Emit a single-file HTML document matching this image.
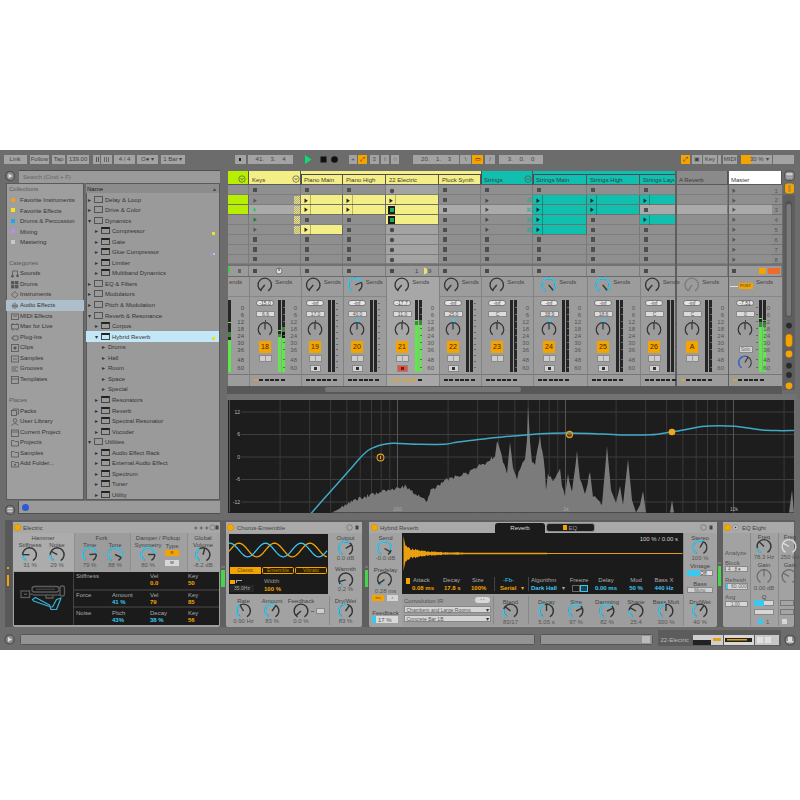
<!DOCTYPE html><html><head><meta charset="utf-8"><style>
html,body{margin:0;padding:0;background:#fff;}
body{width:800px;height:800px;position:relative;overflow:hidden;font-family:"Liberation Sans",sans-serif;}
body div, body svg{position:absolute;}
</style></head><body>
<div style="left:0px;top:150px;width:800px;height:500px;background:#6c6c6c;"></div>
<div style="left:3.5px;top:154.5px;width:23.2px;height:9px;background:#a3a3a3;font-size:6px;color:#444;text-align:center;line-height:9px;">Link</div>
<div style="left:29.5px;top:154.5px;width:19.7px;height:9px;background:#a3a3a3;font-size:6px;color:#444;text-align:center;line-height:9px;">Follow</div>
<div style="left:52px;top:154.5px;width:13.2px;height:9px;background:#a3a3a3;font-size:6px;color:#444;text-align:center;line-height:9px;">Tap</div>
<div style="left:67px;top:154.5px;width:22.2px;height:9px;background:#a3a3a3;font-size:6px;color:#444;text-align:center;line-height:9px;">139.00</div>
<div style="left:93px;top:154.5px;width:7.2px;height:9px;background:#a3a3a3;font-size:6px;color:#444;text-align:center;line-height:9px;"></div>
<div style="left:101px;top:154.5px;width:11.2px;height:9px;background:#a3a3a3;font-size:6px;color:#444;text-align:center;line-height:9px;"></div>
<div style="left:114px;top:154.5px;width:21.2px;height:9px;background:#a3a3a3;font-size:6px;color:#444;text-align:center;line-height:9px;">4 / 4</div>
<div style="left:137px;top:154.5px;width:21.2px;height:9px;background:#a3a3a3;font-size:6px;color:#444;text-align:center;line-height:9px;">O● ▾</div>
<div style="left:160.5px;top:154.5px;width:24.7px;height:9px;background:#a3a3a3;font-size:6px;color:#444;text-align:center;line-height:9px;">1 Bar ▾</div>
<div style="left:235px;top:154.5px;width:11.2px;height:9px;background:#a3a3a3;font-size:6px;color:#444;text-align:center;line-height:9px;"></div>
<div style="left:239px;top:157.5px;width:2px;height:3px;background:#222;"></div>
<div style="left:95.5px;top:156.5px;width:1px;height:5px;background:#555;"></div>
<div style="left:97.5px;top:156.5px;width:1px;height:5px;background:#555;"></div>
<div style="left:104px;top:156.5px;width:0.8px;height:5px;background:#666;"></div>
<div style="left:106px;top:156.5px;width:0.8px;height:5px;background:#666;"></div>
<div style="left:108px;top:156.5px;width:0.8px;height:5px;background:#666;"></div>
<div style="left:248px;top:154.5px;width:45.2px;height:9px;background:#a3a3a3;font-size:6px;color:#444;text-align:center;line-height:9px;">41.&nbsp;&nbsp;&nbsp;&nbsp;3.&nbsp;&nbsp;&nbsp;&nbsp;4</div>
<svg style="left:303px;top:154px" width="40" height="11"><polygon points="2,1 8.5,5.5 2,10" fill="#08e070"/><rect x="17.5" y="2.5" width="6" height="6" fill="#111"/><circle cx="31.5" cy="5.5" r="3.3" fill="#111"/></svg>
<div style="left:349px;top:154.5px;width:8.2px;height:9px;background:#a3a3a3;font-size:6px;color:#444;text-align:center;line-height:9px;">+</div>
<div style="left:358px;top:154.5px;width:9.2px;height:9px;background:#f5a300;font-size:6px;color:#222;text-align:center;line-height:9px;">⤢</div>
<div style="left:370px;top:154.5px;width:9.2px;height:9px;background:#a3a3a3;font-size:6px;color:#444;text-align:center;line-height:9px;">≡</div>
<div style="left:381px;top:154.5px;width:8.2px;height:9px;background:#a3a3a3;font-size:6px;color:#444;text-align:center;line-height:9px;">⁞⁞</div>
<div style="left:391px;top:154.5px;width:8.2px;height:9px;background:#a3a3a3;font-size:6px;color:#444;text-align:center;line-height:9px;">○</div>
<div style="left:413px;top:154.5px;width:46.2px;height:9px;background:#a3a3a3;font-size:6px;color:#444;text-align:center;line-height:9px;">20.&nbsp;&nbsp;&nbsp;&nbsp;1.&nbsp;&nbsp;&nbsp;&nbsp;3</div>
<div style="left:460px;top:154.5px;width:11.2px;height:9px;background:#a3a3a3;font-size:6px;color:#444;text-align:center;line-height:9px;">\</div>
<div style="left:472px;top:154.5px;width:11.2px;height:9px;background:#f5a300;font-size:6px;color:#222;text-align:center;line-height:9px;">▭</div>
<div style="left:485px;top:154.5px;width:10.2px;height:9px;background:#a3a3a3;font-size:6px;color:#444;text-align:center;line-height:9px;">/</div>
<div style="left:499px;top:154.5px;width:44.2px;height:9px;background:#a3a3a3;font-size:6px;color:#444;text-align:center;line-height:9px;">3.&nbsp;&nbsp;&nbsp;&nbsp;0.&nbsp;&nbsp;&nbsp;&nbsp;0</div>
<div style="left:680.5px;top:154.5px;width:9.2px;height:9px;background:#f5a300;font-size:6px;color:#222;text-align:center;line-height:9px;">⤢</div>
<div style="left:692px;top:154.5px;width:10.2px;height:9px;background:#a3a3a3;font-size:6px;color:#444;text-align:center;line-height:9px;">▣</div>
<div style="left:703px;top:154.5px;width:13.7px;height:9px;background:#a3a3a3;font-size:6px;color:#444;text-align:center;line-height:9px;">Key</div>
<div style="left:718px;top:154.5px;width:3.2px;height:9px;background:#a3a3a3;font-size:6px;color:#444;text-align:center;line-height:9px;"></div>
<div style="left:723px;top:154.5px;width:14.2px;height:9px;background:#a3a3a3;font-size:6px;color:#444;text-align:center;line-height:9px;">MIDI</div>
<div style="left:740.5px;top:154.5px;width:31.5px;height:9px;background:#a3a3a3;"></div>
<div style="left:740.5px;top:154.5px;width:10px;height:9px;background:#f5a300;"></div>
<div style="left:750px;top:155.5px;font-size:6px;color:#444;line-height:1;white-space:nowrap;">30 %</div>
<div style="left:766px;top:155.5px;font-size:6px;color:#444;line-height:1;white-space:nowrap;">▾</div>
<div style="left:773px;top:154.5px;width:21.2px;height:9px;background:#a3a3a3;font-size:6px;color:#444;text-align:center;line-height:9px;"></div>
<svg style="left:4px;top:170px" width="12" height="12"><circle cx="6" cy="6" r="4.5" fill="#8a8a8a" stroke="#4a4a4a" stroke-width="1.2"/><polygon points="4.5,3.5 8.5,6 4.5,8.5" fill="#ddd"/></svg>
<div style="left:18.5px;top:170px;width:201.5px;height:13px;background:#9a9a9a;border-top:1px solid #4f4f4f;box-sizing:border-box;"></div>
<div style="left:23px;top:174px;font-size:6px;color:#666;line-height:1;white-space:nowrap;">Search (Cmd + F)</div>
<div style="left:5.5px;top:183px;width:78.5px;height:317px;background:#9e9e9e;border:1px solid #5a5a5a;box-sizing:border-box;"></div>
<div style="left:85.5px;top:183px;width:134px;height:317px;background:#9a9a9a;border:1px solid #5a5a5a;box-sizing:border-box;"></div>
<div style="left:86px;top:184px;width:133px;height:9px;background:#8c8c8c;"></div>
<div style="left:87px;top:186px;font-size:6px;color:#222;line-height:1;white-space:nowrap;">Name</div>
<div style="left:213px;top:186px;font-size:6px;color:#444;line-height:1;white-space:nowrap;">▴</div>
<div style="left:9px;top:185.8px;font-size:6px;color:#5a5a5a;line-height:1;white-space:nowrap;">Collections</div>
<div style="left:11px;top:197.5px;width:4px;height:4px;background:#f59a23;"></div>
<div style="left:20px;top:197.0px;font-size:6px;color:#333;line-height:1;white-space:nowrap;">Favorite Instruments</div>
<div style="left:11px;top:208.0px;width:4px;height:4px;background:#f2e51a;"></div>
<div style="left:20px;top:207.5px;font-size:6px;color:#333;line-height:1;white-space:nowrap;">Favorite Effects</div>
<div style="left:11px;top:218.5px;width:4px;height:4px;background:#1aa9f0;"></div>
<div style="left:20px;top:218.0px;font-size:6px;color:#333;line-height:1;white-space:nowrap;">Drums &amp; Percussion</div>
<div style="left:11px;top:229.0px;width:4px;height:4px;background:#b58ef5;"></div>
<div style="left:20px;top:228.5px;font-size:6px;color:#333;line-height:1;white-space:nowrap;">Mixing</div>
<div style="left:11px;top:239.5px;width:4px;height:4px;background:#c8c8c8;"></div>
<div style="left:20px;top:239.0px;font-size:6px;color:#333;line-height:1;white-space:nowrap;">Mastering</div>
<div style="left:9px;top:259.5px;font-size:6px;color:#5a5a5a;line-height:1;white-space:nowrap;">Categories</div>
<div style="left:6px;top:300px;width:78px;height:11px;background:#aebfcc;"></div>
<svg style="left:11px;top:270.3px" width="9" height="9"><g fill="#555" stroke="#555" stroke-width="0.8"><path d="M1.5 6.5 L1.5 1 L6.5 1 L6.5 6" fill="none"/><circle cx="1.5" cy="6.3" r="1" /><circle cx="6.5" cy="5.8" r="1"/></g></svg>
<div style="left:20px;top:270.3px;font-size:6px;color:#333;line-height:1;white-space:nowrap;">Sounds</div>
<svg style="left:11px;top:280.85px" width="9" height="9"><g fill="#555" stroke="#555" stroke-width="0.8"><rect x="0.5" y="0.5" width="2.5" height="2.5"/><rect x="4.5" y="0.5" width="2.5" height="2.5"/><rect x="0.5" y="4.5" width="2.5" height="2.5"/><rect x="4.5" y="4.5" width="2.5" height="2.5"/></g></svg>
<div style="left:20px;top:280.85px;font-size:6px;color:#333;line-height:1;white-space:nowrap;">Drums</div>
<svg style="left:11px;top:291.40000000000003px" width="9" height="9"><g fill="#555" stroke="#555" stroke-width="0.8"><path d="M3.8 0.5 L7 3.8 L3.8 7 L0.5 3.8 Z" fill="none"/></g></svg>
<div style="left:20px;top:291.40000000000003px;font-size:6px;color:#333;line-height:1;white-space:nowrap;">Instruments</div>
<svg style="left:11px;top:301.95px" width="9" height="9"><g fill="#555" stroke="#555" stroke-width="0.8"><path d="M0.5 4 L7 4 M2 1.5 L2 6.5 M4 0.5 L4 7 M6 2 L6 6" fill="none"/></g></svg>
<div style="left:20px;top:301.95px;font-size:6px;color:#333;line-height:1;white-space:nowrap;">Audio Effects</div>
<svg style="left:11px;top:312.5px" width="9" height="9"><g fill="#555" stroke="#555" stroke-width="0.8"><rect x="0.5" y="1" width="7" height="5.5" fill="none"/><path d="M2 3 L6 3" fill="none"/></g></svg>
<div style="left:20px;top:312.5px;font-size:6px;color:#333;line-height:1;white-space:nowrap;">MIDI Effects</div>
<svg style="left:11px;top:323.05px" width="9" height="9"><g fill="#555" stroke="#555" stroke-width="0.8"><rect x="0.5" y="1.5" width="7" height="4.5" fill="none"/><path d="M2 1.5 L2 0 M6 1.5 L6 0 M2 6 L2 7.5 M6 6 L6 7.5" fill="none"/></g></svg>
<div style="left:20px;top:323.05px;font-size:6px;color:#333;line-height:1;white-space:nowrap;">Max for Live</div>
<svg style="left:11px;top:333.6px" width="9" height="9"><g fill="#555" stroke="#555" stroke-width="0.8"><path d="M0 4 L2 4 M2 2 L7 2 L7 6 L2 6 Z" fill="none"/></g></svg>
<div style="left:20px;top:333.6px;font-size:6px;color:#333;line-height:1;white-space:nowrap;">Plug-Ins</div>
<svg style="left:11px;top:344.15000000000003px" width="9" height="9"><g fill="#555" stroke="#555" stroke-width="0.8"><rect x="0.5" y="0.5" width="7" height="7" fill="none"/><rect x="3" y="3" width="2" height="2"/></g></svg>
<div style="left:20px;top:344.15000000000003px;font-size:6px;color:#333;line-height:1;white-space:nowrap;">Clips</div>
<svg style="left:11px;top:354.70000000000005px" width="9" height="9"><g fill="#555" stroke="#555" stroke-width="0.8"><rect x="0.5" y="1" width="7" height="6" fill="none"/><path d="M2 4 L6 4" fill="none"/></g></svg>
<div style="left:20px;top:354.70000000000005px;font-size:6px;color:#333;line-height:1;white-space:nowrap;">Samples</div>
<svg style="left:11px;top:365.25px" width="9" height="9"><g fill="#555" stroke="#555" stroke-width="0.8"><path d="M0.5 2 L7 2 M0.5 4 L5 4 M0.5 6 L7 6" fill="none"/></g></svg>
<div style="left:20px;top:365.25px;font-size:6px;color:#333;line-height:1;white-space:nowrap;">Grooves</div>
<svg style="left:11px;top:375.8px" width="9" height="9"><g fill="#555" stroke="#555" stroke-width="0.8"><rect x="0.5" y="0.5" width="7" height="7" fill="none"/><path d="M0.5 3 L7.5 3" fill="none"/></g></svg>
<div style="left:20px;top:375.8px;font-size:6px;color:#333;line-height:1;white-space:nowrap;">Templates</div>
<div style="left:9px;top:397px;font-size:6px;color:#5a5a5a;line-height:1;white-space:nowrap;">Places</div>
<svg style="left:11px;top:407.5px" width="9" height="9"><g fill="#555" stroke="#555" stroke-width="0.8"><rect x="0.5" y="2.5" width="5" height="5" fill="none"/><path d="M2 2.5 L2 1 L7.5 1 L7.5 6 L5.5 6" fill="none"/></g></svg>
<div style="left:20px;top:407.5px;font-size:6px;color:#333;line-height:1;white-space:nowrap;">Packs</div>
<svg style="left:11px;top:418.05px" width="9" height="9"><g fill="#555" stroke="#555" stroke-width="0.8"><circle cx="4" cy="2.5" r="1.8" fill="none"/><path d="M0.5 7.5 Q4 3.5 7.5 7.5" fill="none"/></g></svg>
<div style="left:20px;top:418.05px;font-size:6px;color:#333;line-height:1;white-space:nowrap;">User Library</div>
<svg style="left:11px;top:428.6px" width="9" height="9"><g fill="#555" stroke="#555" stroke-width="0.8"><rect x="0.5" y="1" width="7" height="6.5" fill="none"/><path d="M0.5 3 L7.5 3" fill="none"/></g></svg>
<div style="left:20px;top:428.6px;font-size:6px;color:#333;line-height:1;white-space:nowrap;">Current Project</div>
<svg style="left:11px;top:439.15px" width="9" height="9"><g fill="#555" stroke="#555" stroke-width="0.8"><path d="M0.5 1.5 L3 1.5 L4 2.5 L7.5 2.5 L7.5 7 L0.5 7 Z" fill="none"/></g></svg>
<div style="left:20px;top:439.15px;font-size:6px;color:#333;line-height:1;white-space:nowrap;">Projects</div>
<svg style="left:11px;top:449.7px" width="9" height="9"><g fill="#555" stroke="#555" stroke-width="0.8"><path d="M0.5 1.5 L3 1.5 L4 2.5 L7.5 2.5 L7.5 7 L0.5 7 Z" fill="none"/></g></svg>
<div style="left:20px;top:449.7px;font-size:6px;color:#333;line-height:1;white-space:nowrap;">Samples</div>
<svg style="left:11px;top:460.25px" width="9" height="9"><g fill="#555" stroke="#555" stroke-width="0.8"><path d="M0.5 1.5 L3 1.5 L4 2.5 L7.5 2.5 L7.5 7 L0.5 7 Z" fill="none"/><path d="M4 3.5 L4 6 M2.8 4.8 L5.2 4.8" fill="none"/></g></svg>
<div style="left:20px;top:460.25px;font-size:6px;color:#333;line-height:1;white-space:nowrap;">Add Folder...</div>
<div style="left:88px;top:196.5px;font-size:6px;color:#333;line-height:1;white-space:nowrap;">▸</div>
<div style="left:94px;top:195.5px;width:9px;height:7px;border:1px solid #555;box-sizing:border-box;"></div>
<div style="left:105px;top:196.5px;font-size:6px;color:#333;line-height:1;white-space:nowrap;">Delay &amp; Loop</div>
<div style="left:88px;top:207.05px;font-size:6px;color:#333;line-height:1;white-space:nowrap;">▸</div>
<div style="left:94px;top:206.05px;width:9px;height:7px;border:1px solid #555;box-sizing:border-box;"></div>
<div style="left:105px;top:207.05px;font-size:6px;color:#333;line-height:1;white-space:nowrap;">Drive &amp; Color</div>
<div style="left:88px;top:217.6px;font-size:6px;color:#333;line-height:1;white-space:nowrap;">▾</div>
<div style="left:94px;top:216.6px;width:9px;height:7px;border:1px solid #555;box-sizing:border-box;"></div>
<div style="left:105px;top:217.6px;font-size:6px;color:#333;line-height:1;white-space:nowrap;">Dynamics</div>
<div style="left:95px;top:228.15px;font-size:6px;color:#333;line-height:1;white-space:nowrap;">▸</div>
<div style="left:101px;top:227.15px;width:9px;height:7px;border:1px solid #444;border-top:2px solid #222;box-sizing:border-box;"></div>
<div style="left:112px;top:228.15px;font-size:6px;color:#333;line-height:1;white-space:nowrap;">Compressor</div>
<div style="left:95px;top:238.7px;font-size:6px;color:#333;line-height:1;white-space:nowrap;">▸</div>
<div style="left:101px;top:237.7px;width:9px;height:7px;border:1px solid #444;border-top:2px solid #222;box-sizing:border-box;"></div>
<div style="left:112px;top:238.7px;font-size:6px;color:#333;line-height:1;white-space:nowrap;">Gate</div>
<div style="left:95px;top:249.25px;font-size:6px;color:#333;line-height:1;white-space:nowrap;">▸</div>
<div style="left:101px;top:248.25px;width:9px;height:7px;border:1px solid #444;border-top:2px solid #222;box-sizing:border-box;"></div>
<div style="left:112px;top:249.25px;font-size:6px;color:#333;line-height:1;white-space:nowrap;">Glue Compressor</div>
<div style="left:95px;top:259.8px;font-size:6px;color:#333;line-height:1;white-space:nowrap;">▸</div>
<div style="left:101px;top:258.8px;width:9px;height:7px;border:1px solid #444;border-top:2px solid #222;box-sizing:border-box;"></div>
<div style="left:112px;top:259.8px;font-size:6px;color:#333;line-height:1;white-space:nowrap;">Limiter</div>
<div style="left:95px;top:270.35px;font-size:6px;color:#333;line-height:1;white-space:nowrap;">▸</div>
<div style="left:101px;top:269.35px;width:9px;height:7px;border:1px solid #444;border-top:2px solid #222;box-sizing:border-box;"></div>
<div style="left:112px;top:270.35px;font-size:6px;color:#333;line-height:1;white-space:nowrap;">Multiband Dynamics</div>
<div style="left:88px;top:280.9px;font-size:6px;color:#333;line-height:1;white-space:nowrap;">▸</div>
<div style="left:94px;top:279.9px;width:9px;height:7px;border:1px solid #555;box-sizing:border-box;"></div>
<div style="left:105px;top:280.9px;font-size:6px;color:#333;line-height:1;white-space:nowrap;">EQ &amp; Filters</div>
<div style="left:88px;top:291.45px;font-size:6px;color:#333;line-height:1;white-space:nowrap;">▸</div>
<div style="left:94px;top:290.45px;width:9px;height:7px;border:1px solid #555;box-sizing:border-box;"></div>
<div style="left:105px;top:291.45px;font-size:6px;color:#333;line-height:1;white-space:nowrap;">Modulators</div>
<div style="left:88px;top:302.0px;font-size:6px;color:#333;line-height:1;white-space:nowrap;">▸</div>
<div style="left:94px;top:301.0px;width:9px;height:7px;border:1px solid #555;box-sizing:border-box;"></div>
<div style="left:105px;top:302.0px;font-size:6px;color:#333;line-height:1;white-space:nowrap;">Pitch &amp; Modulation</div>
<div style="left:88px;top:312.55px;font-size:6px;color:#333;line-height:1;white-space:nowrap;">▾</div>
<div style="left:94px;top:311.55px;width:9px;height:7px;border:1px solid #555;box-sizing:border-box;"></div>
<div style="left:105px;top:312.55px;font-size:6px;color:#333;line-height:1;white-space:nowrap;">Reverb &amp; Resonance</div>
<div style="left:95px;top:323.1px;font-size:6px;color:#333;line-height:1;white-space:nowrap;">▸</div>
<div style="left:101px;top:322.1px;width:9px;height:7px;border:1px solid #444;border-top:2px solid #222;box-sizing:border-box;"></div>
<div style="left:112px;top:323.1px;font-size:6px;color:#333;line-height:1;white-space:nowrap;">Corpus</div>
<div style="left:86px;top:331.15px;width:133px;height:11px;background:#c3e7f7;"></div>
<div style="left:95px;top:333.65px;font-size:6px;color:#333;line-height:1;white-space:nowrap;">▾</div>
<div style="left:101px;top:332.65px;width:9px;height:7px;border:1px solid #444;border-top:2px solid #222;box-sizing:border-box;"></div>
<div style="left:112px;top:333.65px;font-size:6px;color:#333;line-height:1;white-space:nowrap;">Hybrid Reverb</div>
<div style="left:102px;top:344.20000000000005px;font-size:6px;color:#333;line-height:1;white-space:nowrap;">▸</div>
<div style="left:108px;top:344.20000000000005px;font-size:6px;color:#333;line-height:1;white-space:nowrap;">Drums</div>
<div style="left:102px;top:354.75px;font-size:6px;color:#333;line-height:1;white-space:nowrap;">▸</div>
<div style="left:108px;top:354.75px;font-size:6px;color:#333;line-height:1;white-space:nowrap;">Hall</div>
<div style="left:102px;top:365.3px;font-size:6px;color:#333;line-height:1;white-space:nowrap;">▸</div>
<div style="left:108px;top:365.3px;font-size:6px;color:#333;line-height:1;white-space:nowrap;">Room</div>
<div style="left:102px;top:375.85px;font-size:6px;color:#333;line-height:1;white-space:nowrap;">▸</div>
<div style="left:108px;top:375.85px;font-size:6px;color:#333;line-height:1;white-space:nowrap;">Space</div>
<div style="left:102px;top:386.4px;font-size:6px;color:#333;line-height:1;white-space:nowrap;">▸</div>
<div style="left:108px;top:386.4px;font-size:6px;color:#333;line-height:1;white-space:nowrap;">Special</div>
<div style="left:95px;top:396.95000000000005px;font-size:6px;color:#333;line-height:1;white-space:nowrap;">▸</div>
<div style="left:101px;top:395.95000000000005px;width:9px;height:7px;border:1px solid #444;border-top:2px solid #222;box-sizing:border-box;"></div>
<div style="left:112px;top:396.95000000000005px;font-size:6px;color:#333;line-height:1;white-space:nowrap;">Resonators</div>
<div style="left:95px;top:407.5px;font-size:6px;color:#333;line-height:1;white-space:nowrap;">▸</div>
<div style="left:101px;top:406.5px;width:9px;height:7px;border:1px solid #444;border-top:2px solid #222;box-sizing:border-box;"></div>
<div style="left:112px;top:407.5px;font-size:6px;color:#333;line-height:1;white-space:nowrap;">Reverb</div>
<div style="left:95px;top:418.05px;font-size:6px;color:#333;line-height:1;white-space:nowrap;">▸</div>
<div style="left:101px;top:417.05px;width:9px;height:7px;border:1px solid #444;border-top:2px solid #222;box-sizing:border-box;"></div>
<div style="left:112px;top:418.05px;font-size:6px;color:#333;line-height:1;white-space:nowrap;">Spectral Resonator</div>
<div style="left:95px;top:428.6px;font-size:6px;color:#333;line-height:1;white-space:nowrap;">▸</div>
<div style="left:101px;top:427.6px;width:9px;height:7px;border:1px solid #444;border-top:2px solid #222;box-sizing:border-box;"></div>
<div style="left:112px;top:428.6px;font-size:6px;color:#333;line-height:1;white-space:nowrap;">Vocoder</div>
<div style="left:88px;top:439.15px;font-size:6px;color:#333;line-height:1;white-space:nowrap;">▾</div>
<div style="left:94px;top:438.15px;width:9px;height:7px;border:1px solid #555;box-sizing:border-box;"></div>
<div style="left:105px;top:439.15px;font-size:6px;color:#333;line-height:1;white-space:nowrap;">Utilities</div>
<div style="left:95px;top:449.70000000000005px;font-size:6px;color:#333;line-height:1;white-space:nowrap;">▸</div>
<div style="left:101px;top:448.70000000000005px;width:9px;height:7px;border:1px solid #444;border-top:2px solid #222;box-sizing:border-box;"></div>
<div style="left:112px;top:449.70000000000005px;font-size:6px;color:#333;line-height:1;white-space:nowrap;">Audio Effect Rack</div>
<div style="left:95px;top:460.25px;font-size:6px;color:#333;line-height:1;white-space:nowrap;">▸</div>
<div style="left:101px;top:459.25px;width:9px;height:7px;border:1px solid #444;border-top:2px solid #222;box-sizing:border-box;"></div>
<div style="left:112px;top:460.25px;font-size:6px;color:#333;line-height:1;white-space:nowrap;">External Audio Effect</div>
<div style="left:95px;top:470.8px;font-size:6px;color:#333;line-height:1;white-space:nowrap;">▸</div>
<div style="left:101px;top:469.8px;width:9px;height:7px;border:1px solid #444;border-top:2px solid #222;box-sizing:border-box;"></div>
<div style="left:112px;top:470.8px;font-size:6px;color:#333;line-height:1;white-space:nowrap;">Spectrum</div>
<div style="left:95px;top:481.35px;font-size:6px;color:#333;line-height:1;white-space:nowrap;">▸</div>
<div style="left:101px;top:480.35px;width:9px;height:7px;border:1px solid #444;border-top:2px solid #222;box-sizing:border-box;"></div>
<div style="left:112px;top:481.35px;font-size:6px;color:#333;line-height:1;white-space:nowrap;">Tuner</div>
<div style="left:95px;top:491.90000000000003px;font-size:6px;color:#333;line-height:1;white-space:nowrap;">▸</div>
<div style="left:101px;top:490.90000000000003px;width:9px;height:7px;border:1px solid #444;border-top:2px solid #222;box-sizing:border-box;"></div>
<div style="left:112px;top:491.90000000000003px;font-size:6px;color:#333;line-height:1;white-space:nowrap;">Utility</div>
<div style="left:212px;top:232px;width:3px;height:3px;background:#e8e020;"></div>
<div style="left:210px;top:253px;width:2px;height:2px;background:#a98ef0;"></div>
<div style="left:213px;top:253px;width:2px;height:2px;background:#c4c4c4;"></div>
<div style="left:212px;top:337px;width:3px;height:3px;background:#e8e020;"></div>
<svg style="left:4px;top:504px" width="12" height="12"><circle cx="6" cy="6" r="4.5" fill="#8a8a8a" stroke="#4a4a4a" stroke-width="1.2"/><rect x="3.5" y="4" width="5" height="1.2" fill="#ddd"/><rect x="3.5" y="6.5" width="5" height="1.2" fill="#ddd"/></svg>
<div style="left:18px;top:501px;width:202px;height:13px;background:#9a9a9a;border-left:1px solid #4f4f4f;border-bottom:1px solid #4f4f4f;box-sizing:border-box;"></div>
<svg style="left:21px;top:503px" width="9" height="9"><circle cx="4.5" cy="4.5" r="3.5" fill="#2a5ad8"/></svg>
<div style="left:228px;top:171px;width:557px;height:215px;background:#7a7a7a;"></div>
<div style="left:249px;top:171px;width:232px;height:3px;background:#f3ee85;"></div>
<div style="left:481px;top:171px;width:195px;height:3px;background:#11bfae;"></div>
<div style="left:228px;top:171px;width:21px;height:14px;background:#b8ef00;box-sizing:border-box;border-right:1px solid #555;"></div>
<div style="left:249px;top:171px;width:52px;height:14px;background:#f3ee85;box-sizing:border-box;border-right:1px solid #555;"></div>
<div style="left:252px;top:176.5px;font-size:6px;color:#3a3a3a;line-height:1;white-space:nowrap;overflow:hidden;width:47px;">Keys</div>
<div style="left:301px;top:174px;width:42px;height:11px;background:#f3ee85;box-sizing:border-box;border-right:1px solid #555;"></div>
<div style="left:304px;top:176.5px;font-size:6px;color:#3a3a3a;line-height:1;white-space:nowrap;overflow:hidden;width:37px;">Piano Main</div>
<div style="left:343px;top:174px;width:43px;height:11px;background:#f3ee85;box-sizing:border-box;border-right:1px solid #555;"></div>
<div style="left:346px;top:176.5px;font-size:6px;color:#3a3a3a;line-height:1;white-space:nowrap;overflow:hidden;width:38px;">Piano High</div>
<div style="left:386px;top:174px;width:53px;height:11px;background:#f3ee85;box-sizing:border-box;border-right:1px solid #555;"></div>
<div style="left:389px;top:176.5px;font-size:6px;color:#3a3a3a;line-height:1;white-space:nowrap;overflow:hidden;width:48px;">22 Electric</div>
<div style="left:439px;top:174px;width:42px;height:11px;background:#f3ee85;box-sizing:border-box;border-right:1px solid #555;"></div>
<div style="left:442px;top:176.5px;font-size:6px;color:#3a3a3a;line-height:1;white-space:nowrap;overflow:hidden;width:37px;">Pluck Synth</div>
<div style="left:481px;top:171px;width:52px;height:14px;background:#11bfae;box-sizing:border-box;border-right:1px solid #555;"></div>
<div style="left:484px;top:176.5px;font-size:6px;color:#3a3a3a;line-height:1;white-space:nowrap;overflow:hidden;width:47px;">Strings</div>
<div style="left:533px;top:174px;width:54px;height:11px;background:#11bfae;box-sizing:border-box;border-right:1px solid #555;"></div>
<div style="left:536px;top:176.5px;font-size:6px;color:#3a3a3a;line-height:1;white-space:nowrap;overflow:hidden;width:49px;">Strings Main</div>
<div style="left:587px;top:174px;width:53px;height:11px;background:#11bfae;box-sizing:border-box;border-right:1px solid #555;"></div>
<div style="left:590px;top:176.5px;font-size:6px;color:#3a3a3a;line-height:1;white-space:nowrap;overflow:hidden;width:48px;">Strings High</div>
<div style="left:640px;top:174px;width:36px;height:11px;background:#11bfae;box-sizing:border-box;border-right:1px solid #555;"></div>
<div style="left:643px;top:176.5px;font-size:6px;color:#3a3a3a;line-height:1;white-space:nowrap;overflow:hidden;width:31px;">Strings Layer</div>
<div style="left:676px;top:171px;width:52px;height:14px;background:#8a8a8a;box-sizing:border-box;border-right:1px solid #555;"></div>
<div style="left:679px;top:176.5px;font-size:6px;color:#3a3a3a;line-height:1;white-space:nowrap;overflow:hidden;width:47px;">A Reverb</div>
<div style="left:728px;top:171px;width:54px;height:14px;background:#ffffff;box-sizing:border-box;border-right:1px solid #555;"></div>
<div style="left:731px;top:176.5px;font-size:6px;color:#3a3a3a;line-height:1;white-space:nowrap;overflow:hidden;width:49px;">Master</div>
<div style="left:301px;top:173.6px;width:180px;height:0.9px;background:#4a4a5a;"></div>
<div style="left:533px;top:173.6px;width:143px;height:0.9px;background:#4a4a5a;"></div>
<div style="left:481px;top:171px;width:0.8px;height:14px;background:#4a4a5a;"></div>
<div style="left:533px;top:173.6px;width:0.9px;height:11.5px;background:#4a4a5a;"></div>
<div style="left:301px;top:173.6px;width:0.9px;height:11.5px;background:#4a4a5a;"></div>
<div style="left:228px;top:184.3px;width:21px;height:0.8px;background:#555a66;"></div>
<div style="left:249px;top:184.3px;width:52px;height:0.8px;background:#555a66;"></div>
<div style="left:301px;top:184.3px;width:42px;height:0.8px;background:#555a66;"></div>
<div style="left:343px;top:184.3px;width:43px;height:0.8px;background:#555a66;"></div>
<div style="left:386px;top:184.3px;width:53px;height:0.8px;background:#555a66;"></div>
<div style="left:439px;top:184.3px;width:42px;height:0.8px;background:#555a66;"></div>
<div style="left:481px;top:184.3px;width:52px;height:0.8px;background:#555a66;"></div>
<div style="left:533px;top:184.3px;width:54px;height:0.8px;background:#555a66;"></div>
<div style="left:587px;top:184.3px;width:53px;height:0.8px;background:#555a66;"></div>
<div style="left:640px;top:184.3px;width:36px;height:0.8px;background:#555a66;"></div>
<div style="left:676px;top:184.3px;width:52px;height:0.8px;background:#555a66;"></div>
<div style="left:728px;top:184.3px;width:54px;height:0.8px;background:#555a66;"></div>
<div style="left:228px;top:185.0px;width:21px;height:9.930000000000007px;background:#8f8f8f;box-sizing:border-box;border-right:1px solid #7a7a7a;border-bottom:1px solid #7e7e7e;"></div>
<div style="left:228px;top:194.93px;width:21px;height:9.930000000000007px;background:#b8ef00;box-sizing:border-box;border-right:1px solid #666;border-bottom:1px solid #707070;"></div>
<div style="left:228px;top:204.86px;width:21px;height:9.929999999999978px;background:#b8ef00;box-sizing:border-box;border-right:1px solid #666;border-bottom:1px solid #707070;"></div>
<div style="left:228px;top:214.79px;width:21px;height:9.930000000000007px;background:#8f8f8f;box-sizing:border-box;border-right:1px solid #7a7a7a;border-bottom:1px solid #7e7e7e;"></div>
<div style="left:228px;top:224.72px;width:21px;height:9.930000000000007px;background:#8f8f8f;box-sizing:border-box;border-right:1px solid #7a7a7a;border-bottom:1px solid #7e7e7e;"></div>
<div style="left:228px;top:234.65px;width:21px;height:9.929999999999978px;background:#8f8f8f;box-sizing:border-box;border-right:1px solid #7a7a7a;border-bottom:1px solid #7e7e7e;"></div>
<div style="left:228px;top:244.57999999999998px;width:21px;height:9.930000000000007px;background:#8f8f8f;box-sizing:border-box;border-right:1px solid #7a7a7a;border-bottom:1px solid #7e7e7e;"></div>
<div style="left:228px;top:254.51px;width:21px;height:9.930000000000007px;background:#8f8f8f;box-sizing:border-box;border-right:1px solid #7a7a7a;border-bottom:1px solid #7e7e7e;"></div>
<div style="left:249px;top:185.0px;width:52px;height:9.930000000000007px;background:#8f8f8f;box-sizing:border-box;border-right:1px solid #7a7a7a;border-bottom:1px solid #7e7e7e;"></div>
<div style="left:252.8px;top:187.8px;width:4.2px;height:4.2px;background:#4e4e4e;"></div>
<div style="left:249px;top:194.93px;width:52px;height:9.930000000000007px;background:#8f8f8f;box-sizing:border-box;border-right:1px solid #7a7a7a;border-bottom:1px solid #7e7e7e;"></div>
<svg style="left:252.5px;top:197.53px" width="4.8" height="5.4"><polygon points="0.5,0.5 3.8,2.7 0.5,4.9" fill="#555"/></svg>
<div style="left:294px;top:195.93px;width:6px;height:7.930000000000007px;background:repeating-conic-gradient(#e6e08a 0 25%, #b8b27a 0 50%) 0 0/2px 2px;"></div>
<div style="left:249px;top:204.86px;width:52px;height:9.929999999999978px;background:#aaaaaa;box-sizing:border-box;border-right:1px solid #7a7a7a;border-bottom:1px solid #7e7e7e;"></div>
<svg style="left:252.5px;top:207.46px" width="4.8" height="5.4"><polygon points="0.5,0.5 3.8,2.7 0.5,4.9" fill="#22cc66"/></svg>
<div style="left:294px;top:205.86px;width:6px;height:7.929999999999978px;background:repeating-conic-gradient(#e6e08a 0 25%, #b8b27a 0 50%) 0 0/2px 2px;"></div>
<div style="left:249px;top:214.79px;width:52px;height:9.930000000000007px;background:#8f8f8f;box-sizing:border-box;border-right:1px solid #7a7a7a;border-bottom:1px solid #7e7e7e;"></div>
<svg style="left:252.5px;top:217.39px" width="4.8" height="5.4"><polygon points="0.5,0.5 3.8,2.7 0.5,4.9" fill="#1a7a3a"/></svg>
<div style="left:294px;top:215.79px;width:6px;height:7.930000000000007px;background:repeating-conic-gradient(#e6e08a 0 25%, #b8b27a 0 50%) 0 0/2px 2px;"></div>
<div style="left:249px;top:224.72px;width:52px;height:9.930000000000007px;background:#8f8f8f;box-sizing:border-box;border-right:1px solid #7a7a7a;border-bottom:1px solid #7e7e7e;"></div>
<svg style="left:252.5px;top:227.32px" width="4.8" height="5.4"><polygon points="0.5,0.5 3.8,2.7 0.5,4.9" fill="#555"/></svg>
<div style="left:294px;top:225.72px;width:6px;height:7.930000000000007px;background:repeating-conic-gradient(#e6e08a 0 25%, #b8b27a 0 50%) 0 0/2px 2px;"></div>
<div style="left:249px;top:234.65px;width:52px;height:9.929999999999978px;background:#8f8f8f;box-sizing:border-box;border-right:1px solid #7a7a7a;border-bottom:1px solid #7e7e7e;"></div>
<div style="left:252.8px;top:237.45000000000002px;width:4.2px;height:4.2px;background:#4e4e4e;"></div>
<div style="left:249px;top:244.57999999999998px;width:52px;height:9.930000000000007px;background:#8f8f8f;box-sizing:border-box;border-right:1px solid #7a7a7a;border-bottom:1px solid #7e7e7e;"></div>
<div style="left:252.8px;top:247.38px;width:4.2px;height:4.2px;background:#4e4e4e;"></div>
<div style="left:249px;top:254.51px;width:52px;height:9.930000000000007px;background:#8f8f8f;box-sizing:border-box;border-right:1px solid #7a7a7a;border-bottom:1px solid #7e7e7e;"></div>
<div style="left:252.8px;top:257.31px;width:4.2px;height:4.2px;background:#4e4e4e;"></div>
<div style="left:301px;top:185.0px;width:42px;height:9.930000000000007px;background:#8f8f8f;box-sizing:border-box;border-right:1px solid #7a7a7a;border-bottom:1px solid #7e7e7e;"></div>
<div style="left:304.8px;top:187.8px;width:4.2px;height:4.2px;background:#4e4e4e;"></div>
<div style="left:301px;top:194.93px;width:42px;height:9.930000000000007px;background:#f3ee85;box-sizing:border-box;border-right:1px solid #666;border-bottom:1px solid #707070;"></div>
<svg style="left:304px;top:197.53px" width="4.8" height="5.4"><polygon points="0.5,0.5 3.8,2.7 0.5,4.9" fill="#222"/></svg>
<div style="left:310px;top:194.93px;width:0.8px;height:9.930000000000007px;background:rgba(0,0,0,0.25);"></div>
<div style="left:301px;top:204.86px;width:42px;height:9.929999999999978px;background:#f3ee85;box-sizing:border-box;border-right:1px solid #666;border-bottom:1px solid #707070;"></div>
<svg style="left:304px;top:207.46px" width="4.8" height="5.4"><polygon points="0.5,0.5 3.8,2.7 0.5,4.9" fill="#222"/></svg>
<div style="left:310px;top:204.86px;width:0.8px;height:9.929999999999978px;background:rgba(0,0,0,0.25);"></div>
<div style="left:301px;top:214.79px;width:42px;height:9.930000000000007px;background:#8f8f8f;box-sizing:border-box;border-right:1px solid #7a7a7a;border-bottom:1px solid #7e7e7e;"></div>
<div style="left:304.8px;top:217.59px;width:4.2px;height:4.2px;background:#4e4e4e;"></div>
<div style="left:301px;top:224.72px;width:42px;height:9.930000000000007px;background:#f3ee85;box-sizing:border-box;border-right:1px solid #666;border-bottom:1px solid #707070;"></div>
<svg style="left:304px;top:227.32px" width="4.8" height="5.4"><polygon points="0.5,0.5 3.8,2.7 0.5,4.9" fill="#222"/></svg>
<div style="left:310px;top:224.72px;width:0.8px;height:9.930000000000007px;background:rgba(0,0,0,0.25);"></div>
<div style="left:301px;top:234.65px;width:42px;height:9.929999999999978px;background:#8f8f8f;box-sizing:border-box;border-right:1px solid #7a7a7a;border-bottom:1px solid #7e7e7e;"></div>
<div style="left:304.8px;top:237.45000000000002px;width:4.2px;height:4.2px;background:#4e4e4e;"></div>
<div style="left:301px;top:244.57999999999998px;width:42px;height:9.930000000000007px;background:#8f8f8f;box-sizing:border-box;border-right:1px solid #7a7a7a;border-bottom:1px solid #7e7e7e;"></div>
<div style="left:304.8px;top:247.38px;width:4.2px;height:4.2px;background:#4e4e4e;"></div>
<div style="left:301px;top:254.51px;width:42px;height:9.930000000000007px;background:#8f8f8f;box-sizing:border-box;border-right:1px solid #7a7a7a;border-bottom:1px solid #7e7e7e;"></div>
<div style="left:304.8px;top:257.31px;width:4.2px;height:4.2px;background:#4e4e4e;"></div>
<div style="left:343px;top:185.0px;width:43px;height:9.930000000000007px;background:#8f8f8f;box-sizing:border-box;border-right:1px solid #7a7a7a;border-bottom:1px solid #7e7e7e;"></div>
<div style="left:346.8px;top:187.8px;width:4.2px;height:4.2px;background:#4e4e4e;"></div>
<div style="left:343px;top:194.93px;width:43px;height:9.930000000000007px;background:#f3ee85;box-sizing:border-box;border-right:1px solid #666;border-bottom:1px solid #707070;"></div>
<svg style="left:346px;top:197.53px" width="4.8" height="5.4"><polygon points="0.5,0.5 3.8,2.7 0.5,4.9" fill="#222"/></svg>
<div style="left:352px;top:194.93px;width:0.8px;height:9.930000000000007px;background:rgba(0,0,0,0.25);"></div>
<div style="left:343px;top:204.86px;width:43px;height:9.929999999999978px;background:#f3ee85;box-sizing:border-box;border-right:1px solid #666;border-bottom:1px solid #707070;"></div>
<svg style="left:346px;top:207.46px" width="4.8" height="5.4"><polygon points="0.5,0.5 3.8,2.7 0.5,4.9" fill="#222"/></svg>
<div style="left:352px;top:204.86px;width:0.8px;height:9.929999999999978px;background:rgba(0,0,0,0.25);"></div>
<div style="left:343px;top:214.79px;width:43px;height:9.930000000000007px;background:#8f8f8f;box-sizing:border-box;border-right:1px solid #7a7a7a;border-bottom:1px solid #7e7e7e;"></div>
<div style="left:346.8px;top:217.59px;width:4.2px;height:4.2px;background:#4e4e4e;"></div>
<div style="left:343px;top:224.72px;width:43px;height:9.930000000000007px;background:#8f8f8f;box-sizing:border-box;border-right:1px solid #7a7a7a;border-bottom:1px solid #7e7e7e;"></div>
<div style="left:346.8px;top:227.52px;width:4.2px;height:4.2px;background:#4e4e4e;"></div>
<div style="left:343px;top:234.65px;width:43px;height:9.929999999999978px;background:#8f8f8f;box-sizing:border-box;border-right:1px solid #7a7a7a;border-bottom:1px solid #7e7e7e;"></div>
<div style="left:346.8px;top:237.45000000000002px;width:4.2px;height:4.2px;background:#4e4e4e;"></div>
<div style="left:343px;top:244.57999999999998px;width:43px;height:9.930000000000007px;background:#8f8f8f;box-sizing:border-box;border-right:1px solid #7a7a7a;border-bottom:1px solid #7e7e7e;"></div>
<div style="left:346.8px;top:247.38px;width:4.2px;height:4.2px;background:#4e4e4e;"></div>
<div style="left:343px;top:254.51px;width:43px;height:9.930000000000007px;background:#8f8f8f;box-sizing:border-box;border-right:1px solid #7a7a7a;border-bottom:1px solid #7e7e7e;"></div>
<div style="left:346.8px;top:257.31px;width:4.2px;height:4.2px;background:#4e4e4e;"></div>
<div style="left:386px;top:185.0px;width:53px;height:9.930000000000007px;background:#a3a3a3;box-sizing:border-box;border-right:1px solid #7a7a7a;border-bottom:1px solid #7e7e7e;"></div>
<svg style="left:389px;top:187.5px" width="6" height="6"><circle cx="3" cy="3" r="2.2" fill="#4a4a4a"/></svg>
<div style="left:386px;top:194.93px;width:53px;height:9.930000000000007px;background:#f3ee85;box-sizing:border-box;border-right:1px solid #666;border-bottom:1px solid #707070;"></div>
<svg style="left:389px;top:197.53px" width="4.8" height="5.4"><polygon points="0.5,0.5 3.8,2.7 0.5,4.9" fill="#222"/></svg>
<div style="left:395px;top:194.93px;width:0.8px;height:9.930000000000007px;background:rgba(0,0,0,0.25);"></div>
<div style="left:386px;top:204.86px;width:53px;height:9.929999999999978px;background:#f3ee85;box-sizing:border-box;border-right:1px solid #666;border-bottom:1px solid #707070;"></div>
<div style="left:388px;top:205.86px;width:7px;height:7.929999999999978px;background:#1d1d1d;"></div>
<div style="left:389.5px;top:207.86px;width:4px;height:4px;background:#1faa55;"></div>
<div style="left:386px;top:214.79px;width:53px;height:9.930000000000007px;background:#f3ee85;box-sizing:border-box;border-right:1px solid #666;border-bottom:1px solid #707070;"></div>
<div style="left:388px;top:215.79px;width:7px;height:7.930000000000007px;background:#1d1d1d;"></div>
<div style="left:389.5px;top:217.79px;width:4px;height:4px;background:#1faa55;"></div>
<div style="left:386px;top:224.72px;width:53px;height:9.930000000000007px;background:#a3a3a3;box-sizing:border-box;border-right:1px solid #7a7a7a;border-bottom:1px solid #7e7e7e;"></div>
<svg style="left:389px;top:227.22px" width="6" height="6"><circle cx="3" cy="3" r="2.2" fill="#4a4a4a"/></svg>
<div style="left:386px;top:234.65px;width:53px;height:9.929999999999978px;background:#a3a3a3;box-sizing:border-box;border-right:1px solid #7a7a7a;border-bottom:1px solid #7e7e7e;"></div>
<svg style="left:389px;top:237.15px" width="6" height="6"><circle cx="3" cy="3" r="2.2" fill="#4a4a4a"/></svg>
<div style="left:386px;top:244.57999999999998px;width:53px;height:9.930000000000007px;background:#a3a3a3;box-sizing:border-box;border-right:1px solid #7a7a7a;border-bottom:1px solid #7e7e7e;"></div>
<svg style="left:389px;top:247.07999999999998px" width="6" height="6"><circle cx="3" cy="3" r="2.2" fill="#4a4a4a"/></svg>
<div style="left:386px;top:254.51px;width:53px;height:9.930000000000007px;background:#a3a3a3;box-sizing:border-box;border-right:1px solid #7a7a7a;border-bottom:1px solid #7e7e7e;"></div>
<svg style="left:389px;top:257.01px" width="6" height="6"><circle cx="3" cy="3" r="2.2" fill="#4a4a4a"/></svg>
<div style="left:439px;top:185.0px;width:42px;height:9.930000000000007px;background:#8f8f8f;box-sizing:border-box;border-right:1px solid #7a7a7a;border-bottom:1px solid #7e7e7e;"></div>
<div style="left:442.8px;top:187.8px;width:4.2px;height:4.2px;background:#4e4e4e;"></div>
<div style="left:439px;top:194.93px;width:42px;height:9.930000000000007px;background:#8f8f8f;box-sizing:border-box;border-right:1px solid #7a7a7a;border-bottom:1px solid #7e7e7e;"></div>
<div style="left:442.8px;top:197.73000000000002px;width:4.2px;height:4.2px;background:#4e4e4e;"></div>
<div style="left:439px;top:204.86px;width:42px;height:9.929999999999978px;background:#aaaaaa;box-sizing:border-box;border-right:1px solid #7a7a7a;border-bottom:1px solid #7e7e7e;"></div>
<div style="left:442.8px;top:207.66000000000003px;width:4.2px;height:4.2px;background:#4e4e4e;"></div>
<div style="left:439px;top:214.79px;width:42px;height:9.930000000000007px;background:#8f8f8f;box-sizing:border-box;border-right:1px solid #7a7a7a;border-bottom:1px solid #7e7e7e;"></div>
<div style="left:442.8px;top:217.59px;width:4.2px;height:4.2px;background:#4e4e4e;"></div>
<div style="left:439px;top:224.72px;width:42px;height:9.930000000000007px;background:#8f8f8f;box-sizing:border-box;border-right:1px solid #7a7a7a;border-bottom:1px solid #7e7e7e;"></div>
<div style="left:442.8px;top:227.52px;width:4.2px;height:4.2px;background:#4e4e4e;"></div>
<div style="left:439px;top:234.65px;width:42px;height:9.929999999999978px;background:#8f8f8f;box-sizing:border-box;border-right:1px solid #7a7a7a;border-bottom:1px solid #7e7e7e;"></div>
<div style="left:442.8px;top:237.45000000000002px;width:4.2px;height:4.2px;background:#4e4e4e;"></div>
<div style="left:439px;top:244.57999999999998px;width:42px;height:9.930000000000007px;background:#8f8f8f;box-sizing:border-box;border-right:1px solid #7a7a7a;border-bottom:1px solid #7e7e7e;"></div>
<div style="left:442.8px;top:247.38px;width:4.2px;height:4.2px;background:#4e4e4e;"></div>
<div style="left:439px;top:254.51px;width:42px;height:9.930000000000007px;background:#8f8f8f;box-sizing:border-box;border-right:1px solid #7a7a7a;border-bottom:1px solid #7e7e7e;"></div>
<div style="left:442.8px;top:257.31px;width:4.2px;height:4.2px;background:#4e4e4e;"></div>
<div style="left:481px;top:185.0px;width:52px;height:9.930000000000007px;background:#8f8f8f;box-sizing:border-box;border-right:1px solid #7a7a7a;border-bottom:1px solid #7e7e7e;"></div>
<div style="left:484.8px;top:187.8px;width:4.2px;height:4.2px;background:#4e4e4e;"></div>
<div style="left:481px;top:194.93px;width:52px;height:9.930000000000007px;background:#8f8f8f;box-sizing:border-box;border-right:1px solid #7a7a7a;border-bottom:1px solid #7e7e7e;"></div>
<svg style="left:484.5px;top:197.53px" width="4.8" height="5.4"><polygon points="0.5,0.5 3.8,2.7 0.5,4.9" fill="#444"/></svg>
<div style="left:526px;top:196.93px;font-size:6px;color:#1aa898;line-height:1;white-space:nowrap;">⌘</div>
<div style="left:481px;top:204.86px;width:52px;height:9.929999999999978px;background:#aaaaaa;box-sizing:border-box;border-right:1px solid #7a7a7a;border-bottom:1px solid #7e7e7e;"></div>
<svg style="left:484.5px;top:207.46px" width="4.8" height="5.4"><polygon points="0.5,0.5 3.8,2.7 0.5,4.9" fill="#444"/></svg>
<div style="left:526px;top:206.86px;font-size:6px;color:#1aa898;line-height:1;white-space:nowrap;">⌘</div>
<div style="left:481px;top:214.79px;width:52px;height:9.930000000000007px;background:#8f8f8f;box-sizing:border-box;border-right:1px solid #7a7a7a;border-bottom:1px solid #7e7e7e;"></div>
<svg style="left:484.5px;top:217.39px" width="4.8" height="5.4"><polygon points="0.5,0.5 3.8,2.7 0.5,4.9" fill="#444"/></svg>
<div style="left:526px;top:216.79px;font-size:6px;color:#1aa898;line-height:1;white-space:nowrap;">⌘</div>
<div style="left:481px;top:224.72px;width:52px;height:9.930000000000007px;background:#8f8f8f;box-sizing:border-box;border-right:1px solid #7a7a7a;border-bottom:1px solid #7e7e7e;"></div>
<svg style="left:484.5px;top:227.32px" width="4.8" height="5.4"><polygon points="0.5,0.5 3.8,2.7 0.5,4.9" fill="#444"/></svg>
<div style="left:526px;top:226.72px;font-size:6px;color:#1aa898;line-height:1;white-space:nowrap;">⌘</div>
<div style="left:481px;top:234.65px;width:52px;height:9.929999999999978px;background:#8f8f8f;box-sizing:border-box;border-right:1px solid #7a7a7a;border-bottom:1px solid #7e7e7e;"></div>
<div style="left:484.8px;top:237.45000000000002px;width:4.2px;height:4.2px;background:#4e4e4e;"></div>
<div style="left:481px;top:244.57999999999998px;width:52px;height:9.930000000000007px;background:#8f8f8f;box-sizing:border-box;border-right:1px solid #7a7a7a;border-bottom:1px solid #7e7e7e;"></div>
<div style="left:484.8px;top:247.38px;width:4.2px;height:4.2px;background:#4e4e4e;"></div>
<div style="left:481px;top:254.51px;width:52px;height:9.930000000000007px;background:#8f8f8f;box-sizing:border-box;border-right:1px solid #7a7a7a;border-bottom:1px solid #7e7e7e;"></div>
<div style="left:484.8px;top:257.31px;width:4.2px;height:4.2px;background:#4e4e4e;"></div>
<div style="left:533px;top:185.0px;width:54px;height:9.930000000000007px;background:#8f8f8f;box-sizing:border-box;border-right:1px solid #7a7a7a;border-bottom:1px solid #7e7e7e;"></div>
<div style="left:536.8px;top:187.8px;width:4.2px;height:4.2px;background:#4e4e4e;"></div>
<div style="left:533px;top:194.93px;width:54px;height:9.930000000000007px;background:#11bfae;box-sizing:border-box;border-right:1px solid #666;border-bottom:1px solid #707070;"></div>
<svg style="left:536px;top:197.53px" width="4.8" height="5.4"><polygon points="0.5,0.5 3.8,2.7 0.5,4.9" fill="#222"/></svg>
<div style="left:542px;top:194.93px;width:0.8px;height:9.930000000000007px;background:rgba(0,0,0,0.25);"></div>
<div style="left:533px;top:204.86px;width:54px;height:9.929999999999978px;background:#11bfae;box-sizing:border-box;border-right:1px solid #666;border-bottom:1px solid #707070;"></div>
<svg style="left:536px;top:207.46px" width="4.8" height="5.4"><polygon points="0.5,0.5 3.8,2.7 0.5,4.9" fill="#222"/></svg>
<div style="left:542px;top:204.86px;width:0.8px;height:9.929999999999978px;background:rgba(0,0,0,0.25);"></div>
<div style="left:533px;top:214.79px;width:54px;height:9.930000000000007px;background:#11bfae;box-sizing:border-box;border-right:1px solid #666;border-bottom:1px solid #707070;"></div>
<svg style="left:536px;top:217.39px" width="4.8" height="5.4"><polygon points="0.5,0.5 3.8,2.7 0.5,4.9" fill="#222"/></svg>
<div style="left:542px;top:214.79px;width:0.8px;height:9.930000000000007px;background:rgba(0,0,0,0.25);"></div>
<div style="left:533px;top:224.72px;width:54px;height:9.930000000000007px;background:#11bfae;box-sizing:border-box;border-right:1px solid #666;border-bottom:1px solid #707070;"></div>
<svg style="left:536px;top:227.32px" width="4.8" height="5.4"><polygon points="0.5,0.5 3.8,2.7 0.5,4.9" fill="#222"/></svg>
<div style="left:542px;top:224.72px;width:0.8px;height:9.930000000000007px;background:rgba(0,0,0,0.25);"></div>
<div style="left:533px;top:234.65px;width:54px;height:9.929999999999978px;background:#8f8f8f;box-sizing:border-box;border-right:1px solid #7a7a7a;border-bottom:1px solid #7e7e7e;"></div>
<div style="left:536.8px;top:237.45000000000002px;width:4.2px;height:4.2px;background:#4e4e4e;"></div>
<div style="left:533px;top:244.57999999999998px;width:54px;height:9.930000000000007px;background:#8f8f8f;box-sizing:border-box;border-right:1px solid #7a7a7a;border-bottom:1px solid #7e7e7e;"></div>
<div style="left:536.8px;top:247.38px;width:4.2px;height:4.2px;background:#4e4e4e;"></div>
<div style="left:533px;top:254.51px;width:54px;height:9.930000000000007px;background:#8f8f8f;box-sizing:border-box;border-right:1px solid #7a7a7a;border-bottom:1px solid #7e7e7e;"></div>
<div style="left:536.8px;top:257.31px;width:4.2px;height:4.2px;background:#4e4e4e;"></div>
<div style="left:587px;top:185.0px;width:53px;height:9.930000000000007px;background:#8f8f8f;box-sizing:border-box;border-right:1px solid #7a7a7a;border-bottom:1px solid #7e7e7e;"></div>
<div style="left:590.8px;top:187.8px;width:4.2px;height:4.2px;background:#4e4e4e;"></div>
<div style="left:587px;top:194.93px;width:53px;height:9.930000000000007px;background:#11bfae;box-sizing:border-box;border-right:1px solid #666;border-bottom:1px solid #707070;"></div>
<svg style="left:590px;top:197.53px" width="4.8" height="5.4"><polygon points="0.5,0.5 3.8,2.7 0.5,4.9" fill="#222"/></svg>
<div style="left:596px;top:194.93px;width:0.8px;height:9.930000000000007px;background:rgba(0,0,0,0.25);"></div>
<div style="left:587px;top:204.86px;width:53px;height:9.929999999999978px;background:#11bfae;box-sizing:border-box;border-right:1px solid #666;border-bottom:1px solid #707070;"></div>
<svg style="left:590px;top:207.46px" width="4.8" height="5.4"><polygon points="0.5,0.5 3.8,2.7 0.5,4.9" fill="#222"/></svg>
<div style="left:596px;top:204.86px;width:0.8px;height:9.929999999999978px;background:rgba(0,0,0,0.25);"></div>
<div style="left:587px;top:214.79px;width:53px;height:9.930000000000007px;background:#8f8f8f;box-sizing:border-box;border-right:1px solid #7a7a7a;border-bottom:1px solid #7e7e7e;"></div>
<div style="left:590.8px;top:217.59px;width:4.2px;height:4.2px;background:#4e4e4e;"></div>
<div style="left:587px;top:224.72px;width:53px;height:9.930000000000007px;background:#8f8f8f;box-sizing:border-box;border-right:1px solid #7a7a7a;border-bottom:1px solid #7e7e7e;"></div>
<div style="left:590.8px;top:227.52px;width:4.2px;height:4.2px;background:#4e4e4e;"></div>
<div style="left:587px;top:234.65px;width:53px;height:9.929999999999978px;background:#8f8f8f;box-sizing:border-box;border-right:1px solid #7a7a7a;border-bottom:1px solid #7e7e7e;"></div>
<div style="left:590.8px;top:237.45000000000002px;width:4.2px;height:4.2px;background:#4e4e4e;"></div>
<div style="left:587px;top:244.57999999999998px;width:53px;height:9.930000000000007px;background:#8f8f8f;box-sizing:border-box;border-right:1px solid #7a7a7a;border-bottom:1px solid #7e7e7e;"></div>
<div style="left:590.8px;top:247.38px;width:4.2px;height:4.2px;background:#4e4e4e;"></div>
<div style="left:587px;top:254.51px;width:53px;height:9.930000000000007px;background:#8f8f8f;box-sizing:border-box;border-right:1px solid #7a7a7a;border-bottom:1px solid #7e7e7e;"></div>
<div style="left:590.8px;top:257.31px;width:4.2px;height:4.2px;background:#4e4e4e;"></div>
<div style="left:640px;top:185.0px;width:36px;height:9.930000000000007px;background:#8f8f8f;box-sizing:border-box;border-right:1px solid #7a7a7a;border-bottom:1px solid #7e7e7e;"></div>
<div style="left:643.8px;top:187.8px;width:4.2px;height:4.2px;background:#4e4e4e;"></div>
<div style="left:640px;top:194.93px;width:36px;height:9.930000000000007px;background:#11bfae;box-sizing:border-box;border-right:1px solid #666;border-bottom:1px solid #707070;"></div>
<svg style="left:643px;top:197.53px" width="4.8" height="5.4"><polygon points="0.5,0.5 3.8,2.7 0.5,4.9" fill="#222"/></svg>
<div style="left:649px;top:194.93px;width:0.8px;height:9.930000000000007px;background:rgba(0,0,0,0.25);"></div>
<div style="left:640px;top:204.86px;width:36px;height:9.929999999999978px;background:#aaaaaa;box-sizing:border-box;border-right:1px solid #7a7a7a;border-bottom:1px solid #7e7e7e;"></div>
<div style="left:643.8px;top:207.66000000000003px;width:4.2px;height:4.2px;background:#4e4e4e;"></div>
<div style="left:640px;top:214.79px;width:36px;height:9.930000000000007px;background:#11bfae;box-sizing:border-box;border-right:1px solid #666;border-bottom:1px solid #707070;"></div>
<svg style="left:643px;top:217.39px" width="4.8" height="5.4"><polygon points="0.5,0.5 3.8,2.7 0.5,4.9" fill="#222"/></svg>
<div style="left:649px;top:214.79px;width:0.8px;height:9.930000000000007px;background:rgba(0,0,0,0.25);"></div>
<div style="left:640px;top:224.72px;width:36px;height:9.930000000000007px;background:#8f8f8f;box-sizing:border-box;border-right:1px solid #7a7a7a;border-bottom:1px solid #7e7e7e;"></div>
<div style="left:643.8px;top:227.52px;width:4.2px;height:4.2px;background:#4e4e4e;"></div>
<div style="left:640px;top:234.65px;width:36px;height:9.929999999999978px;background:#8f8f8f;box-sizing:border-box;border-right:1px solid #7a7a7a;border-bottom:1px solid #7e7e7e;"></div>
<div style="left:643.8px;top:237.45000000000002px;width:4.2px;height:4.2px;background:#4e4e4e;"></div>
<div style="left:640px;top:244.57999999999998px;width:36px;height:9.930000000000007px;background:#8f8f8f;box-sizing:border-box;border-right:1px solid #7a7a7a;border-bottom:1px solid #7e7e7e;"></div>
<div style="left:643.8px;top:247.38px;width:4.2px;height:4.2px;background:#4e4e4e;"></div>
<div style="left:640px;top:254.51px;width:36px;height:9.930000000000007px;background:#8f8f8f;box-sizing:border-box;border-right:1px solid #7a7a7a;border-bottom:1px solid #7e7e7e;"></div>
<div style="left:643.8px;top:257.31px;width:4.2px;height:4.2px;background:#4e4e4e;"></div>
<div style="left:676px;top:185.0px;width:52px;height:9.930000000000007px;background:#8f8f8f;box-sizing:border-box;border-right:1px solid #7a7a7a;border-bottom:1px solid #7e7e7e;"></div>
<div style="left:676px;top:194.93px;width:52px;height:9.930000000000007px;background:#8f8f8f;box-sizing:border-box;border-right:1px solid #7a7a7a;border-bottom:1px solid #7e7e7e;"></div>
<div style="left:676px;top:204.86px;width:52px;height:9.929999999999978px;background:#aaaaaa;box-sizing:border-box;border-right:1px solid #7a7a7a;border-bottom:1px solid #7e7e7e;"></div>
<div style="left:676px;top:214.79px;width:52px;height:9.930000000000007px;background:#8f8f8f;box-sizing:border-box;border-right:1px solid #7a7a7a;border-bottom:1px solid #7e7e7e;"></div>
<div style="left:676px;top:224.72px;width:52px;height:9.930000000000007px;background:#8f8f8f;box-sizing:border-box;border-right:1px solid #7a7a7a;border-bottom:1px solid #7e7e7e;"></div>
<div style="left:676px;top:234.65px;width:52px;height:9.929999999999978px;background:#8f8f8f;box-sizing:border-box;border-right:1px solid #7a7a7a;border-bottom:1px solid #7e7e7e;"></div>
<div style="left:676px;top:244.57999999999998px;width:52px;height:9.930000000000007px;background:#8f8f8f;box-sizing:border-box;border-right:1px solid #7a7a7a;border-bottom:1px solid #7e7e7e;"></div>
<div style="left:676px;top:254.51px;width:52px;height:9.930000000000007px;background:#8f8f8f;box-sizing:border-box;border-right:1px solid #7a7a7a;border-bottom:1px solid #7e7e7e;"></div>
<div style="left:728px;top:185.0px;width:54px;height:9.930000000000007px;background:#8f8f8f;box-sizing:border-box;border-right:1px solid #7a7a7a;border-bottom:1px solid #7e7e7e;"></div>
<svg style="left:731.5px;top:187.6px" width="4.8" height="5.4"><polygon points="0.5,0.5 3.8,2.7 0.5,4.9" fill="#555"/></svg>
<div style="left:728px;top:194.93px;width:54px;height:9.930000000000007px;background:#8f8f8f;box-sizing:border-box;border-right:1px solid #7a7a7a;border-bottom:1px solid #7e7e7e;"></div>
<svg style="left:731.5px;top:197.53px" width="4.8" height="5.4"><polygon points="0.5,0.5 3.8,2.7 0.5,4.9" fill="#555"/></svg>
<div style="left:728px;top:204.86px;width:54px;height:9.929999999999978px;background:#aaaaaa;box-sizing:border-box;border-right:1px solid #7a7a7a;border-bottom:1px solid #7e7e7e;"></div>
<svg style="left:731.5px;top:207.46px" width="4.8" height="5.4"><polygon points="0.5,0.5 3.8,2.7 0.5,4.9" fill="#555"/></svg>
<div style="left:728px;top:214.79px;width:54px;height:9.930000000000007px;background:#8f8f8f;box-sizing:border-box;border-right:1px solid #7a7a7a;border-bottom:1px solid #7e7e7e;"></div>
<svg style="left:731.5px;top:217.39px" width="4.8" height="5.4"><polygon points="0.5,0.5 3.8,2.7 0.5,4.9" fill="#555"/></svg>
<div style="left:728px;top:224.72px;width:54px;height:9.930000000000007px;background:#8f8f8f;box-sizing:border-box;border-right:1px solid #7a7a7a;border-bottom:1px solid #7e7e7e;"></div>
<svg style="left:731.5px;top:227.32px" width="4.8" height="5.4"><polygon points="0.5,0.5 3.8,2.7 0.5,4.9" fill="#555"/></svg>
<div style="left:728px;top:234.65px;width:54px;height:9.929999999999978px;background:#8f8f8f;box-sizing:border-box;border-right:1px solid #7a7a7a;border-bottom:1px solid #7e7e7e;"></div>
<svg style="left:731.5px;top:237.25px" width="4.8" height="5.4"><polygon points="0.5,0.5 3.8,2.7 0.5,4.9" fill="#555"/></svg>
<div style="left:728px;top:244.57999999999998px;width:54px;height:9.930000000000007px;background:#8f8f8f;box-sizing:border-box;border-right:1px solid #7a7a7a;border-bottom:1px solid #7e7e7e;"></div>
<svg style="left:731.5px;top:247.17999999999998px" width="4.8" height="5.4"><polygon points="0.5,0.5 3.8,2.7 0.5,4.9" fill="#555"/></svg>
<div style="left:728px;top:254.51px;width:54px;height:9.930000000000007px;background:#8f8f8f;box-sizing:border-box;border-right:1px solid #7a7a7a;border-bottom:1px solid #7e7e7e;"></div>
<svg style="left:731.5px;top:257.11px" width="4.8" height="5.4"><polygon points="0.5,0.5 3.8,2.7 0.5,4.9" fill="#555"/></svg>
<div style="left:772px;top:185.0px;width:10px;height:9.930000000000007px;background:#8e8e8e;box-sizing:border-box;border-bottom:1px solid #727272;"></div>
<div style="left:774.5px;top:187.5px;font-size:6px;color:#555;line-height:1;white-space:nowrap;">1</div>
<div style="left:772px;top:194.93px;width:10px;height:9.930000000000007px;background:#8e8e8e;box-sizing:border-box;border-bottom:1px solid #727272;"></div>
<div style="left:774.5px;top:197.43px;font-size:6px;color:#555;line-height:1;white-space:nowrap;">2</div>
<div style="left:772px;top:204.86px;width:10px;height:9.929999999999978px;background:#8e8e8e;box-sizing:border-box;border-bottom:1px solid #727272;"></div>
<div style="left:774.5px;top:207.36px;font-size:6px;color:#555;line-height:1;white-space:nowrap;">3</div>
<div style="left:772px;top:214.79px;width:10px;height:9.930000000000007px;background:#8e8e8e;box-sizing:border-box;border-bottom:1px solid #727272;"></div>
<div style="left:774.5px;top:217.29px;font-size:6px;color:#555;line-height:1;white-space:nowrap;">4</div>
<div style="left:772px;top:224.72px;width:10px;height:9.930000000000007px;background:#8e8e8e;box-sizing:border-box;border-bottom:1px solid #727272;"></div>
<div style="left:774.5px;top:227.22px;font-size:6px;color:#555;line-height:1;white-space:nowrap;">5</div>
<div style="left:772px;top:234.65px;width:10px;height:9.929999999999978px;background:#8e8e8e;box-sizing:border-box;border-bottom:1px solid #727272;"></div>
<div style="left:774.5px;top:237.15px;font-size:6px;color:#555;line-height:1;white-space:nowrap;">6</div>
<div style="left:772px;top:244.57999999999998px;width:10px;height:9.930000000000007px;background:#8e8e8e;box-sizing:border-box;border-bottom:1px solid #727272;"></div>
<div style="left:774.5px;top:247.07999999999998px;font-size:6px;color:#555;line-height:1;white-space:nowrap;">7</div>
<div style="left:772px;top:254.51px;width:10px;height:9.930000000000007px;background:#8e8e8e;box-sizing:border-box;border-bottom:1px solid #727272;"></div>
<div style="left:774.5px;top:257.01px;font-size:6px;color:#555;line-height:1;white-space:nowrap;">8</div>
<div style="left:228px;top:264px;width:554px;height:2px;background:#727272;"></div>
<div style="left:228px;top:266px;width:21px;height:9.5px;background:#9b9b9b;box-sizing:border-box;border-right:1px solid #7e7e7e;"></div>
<div style="left:249px;top:266px;width:52px;height:9.5px;background:#9b9b9b;box-sizing:border-box;border-right:1px solid #7e7e7e;"></div>
<div style="left:253px;top:268.5px;width:4px;height:4px;background:#4a4a4a;"></div>
<div style="left:301px;top:266px;width:42px;height:9.5px;background:#9b9b9b;box-sizing:border-box;border-right:1px solid #7e7e7e;"></div>
<div style="left:305px;top:268.5px;width:4px;height:4px;background:#4a4a4a;"></div>
<div style="left:343px;top:266px;width:43px;height:9.5px;background:#9b9b9b;box-sizing:border-box;border-right:1px solid #7e7e7e;"></div>
<div style="left:347px;top:268.5px;width:4px;height:4px;background:#4a4a4a;"></div>
<div style="left:386px;top:266px;width:53px;height:9.5px;background:#9b9b9b;box-sizing:border-box;border-right:1px solid #7e7e7e;"></div>
<div style="left:390px;top:268.5px;width:4px;height:4px;background:#4a4a4a;"></div>
<div style="left:439px;top:266px;width:42px;height:9.5px;background:#9b9b9b;box-sizing:border-box;border-right:1px solid #7e7e7e;"></div>
<div style="left:443px;top:268.5px;width:4px;height:4px;background:#4a4a4a;"></div>
<div style="left:481px;top:266px;width:52px;height:9.5px;background:#9b9b9b;box-sizing:border-box;border-right:1px solid #7e7e7e;"></div>
<div style="left:485px;top:268.5px;width:4px;height:4px;background:#4a4a4a;"></div>
<div style="left:533px;top:266px;width:54px;height:9.5px;background:#9b9b9b;box-sizing:border-box;border-right:1px solid #7e7e7e;"></div>
<div style="left:537px;top:268.5px;width:4px;height:4px;background:#4a4a4a;"></div>
<div style="left:587px;top:266px;width:53px;height:9.5px;background:#9b9b9b;box-sizing:border-box;border-right:1px solid #7e7e7e;"></div>
<div style="left:591px;top:268.5px;width:4px;height:4px;background:#4a4a4a;"></div>
<div style="left:640px;top:266px;width:36px;height:9.5px;background:#9b9b9b;box-sizing:border-box;border-right:1px solid #7e7e7e;"></div>
<div style="left:644px;top:268.5px;width:4px;height:4px;background:#4a4a4a;"></div>
<div style="left:676px;top:266px;width:52px;height:9.5px;background:#9b9b9b;box-sizing:border-box;border-right:1px solid #7e7e7e;"></div>
<div style="left:728px;top:266px;width:54px;height:9.5px;background:#9b9b9b;box-sizing:border-box;border-right:1px solid #7e7e7e;"></div>
<div style="left:732px;top:268.5px;width:4px;height:4px;background:#4a4a4a;"></div>
<div style="left:228px;top:267px;width:2px;height:6px;background:#3ad03a;"></div>
<div style="left:238px;top:268.5px;width:3px;height:4px;background:#666;"></div>
<svg style="left:275px;top:266.5px" width="8" height="8"><circle cx="4" cy="4" r="3" fill="#ddd" stroke="#666" stroke-width="0.8"/><path d="M4 1 L4 4" stroke="#444" stroke-width="1"/></svg>
<div style="left:415px;top:268px;font-size:6px;color:#444;line-height:1;white-space:nowrap;">1</div>
<svg style="left:420px;top:266.5px" width="8" height="8"><circle cx="4" cy="4" r="3.2" fill="#e8e070"/><path d="M4 0.8 A3.2 3.2 0 0 0 4 7.2 Z" fill="#999"/></svg>
<div style="left:428px;top:268px;font-size:6px;color:#444;line-height:1;white-space:nowrap;">9</div>
<div style="left:759px;top:267.5px;width:7px;height:6.5px;background:#f5a300;"></div>
<div style="left:768px;top:267.5px;width:12px;height:6.5px;background:#f06a2a;"></div>
<div style="left:228px;top:275.5px;width:554px;height:1px;background:#6a6a6a;"></div>
<div style="left:228px;top:276.5px;width:554px;height:21px;background:#9c9c9c;"></div>
<div style="left:228px;top:295.8px;width:554px;height:1.7px;background:#878787;"></div>
<div style="left:228px;top:298px;width:554px;height:76px;background:#9c9c9c;"></div>
<div style="left:228px;top:374px;width:554px;height:1px;background:#777;"></div>
<div style="left:228px;top:375px;width:554px;height:10.5px;background:#9c9c9c;"></div>
<div style="left:386px;top:276.5px;width:53px;height:21px;background:#a7a7a7;"></div>
<div style="left:386px;top:298px;width:53px;height:76px;background:#a7a7a7;"></div>
<div style="left:386px;top:375px;width:53px;height:10.5px;background:#a7a7a7;"></div>
<div style="left:248.5px;top:276.5px;width:1px;height:109px;background:#828282;"></div>
<div style="left:300.5px;top:276.5px;width:1px;height:109px;background:#828282;"></div>
<div style="left:342.5px;top:276.5px;width:1px;height:109px;background:#828282;"></div>
<div style="left:385.5px;top:276.5px;width:1px;height:109px;background:#828282;"></div>
<div style="left:438.5px;top:276.5px;width:1px;height:109px;background:#828282;"></div>
<div style="left:480.5px;top:276.5px;width:1px;height:109px;background:#828282;"></div>
<div style="left:532.5px;top:276.5px;width:1px;height:109px;background:#828282;"></div>
<div style="left:586.5px;top:276.5px;width:1px;height:109px;background:#828282;"></div>
<div style="left:639.5px;top:276.5px;width:1px;height:109px;background:#828282;"></div>
<div style="left:675.5px;top:276.5px;width:1px;height:109px;background:#828282;"></div>
<div style="left:727.5px;top:276.5px;width:1px;height:109px;background:#828282;"></div>
<div style="left:675px;top:171px;width:2px;height:215px;background:#5e5e5e;"></div>
<div style="left:727.5px;top:171px;width:1.5px;height:215px;background:#5e5e5e;"></div>
<svg style="left:0;top:0;overflow:visible" width="1" height="1"><path d="M261.35,290.89 A6.8,6.8 0 1 1 268.15,290.89" fill="none" stroke="#333" stroke-width="1.3"/><path d="M264.75,285.00 L260.47,290.28" stroke="#333" stroke-width="1.3"/></svg>
<div style="left:275.25px;top:279px;font-size:6px;color:#444;line-height:1;white-space:nowrap;">Sends</div>
<div style="left:256px;top:300px;width:18px;height:6px;background:#e6e6e6;border-radius:3px;border:0.5px solid #777;box-sizing:border-box;font-size:5px;line-height:5px;text-align:center;color:#444;">-15.0</div>
<div style="left:256px;top:311px;width:19px;height:6px;background:#dcdcdc;border:0.5px solid #888;box-sizing:border-box;font-size:5px;line-height:5px;text-align:center;color:#555;">6.6</div>
<svg style="left:0;top:0;overflow:visible" width="1" height="1"><path d="M260.63,334.71 A6.8,6.8 0 1 1 269.37,334.71" fill="none" stroke="#333" stroke-width="1.2"/><path d="M265.00,329.50 L265.00,322.70" stroke="#333" stroke-width="1.2"/></svg>
<div style="left:264.6px;top:320px;width:0.8px;height:2.5px;background:#444;"></div>
<div style="left:259px;top:340.5px;width:12px;height:12px;background:#f5a300;font-size:7px;color:#3a2a00;text-align:center;line-height:12px;">18</div>
<div style="left:259px;top:355px;width:12.5px;height:7px;background:#cdcdcd;border:0.5px solid #888;box-sizing:border-box;"></div>
<div style="left:265px;top:355.5px;width:0.7px;height:6px;background:#999;"></div>
<div style="left:278px;top:300px;width:3px;height:72px;background:#262626;"></div>
<div style="left:278px;top:336.72px;width:3px;height:35.27999999999997px;background:#5ee84a;"></div>
<div style="left:278px;top:334px;width:3px;height:3px;background:#3c8a3c;"></div>
<div style="left:278px;top:329.5px;width:3px;height:1px;background:#5ee84a;"></div>
<div style="left:281.5px;top:300px;width:3px;height:72px;background:#262626;"></div>
<div style="left:281.5px;top:338.16px;width:3px;height:33.839999999999975px;background:#5ee84a;"></div>
<div style="left:281.5px;top:327px;width:3px;height:5px;background:#3c8a3c;"></div>
<div style="left:281.5px;top:332px;width:3px;height:6px;background:#111;"></div>
<div style="left:287px;top:304.5px;font-size:6px;color:#555;line-height:1;white-space:nowrap;width:10px;text-align:right;">0</div>
<div style="left:283px;top:306.7px;width:1.5px;height:0.7px;background:#666;"></div>
<div style="left:287px;top:312.0px;font-size:6px;color:#555;line-height:1;white-space:nowrap;width:10px;text-align:right;">6</div>
<div style="left:283px;top:314.2px;width:1.5px;height:0.7px;background:#666;"></div>
<div style="left:287px;top:319.0px;font-size:6px;color:#555;line-height:1;white-space:nowrap;width:10px;text-align:right;">12</div>
<div style="left:283px;top:321.2px;width:1.5px;height:0.7px;background:#666;"></div>
<div style="left:287px;top:326.0px;font-size:6px;color:#555;line-height:1;white-space:nowrap;width:10px;text-align:right;">18</div>
<div style="left:283px;top:328.2px;width:1.5px;height:0.7px;background:#666;"></div>
<div style="left:287px;top:333.0px;font-size:6px;color:#555;line-height:1;white-space:nowrap;width:10px;text-align:right;">24</div>
<div style="left:283px;top:335.2px;width:1.5px;height:0.7px;background:#666;"></div>
<div style="left:287px;top:340.0px;font-size:6px;color:#555;line-height:1;white-space:nowrap;width:10px;text-align:right;">30</div>
<div style="left:283px;top:342.2px;width:1.5px;height:0.7px;background:#666;"></div>
<div style="left:287px;top:346.5px;font-size:6px;color:#555;line-height:1;white-space:nowrap;width:10px;text-align:right;">36</div>
<div style="left:283px;top:348.7px;width:1.5px;height:0.7px;background:#666;"></div>
<div style="left:287px;top:357.0px;font-size:6px;color:#555;line-height:1;white-space:nowrap;width:10px;text-align:right;">48</div>
<div style="left:283px;top:359.2px;width:1.5px;height:0.7px;background:#666;"></div>
<div style="left:287px;top:365.0px;font-size:6px;color:#555;line-height:1;white-space:nowrap;width:10px;text-align:right;">60</div>
<div style="left:283px;top:367.2px;width:1.5px;height:0.7px;background:#666;"></div>
<div style="left:254.0px;top:379px;width:4px;height:1.8px;background:#e0a030;"></div>
<div style="left:259.3px;top:379px;width:4px;height:1.8px;background:#222;"></div>
<div style="left:264.6px;top:379px;width:4px;height:1.8px;background:#222;"></div>
<div style="left:269.9px;top:379px;width:4px;height:1.8px;background:#222;"></div>
<div style="left:275.2px;top:379px;width:4px;height:1.8px;background:#222;"></div>
<div style="left:280.5px;top:379px;width:4px;height:1.8px;background:#222;"></div>
<svg style="left:0;top:0;overflow:visible" width="1" height="1"><path d="M309.85,290.89 A6.8,6.8 0 1 1 316.65,290.89" fill="none" stroke="#333" stroke-width="1.3"/><path d="M313.25,285.00 L308.97,290.28" stroke="#333" stroke-width="1.3"/></svg>
<div style="left:323.75px;top:279px;font-size:6px;color:#444;line-height:1;white-space:nowrap;">Sends</div>
<div style="left:306px;top:300px;width:18px;height:6px;background:#e6e6e6;border-radius:3px;border:0.5px solid #777;box-sizing:border-box;font-size:5px;line-height:5px;text-align:center;color:#444;">-inf</div>
<div style="left:306px;top:311px;width:19px;height:6px;background:#dcdcdc;border:0.5px solid #888;box-sizing:border-box;font-size:5px;line-height:5px;text-align:center;color:#555;">17.0</div>
<svg style="left:0;top:0;overflow:visible" width="1" height="1"><path d="M310.63,334.71 A6.8,6.8 0 1 1 319.37,334.71" fill="none" stroke="#333" stroke-width="1.2"/><path d="M315.00,329.50 L315.00,322.70" stroke="#333" stroke-width="1.2"/></svg>
<div style="left:314.6px;top:320px;width:0.8px;height:2.5px;background:#444;"></div>
<div style="left:309px;top:340.5px;width:12px;height:12px;background:#f5a300;font-size:7px;color:#3a2a00;text-align:center;line-height:12px;">19</div>
<div style="left:309px;top:355px;width:12.5px;height:7px;background:#cdcdcd;border:0.5px solid #888;box-sizing:border-box;"></div>
<div style="left:315px;top:355.5px;width:0.7px;height:6px;background:#999;"></div>
<div style="left:309.5px;top:364.5px;width:11.5px;height:7px;background:#d3d3d3;border:0.5px solid #888;box-sizing:border-box;"></div>
<div style="left:313.5px;top:366.5px;width:3.5px;height:3px;background:#333;"></div>
<div style="left:328px;top:300px;width:3px;height:72px;background:#262626;"></div>
<div style="left:331.5px;top:300px;width:3px;height:72px;background:#262626;"></div>
<div style="left:336px;top:303.0px;width:1.5px;height:0.6px;background:#666;"></div>
<div style="left:336px;top:308.8px;width:1.5px;height:0.6px;background:#666;"></div>
<div style="left:336px;top:314.6px;width:1.5px;height:0.6px;background:#666;"></div>
<div style="left:336px;top:320.4px;width:1.5px;height:0.6px;background:#666;"></div>
<div style="left:336px;top:326.2px;width:1.5px;height:0.6px;background:#666;"></div>
<div style="left:336px;top:332.0px;width:1.5px;height:0.6px;background:#666;"></div>
<div style="left:336px;top:337.8px;width:1.5px;height:0.6px;background:#666;"></div>
<div style="left:336px;top:343.6px;width:1.5px;height:0.6px;background:#666;"></div>
<div style="left:336px;top:349.4px;width:1.5px;height:0.6px;background:#666;"></div>
<div style="left:336px;top:355.2px;width:1.5px;height:0.6px;background:#666;"></div>
<div style="left:336px;top:361.0px;width:1.5px;height:0.6px;background:#666;"></div>
<div style="left:336px;top:366.8px;width:1.5px;height:0.6px;background:#666;"></div>
<div style="left:306.0px;top:379px;width:4px;height:1.8px;background:#222;"></div>
<div style="left:311.3px;top:379px;width:4px;height:1.8px;background:#222;"></div>
<div style="left:316.6px;top:379px;width:4px;height:1.8px;background:#222;"></div>
<div style="left:321.9px;top:379px;width:4px;height:1.8px;background:#222;"></div>
<div style="left:327.2px;top:379px;width:4px;height:1.8px;background:#222;"></div>
<div style="left:332.5px;top:379px;width:4px;height:1.8px;background:#222;"></div>
<svg style="left:0;top:0;overflow:visible" width="1" height="1"><path d="M351.85,290.89 A6.8,6.8 0 1 1 358.65,290.89" fill="none" stroke="#333" stroke-width="1.3"/><path d="M351.85,290.89 A6.8,6.8 0 1 1 361.46,282.23" fill="none" stroke="#3cc8ee" stroke-width="1.6"/><path d="M355.25,285.00 L361.46,282.23" stroke="#333" stroke-width="1.3"/></svg>
<div style="left:365.75px;top:279px;font-size:6px;color:#444;line-height:1;white-space:nowrap;">Sends</div>
<div style="left:348px;top:300px;width:18px;height:6px;background:#e6e6e6;border-radius:3px;border:0.5px solid #777;box-sizing:border-box;font-size:5px;line-height:5px;text-align:center;color:#444;">-inf</div>
<div style="left:348px;top:311px;width:19px;height:6px;background:#dcdcdc;border:0.5px solid #888;box-sizing:border-box;font-size:5px;line-height:5px;text-align:center;color:#555;">40.0</div>
<svg style="left:0;top:0;overflow:visible" width="1" height="1"><path d="M352.63,334.71 A6.8,6.8 0 1 1 361.37,334.71" fill="none" stroke="#333" stroke-width="1.2"/><path d="M357.00,329.50 L357.00,322.70" stroke="#333" stroke-width="1.2"/></svg>
<div style="left:356.6px;top:320px;width:0.8px;height:2.5px;background:#444;"></div>
<svg style="left:354.5px;top:319px" width="5" height="4"><polygon points="0,0 5,0 2.5,3.5" fill="#3cc8ee"/></svg>
<div style="left:351px;top:340.5px;width:12px;height:12px;background:#f5a300;font-size:7px;color:#3a2a00;text-align:center;line-height:12px;">20</div>
<div style="left:351px;top:355px;width:12.5px;height:7px;background:#cdcdcd;border:0.5px solid #888;box-sizing:border-box;"></div>
<div style="left:357px;top:355.5px;width:0.7px;height:6px;background:#999;"></div>
<div style="left:351.5px;top:364.5px;width:11.5px;height:7px;background:#d3d3d3;border:0.5px solid #888;box-sizing:border-box;"></div>
<div style="left:355.5px;top:366.5px;width:3.5px;height:3px;background:#333;"></div>
<div style="left:370px;top:300px;width:3px;height:72px;background:#262626;"></div>
<div style="left:373.5px;top:300px;width:3px;height:72px;background:#262626;"></div>
<div style="left:378px;top:303.0px;width:1.5px;height:0.6px;background:#666;"></div>
<div style="left:378px;top:308.8px;width:1.5px;height:0.6px;background:#666;"></div>
<div style="left:378px;top:314.6px;width:1.5px;height:0.6px;background:#666;"></div>
<div style="left:378px;top:320.4px;width:1.5px;height:0.6px;background:#666;"></div>
<div style="left:378px;top:326.2px;width:1.5px;height:0.6px;background:#666;"></div>
<div style="left:378px;top:332.0px;width:1.5px;height:0.6px;background:#666;"></div>
<div style="left:378px;top:337.8px;width:1.5px;height:0.6px;background:#666;"></div>
<div style="left:378px;top:343.6px;width:1.5px;height:0.6px;background:#666;"></div>
<div style="left:378px;top:349.4px;width:1.5px;height:0.6px;background:#666;"></div>
<div style="left:378px;top:355.2px;width:1.5px;height:0.6px;background:#666;"></div>
<div style="left:378px;top:361.0px;width:1.5px;height:0.6px;background:#666;"></div>
<div style="left:378px;top:366.8px;width:1.5px;height:0.6px;background:#666;"></div>
<div style="left:348.0px;top:379px;width:4px;height:1.8px;background:#222;"></div>
<div style="left:353.3px;top:379px;width:4px;height:1.8px;background:#222;"></div>
<div style="left:358.6px;top:379px;width:4px;height:1.8px;background:#222;"></div>
<div style="left:363.9px;top:379px;width:4px;height:1.8px;background:#222;"></div>
<div style="left:369.2px;top:379px;width:4px;height:1.8px;background:#222;"></div>
<div style="left:374.5px;top:379px;width:4px;height:1.8px;background:#222;"></div>
<svg style="left:0;top:0;overflow:visible" width="1" height="1"><path d="M398.35,290.89 A6.8,6.8 0 1 1 405.15,290.89" fill="none" stroke="#333" stroke-width="1.3"/><path d="M401.75,285.00 L397.47,290.28" stroke="#333" stroke-width="1.3"/></svg>
<div style="left:412.25px;top:279px;font-size:6px;color:#444;line-height:1;white-space:nowrap;">Sends</div>
<div style="left:393px;top:300px;width:18px;height:6px;background:#e6e6e6;border-radius:3px;border:0.5px solid #777;box-sizing:border-box;font-size:5px;line-height:5px;text-align:center;color:#444;">-17.7</div>
<div style="left:393px;top:311px;width:19px;height:6px;background:#dcdcdc;border:0.5px solid #888;box-sizing:border-box;font-size:5px;line-height:5px;text-align:center;color:#555;">11.0</div>
<svg style="left:0;top:0;overflow:visible" width="1" height="1"><path d="M397.63,334.71 A6.8,6.8 0 1 1 406.37,334.71" fill="none" stroke="#333" stroke-width="1.2"/><path d="M402.00,329.50 L402.00,322.70" stroke="#333" stroke-width="1.2"/></svg>
<div style="left:401.6px;top:320px;width:0.8px;height:2.5px;background:#444;"></div>
<div style="left:396px;top:340.5px;width:12px;height:12px;background:#f5a300;font-size:7px;color:#3a2a00;text-align:center;line-height:12px;">21</div>
<div style="left:396px;top:355px;width:12.5px;height:7px;background:#cdcdcd;border:0.5px solid #888;box-sizing:border-box;"></div>
<div style="left:402px;top:355.5px;width:0.7px;height:6px;background:#999;"></div>
<div style="left:396.5px;top:364.5px;width:11.5px;height:7px;background:#e8503a;border:0.5px solid #888;box-sizing:border-box;"></div>
<div style="left:400.5px;top:366.5px;width:3.5px;height:3px;background:#7a1a10;"></div>
<div style="left:415px;top:300px;width:3px;height:72px;background:#262626;"></div>
<div style="left:415px;top:324.48px;width:3px;height:47.51999999999998px;background:#5ee84a;"></div>
<div style="left:415px;top:320px;width:3px;height:5px;background:#3c8a3c;"></div>
<div style="left:415px;top:320px;width:3px;height:1px;background:#5ee84a;"></div>
<div style="left:418.5px;top:300px;width:3px;height:72px;background:#262626;"></div>
<div style="left:418.5px;top:324.48px;width:3px;height:47.51999999999998px;background:#5ee84a;"></div>
<div style="left:418.5px;top:320px;width:3px;height:5px;background:#3c8a3c;"></div>
<div style="left:424px;top:304.5px;font-size:6px;color:#555;line-height:1;white-space:nowrap;width:10px;text-align:right;">0</div>
<div style="left:420px;top:306.7px;width:1.5px;height:0.7px;background:#666;"></div>
<div style="left:424px;top:312.0px;font-size:6px;color:#555;line-height:1;white-space:nowrap;width:10px;text-align:right;">6</div>
<div style="left:420px;top:314.2px;width:1.5px;height:0.7px;background:#666;"></div>
<div style="left:424px;top:319.0px;font-size:6px;color:#555;line-height:1;white-space:nowrap;width:10px;text-align:right;">12</div>
<div style="left:420px;top:321.2px;width:1.5px;height:0.7px;background:#666;"></div>
<div style="left:424px;top:326.0px;font-size:6px;color:#555;line-height:1;white-space:nowrap;width:10px;text-align:right;">18</div>
<div style="left:420px;top:328.2px;width:1.5px;height:0.7px;background:#666;"></div>
<div style="left:424px;top:333.0px;font-size:6px;color:#555;line-height:1;white-space:nowrap;width:10px;text-align:right;">24</div>
<div style="left:420px;top:335.2px;width:1.5px;height:0.7px;background:#666;"></div>
<div style="left:424px;top:340.0px;font-size:6px;color:#555;line-height:1;white-space:nowrap;width:10px;text-align:right;">30</div>
<div style="left:420px;top:342.2px;width:1.5px;height:0.7px;background:#666;"></div>
<div style="left:424px;top:346.5px;font-size:6px;color:#555;line-height:1;white-space:nowrap;width:10px;text-align:right;">36</div>
<div style="left:420px;top:348.7px;width:1.5px;height:0.7px;background:#666;"></div>
<div style="left:424px;top:357.0px;font-size:6px;color:#555;line-height:1;white-space:nowrap;width:10px;text-align:right;">48</div>
<div style="left:420px;top:359.2px;width:1.5px;height:0.7px;background:#666;"></div>
<div style="left:424px;top:365.0px;font-size:6px;color:#555;line-height:1;white-space:nowrap;width:10px;text-align:right;">60</div>
<div style="left:420px;top:367.2px;width:1.5px;height:0.7px;background:#666;"></div>
<div style="left:391.0px;top:379px;width:4px;height:1.8px;background:#e0a030;"></div>
<div style="left:396.3px;top:379px;width:4px;height:1.8px;background:#e0a030;"></div>
<div style="left:401.6px;top:379px;width:4px;height:1.8px;background:#e0a030;"></div>
<div style="left:406.9px;top:379px;width:4px;height:1.8px;background:#e0a030;"></div>
<div style="left:412.2px;top:379px;width:4px;height:1.8px;background:#e0a030;"></div>
<div style="left:417.5px;top:379px;width:4px;height:1.8px;background:#222;"></div>
<svg style="left:0;top:0;overflow:visible" width="1" height="1"><path d="M447.85,290.89 A6.8,6.8 0 1 1 454.65,290.89" fill="none" stroke="#333" stroke-width="1.3"/><path d="M451.25,285.00 L446.97,290.28" stroke="#333" stroke-width="1.3"/></svg>
<div style="left:461.75px;top:279px;font-size:6px;color:#444;line-height:1;white-space:nowrap;">Sends</div>
<div style="left:444px;top:300px;width:18px;height:6px;background:#e6e6e6;border-radius:3px;border:0.5px solid #777;box-sizing:border-box;font-size:5px;line-height:5px;text-align:center;color:#444;">-inf</div>
<div style="left:444px;top:311px;width:19px;height:6px;background:#dcdcdc;border:0.5px solid #888;box-sizing:border-box;font-size:5px;line-height:5px;text-align:center;color:#555;">25.0</div>
<svg style="left:0;top:0;overflow:visible" width="1" height="1"><path d="M448.63,334.71 A6.8,6.8 0 1 1 457.37,334.71" fill="none" stroke="#333" stroke-width="1.2"/><path d="M453.00,329.50 L453.00,322.70" stroke="#333" stroke-width="1.2"/></svg>
<div style="left:452.6px;top:320px;width:0.8px;height:2.5px;background:#444;"></div>
<svg style="left:450.5px;top:319px" width="5" height="4"><polygon points="0,0 5,0 2.5,3.5" fill="#3cc8ee"/></svg>
<div style="left:447px;top:340.5px;width:12px;height:12px;background:#f5a300;font-size:7px;color:#3a2a00;text-align:center;line-height:12px;">22</div>
<div style="left:447px;top:355px;width:12.5px;height:7px;background:#cdcdcd;border:0.5px solid #888;box-sizing:border-box;"></div>
<div style="left:453px;top:355.5px;width:0.7px;height:6px;background:#999;"></div>
<div style="left:447.5px;top:364.5px;width:11.5px;height:7px;background:#d3d3d3;border:0.5px solid #888;box-sizing:border-box;"></div>
<div style="left:451.5px;top:366.5px;width:3.5px;height:3px;background:#333;"></div>
<div style="left:466px;top:300px;width:3px;height:72px;background:#262626;"></div>
<div style="left:469.5px;top:300px;width:3px;height:72px;background:#262626;"></div>
<div style="left:474px;top:303.0px;width:1.5px;height:0.6px;background:#666;"></div>
<div style="left:474px;top:308.8px;width:1.5px;height:0.6px;background:#666;"></div>
<div style="left:474px;top:314.6px;width:1.5px;height:0.6px;background:#666;"></div>
<div style="left:474px;top:320.4px;width:1.5px;height:0.6px;background:#666;"></div>
<div style="left:474px;top:326.2px;width:1.5px;height:0.6px;background:#666;"></div>
<div style="left:474px;top:332.0px;width:1.5px;height:0.6px;background:#666;"></div>
<div style="left:474px;top:337.8px;width:1.5px;height:0.6px;background:#666;"></div>
<div style="left:474px;top:343.6px;width:1.5px;height:0.6px;background:#666;"></div>
<div style="left:474px;top:349.4px;width:1.5px;height:0.6px;background:#666;"></div>
<div style="left:474px;top:355.2px;width:1.5px;height:0.6px;background:#666;"></div>
<div style="left:474px;top:361.0px;width:1.5px;height:0.6px;background:#666;"></div>
<div style="left:474px;top:366.8px;width:1.5px;height:0.6px;background:#666;"></div>
<div style="left:444.0px;top:379px;width:4px;height:1.8px;background:#222;"></div>
<div style="left:449.3px;top:379px;width:4px;height:1.8px;background:#222;"></div>
<div style="left:454.6px;top:379px;width:4px;height:1.8px;background:#222;"></div>
<div style="left:459.9px;top:379px;width:4px;height:1.8px;background:#222;"></div>
<div style="left:465.2px;top:379px;width:4px;height:1.8px;background:#222;"></div>
<div style="left:470.5px;top:379px;width:4px;height:1.8px;background:#222;"></div>
<svg style="left:0;top:0;overflow:visible" width="1" height="1"><path d="M493.35,290.89 A6.8,6.8 0 1 1 500.15,290.89" fill="none" stroke="#333" stroke-width="1.3"/><path d="M496.75,285.00 L492.47,290.28" stroke="#333" stroke-width="1.3"/></svg>
<div style="left:507.25px;top:279px;font-size:6px;color:#444;line-height:1;white-space:nowrap;">Sends</div>
<div style="left:488px;top:300px;width:18px;height:6px;background:#e6e6e6;border-radius:3px;border:0.5px solid #777;box-sizing:border-box;font-size:5px;line-height:5px;text-align:center;color:#444;">-inf</div>
<div style="left:488px;top:311px;width:19px;height:6px;background:#dcdcdc;border:0.5px solid #888;box-sizing:border-box;font-size:5px;line-height:5px;text-align:center;color:#555;">C</div>
<svg style="left:0;top:0;overflow:visible" width="1" height="1"><path d="M492.63,334.71 A6.8,6.8 0 1 1 501.37,334.71" fill="none" stroke="#333" stroke-width="1.2"/><path d="M497.00,329.50 L497.00,322.70" stroke="#333" stroke-width="1.2"/></svg>
<div style="left:496.6px;top:320px;width:0.8px;height:2.5px;background:#444;"></div>
<div style="left:491px;top:340.5px;width:12px;height:12px;background:#f5a300;font-size:7px;color:#3a2a00;text-align:center;line-height:12px;">23</div>
<div style="left:491px;top:355px;width:12.5px;height:7px;background:#cdcdcd;border:0.5px solid #888;box-sizing:border-box;"></div>
<div style="left:497px;top:355.5px;width:0.7px;height:6px;background:#999;"></div>
<div style="left:510px;top:300px;width:3px;height:72px;background:#262626;"></div>
<div style="left:513.5px;top:300px;width:3px;height:72px;background:#262626;"></div>
<div style="left:519px;top:304.5px;font-size:6px;color:#555;line-height:1;white-space:nowrap;width:10px;text-align:right;">0</div>
<div style="left:515px;top:306.7px;width:1.5px;height:0.7px;background:#666;"></div>
<div style="left:519px;top:312.0px;font-size:6px;color:#555;line-height:1;white-space:nowrap;width:10px;text-align:right;">6</div>
<div style="left:515px;top:314.2px;width:1.5px;height:0.7px;background:#666;"></div>
<div style="left:519px;top:319.0px;font-size:6px;color:#555;line-height:1;white-space:nowrap;width:10px;text-align:right;">12</div>
<div style="left:515px;top:321.2px;width:1.5px;height:0.7px;background:#666;"></div>
<div style="left:519px;top:326.0px;font-size:6px;color:#555;line-height:1;white-space:nowrap;width:10px;text-align:right;">18</div>
<div style="left:515px;top:328.2px;width:1.5px;height:0.7px;background:#666;"></div>
<div style="left:519px;top:333.0px;font-size:6px;color:#555;line-height:1;white-space:nowrap;width:10px;text-align:right;">24</div>
<div style="left:515px;top:335.2px;width:1.5px;height:0.7px;background:#666;"></div>
<div style="left:519px;top:340.0px;font-size:6px;color:#555;line-height:1;white-space:nowrap;width:10px;text-align:right;">30</div>
<div style="left:515px;top:342.2px;width:1.5px;height:0.7px;background:#666;"></div>
<div style="left:519px;top:346.5px;font-size:6px;color:#555;line-height:1;white-space:nowrap;width:10px;text-align:right;">36</div>
<div style="left:515px;top:348.7px;width:1.5px;height:0.7px;background:#666;"></div>
<div style="left:519px;top:357.0px;font-size:6px;color:#555;line-height:1;white-space:nowrap;width:10px;text-align:right;">48</div>
<div style="left:515px;top:359.2px;width:1.5px;height:0.7px;background:#666;"></div>
<div style="left:519px;top:365.0px;font-size:6px;color:#555;line-height:1;white-space:nowrap;width:10px;text-align:right;">60</div>
<div style="left:515px;top:367.2px;width:1.5px;height:0.7px;background:#666;"></div>
<div style="left:486.0px;top:379px;width:4px;height:1.8px;background:#222;"></div>
<div style="left:491.3px;top:379px;width:4px;height:1.8px;background:#222;"></div>
<div style="left:496.6px;top:379px;width:4px;height:1.8px;background:#222;"></div>
<div style="left:501.9px;top:379px;width:4px;height:1.8px;background:#222;"></div>
<div style="left:507.2px;top:379px;width:4px;height:1.8px;background:#222;"></div>
<div style="left:512.5px;top:379px;width:4px;height:1.8px;background:#222;"></div>
<svg style="left:0;top:0;overflow:visible" width="1" height="1"><path d="M545.35,290.89 A6.8,6.8 0 1 1 552.15,290.89" fill="none" stroke="#333" stroke-width="1.4"/><path d="M545.35,290.89 A6.8,6.8 0 1 1 552.15,290.89" fill="none" stroke="#3cc8ee" stroke-width="1.7"/><path d="M548.75,285.00 L553.03,290.28" stroke="#333" stroke-width="1.4"/></svg>
<div style="left:559.25px;top:279px;font-size:6px;color:#444;line-height:1;white-space:nowrap;">Sends</div>
<div style="left:540px;top:300px;width:18px;height:6px;background:#e6e6e6;border-radius:3px;border:0.5px solid #777;box-sizing:border-box;font-size:5px;line-height:5px;text-align:center;color:#444;">-inf</div>
<div style="left:540px;top:311px;width:19px;height:6px;background:#dcdcdc;border:0.5px solid #888;box-sizing:border-box;font-size:5px;line-height:5px;text-align:center;color:#555;">38.9</div>
<svg style="left:0;top:0;overflow:visible" width="1" height="1"><path d="M544.63,334.71 A6.8,6.8 0 1 1 553.37,334.71" fill="none" stroke="#333" stroke-width="1.2"/><path d="M549.00,329.50 L549.00,322.70" stroke="#333" stroke-width="1.2"/></svg>
<div style="left:548.6px;top:320px;width:0.8px;height:2.5px;background:#444;"></div>
<svg style="left:546.5px;top:319px" width="5" height="4"><polygon points="0,0 5,0 2.5,3.5" fill="#3cc8ee"/></svg>
<div style="left:543px;top:340.5px;width:12px;height:12px;background:#f5a300;font-size:7px;color:#3a2a00;text-align:center;line-height:12px;">24</div>
<div style="left:543px;top:355px;width:12.5px;height:7px;background:#cdcdcd;border:0.5px solid #888;box-sizing:border-box;"></div>
<div style="left:549px;top:355.5px;width:0.7px;height:6px;background:#999;"></div>
<div style="left:543.5px;top:364.5px;width:11.5px;height:7px;background:#d3d3d3;border:0.5px solid #888;box-sizing:border-box;"></div>
<div style="left:547.5px;top:366.5px;width:3.5px;height:3px;background:#333;"></div>
<div style="left:562px;top:300px;width:3px;height:72px;background:#262626;"></div>
<div style="left:565.5px;top:300px;width:3px;height:72px;background:#262626;"></div>
<div style="left:571px;top:304.5px;font-size:6px;color:#555;line-height:1;white-space:nowrap;width:10px;text-align:right;">0</div>
<div style="left:567px;top:306.7px;width:1.5px;height:0.7px;background:#666;"></div>
<div style="left:571px;top:312.0px;font-size:6px;color:#555;line-height:1;white-space:nowrap;width:10px;text-align:right;">6</div>
<div style="left:567px;top:314.2px;width:1.5px;height:0.7px;background:#666;"></div>
<div style="left:571px;top:319.0px;font-size:6px;color:#555;line-height:1;white-space:nowrap;width:10px;text-align:right;">12</div>
<div style="left:567px;top:321.2px;width:1.5px;height:0.7px;background:#666;"></div>
<div style="left:571px;top:326.0px;font-size:6px;color:#555;line-height:1;white-space:nowrap;width:10px;text-align:right;">18</div>
<div style="left:567px;top:328.2px;width:1.5px;height:0.7px;background:#666;"></div>
<div style="left:571px;top:333.0px;font-size:6px;color:#555;line-height:1;white-space:nowrap;width:10px;text-align:right;">24</div>
<div style="left:567px;top:335.2px;width:1.5px;height:0.7px;background:#666;"></div>
<div style="left:571px;top:340.0px;font-size:6px;color:#555;line-height:1;white-space:nowrap;width:10px;text-align:right;">30</div>
<div style="left:567px;top:342.2px;width:1.5px;height:0.7px;background:#666;"></div>
<div style="left:571px;top:346.5px;font-size:6px;color:#555;line-height:1;white-space:nowrap;width:10px;text-align:right;">36</div>
<div style="left:567px;top:348.7px;width:1.5px;height:0.7px;background:#666;"></div>
<div style="left:571px;top:357.0px;font-size:6px;color:#555;line-height:1;white-space:nowrap;width:10px;text-align:right;">48</div>
<div style="left:567px;top:359.2px;width:1.5px;height:0.7px;background:#666;"></div>
<div style="left:571px;top:365.0px;font-size:6px;color:#555;line-height:1;white-space:nowrap;width:10px;text-align:right;">60</div>
<div style="left:567px;top:367.2px;width:1.5px;height:0.7px;background:#666;"></div>
<div style="left:538.0px;top:379px;width:4px;height:1.8px;background:#222;"></div>
<div style="left:543.3px;top:379px;width:4px;height:1.8px;background:#222;"></div>
<div style="left:548.6px;top:379px;width:4px;height:1.8px;background:#222;"></div>
<div style="left:553.9px;top:379px;width:4px;height:1.8px;background:#222;"></div>
<div style="left:559.2px;top:379px;width:4px;height:1.8px;background:#222;"></div>
<div style="left:564.5px;top:379px;width:4px;height:1.8px;background:#222;"></div>
<svg style="left:0;top:0;overflow:visible" width="1" height="1"><path d="M599.35,290.89 A6.8,6.8 0 1 1 606.15,290.89" fill="none" stroke="#333" stroke-width="1.4"/><path d="M599.35,290.89 A6.8,6.8 0 1 1 606.15,290.89" fill="none" stroke="#3cc8ee" stroke-width="1.7"/><path d="M602.75,285.00 L607.03,290.28" stroke="#333" stroke-width="1.4"/></svg>
<div style="left:613.25px;top:279px;font-size:6px;color:#444;line-height:1;white-space:nowrap;">Sends</div>
<div style="left:594px;top:300px;width:18px;height:6px;background:#e6e6e6;border-radius:3px;border:0.5px solid #777;box-sizing:border-box;font-size:5px;line-height:5px;text-align:center;color:#444;">-inf</div>
<div style="left:594px;top:311px;width:19px;height:6px;background:#dcdcdc;border:0.5px solid #888;box-sizing:border-box;font-size:5px;line-height:5px;text-align:center;color:#555;">18.6</div>
<svg style="left:0;top:0;overflow:visible" width="1" height="1"><path d="M598.63,334.71 A6.8,6.8 0 1 1 607.37,334.71" fill="none" stroke="#333" stroke-width="1.2"/><path d="M603.00,329.50 L603.00,322.70" stroke="#333" stroke-width="1.2"/></svg>
<div style="left:602.6px;top:320px;width:0.8px;height:2.5px;background:#444;"></div>
<svg style="left:600.5px;top:319px" width="5" height="4"><polygon points="0,0 5,0 2.5,3.5" fill="#3cc8ee"/></svg>
<div style="left:597px;top:340.5px;width:12px;height:12px;background:#f5a300;font-size:7px;color:#3a2a00;text-align:center;line-height:12px;">25</div>
<div style="left:597px;top:355px;width:12.5px;height:7px;background:#cdcdcd;border:0.5px solid #888;box-sizing:border-box;"></div>
<div style="left:603px;top:355.5px;width:0.7px;height:6px;background:#999;"></div>
<div style="left:597.5px;top:364.5px;width:11.5px;height:7px;background:#d3d3d3;border:0.5px solid #888;box-sizing:border-box;"></div>
<div style="left:601.5px;top:366.5px;width:3.5px;height:3px;background:#333;"></div>
<div style="left:616px;top:300px;width:3px;height:72px;background:#262626;"></div>
<div style="left:619.5px;top:300px;width:3px;height:72px;background:#262626;"></div>
<div style="left:625px;top:304.5px;font-size:6px;color:#555;line-height:1;white-space:nowrap;width:10px;text-align:right;">0</div>
<div style="left:621px;top:306.7px;width:1.5px;height:0.7px;background:#666;"></div>
<div style="left:625px;top:312.0px;font-size:6px;color:#555;line-height:1;white-space:nowrap;width:10px;text-align:right;">6</div>
<div style="left:621px;top:314.2px;width:1.5px;height:0.7px;background:#666;"></div>
<div style="left:625px;top:319.0px;font-size:6px;color:#555;line-height:1;white-space:nowrap;width:10px;text-align:right;">12</div>
<div style="left:621px;top:321.2px;width:1.5px;height:0.7px;background:#666;"></div>
<div style="left:625px;top:326.0px;font-size:6px;color:#555;line-height:1;white-space:nowrap;width:10px;text-align:right;">18</div>
<div style="left:621px;top:328.2px;width:1.5px;height:0.7px;background:#666;"></div>
<div style="left:625px;top:333.0px;font-size:6px;color:#555;line-height:1;white-space:nowrap;width:10px;text-align:right;">24</div>
<div style="left:621px;top:335.2px;width:1.5px;height:0.7px;background:#666;"></div>
<div style="left:625px;top:340.0px;font-size:6px;color:#555;line-height:1;white-space:nowrap;width:10px;text-align:right;">30</div>
<div style="left:621px;top:342.2px;width:1.5px;height:0.7px;background:#666;"></div>
<div style="left:625px;top:346.5px;font-size:6px;color:#555;line-height:1;white-space:nowrap;width:10px;text-align:right;">36</div>
<div style="left:621px;top:348.7px;width:1.5px;height:0.7px;background:#666;"></div>
<div style="left:625px;top:357.0px;font-size:6px;color:#555;line-height:1;white-space:nowrap;width:10px;text-align:right;">48</div>
<div style="left:621px;top:359.2px;width:1.5px;height:0.7px;background:#666;"></div>
<div style="left:625px;top:365.0px;font-size:6px;color:#555;line-height:1;white-space:nowrap;width:10px;text-align:right;">60</div>
<div style="left:621px;top:367.2px;width:1.5px;height:0.7px;background:#666;"></div>
<div style="left:592.0px;top:379px;width:4px;height:1.8px;background:#222;"></div>
<div style="left:597.3px;top:379px;width:4px;height:1.8px;background:#222;"></div>
<div style="left:602.6px;top:379px;width:4px;height:1.8px;background:#222;"></div>
<div style="left:607.9px;top:379px;width:4px;height:1.8px;background:#222;"></div>
<div style="left:613.2px;top:379px;width:4px;height:1.8px;background:#222;"></div>
<div style="left:618.5px;top:379px;width:4px;height:1.8px;background:#222;"></div>
<svg style="left:0;top:0;overflow:visible" width="1" height="1"><path d="M648.85,290.89 A6.8,6.8 0 1 1 655.65,290.89" fill="none" stroke="#333" stroke-width="1.3"/><path d="M652.25,285.00 L647.97,290.28" stroke="#333" stroke-width="1.3"/></svg>
<div style="left:662.75px;top:279px;font-size:6px;color:#444;line-height:1;white-space:nowrap;">Sends</div>
<div style="left:645px;top:300px;width:18px;height:6px;background:#e6e6e6;border-radius:3px;border:0.5px solid #777;box-sizing:border-box;font-size:5px;line-height:5px;text-align:center;color:#444;">-inf</div>
<div style="left:645px;top:311px;width:19px;height:6px;background:#dcdcdc;border:0.5px solid #888;box-sizing:border-box;font-size:5px;line-height:5px;text-align:center;color:#555;">C</div>
<svg style="left:0;top:0;overflow:visible" width="1" height="1"><path d="M649.63,334.71 A6.8,6.8 0 1 1 658.37,334.71" fill="none" stroke="#333" stroke-width="1.2"/><path d="M654.00,329.50 L654.00,322.70" stroke="#333" stroke-width="1.2"/></svg>
<div style="left:653.6px;top:320px;width:0.8px;height:2.5px;background:#444;"></div>
<div style="left:648px;top:340.5px;width:12px;height:12px;background:#f5a300;font-size:7px;color:#3a2a00;text-align:center;line-height:12px;">26</div>
<div style="left:648px;top:355px;width:12.5px;height:7px;background:#cdcdcd;border:0.5px solid #888;box-sizing:border-box;"></div>
<div style="left:654px;top:355.5px;width:0.7px;height:6px;background:#999;"></div>
<div style="left:648.5px;top:364.5px;width:11.5px;height:7px;background:#d3d3d3;border:0.5px solid #888;box-sizing:border-box;"></div>
<div style="left:652.5px;top:366.5px;width:3.5px;height:3px;background:#333;"></div>
<div style="left:667px;top:300px;width:3px;height:72px;background:#262626;"></div>
<div style="left:670.5px;top:300px;width:3px;height:72px;background:#262626;"></div>
<div style="left:675px;top:303.0px;width:1.5px;height:0.6px;background:#666;"></div>
<div style="left:675px;top:308.8px;width:1.5px;height:0.6px;background:#666;"></div>
<div style="left:675px;top:314.6px;width:1.5px;height:0.6px;background:#666;"></div>
<div style="left:675px;top:320.4px;width:1.5px;height:0.6px;background:#666;"></div>
<div style="left:675px;top:326.2px;width:1.5px;height:0.6px;background:#666;"></div>
<div style="left:675px;top:332.0px;width:1.5px;height:0.6px;background:#666;"></div>
<div style="left:675px;top:337.8px;width:1.5px;height:0.6px;background:#666;"></div>
<div style="left:675px;top:343.6px;width:1.5px;height:0.6px;background:#666;"></div>
<div style="left:675px;top:349.4px;width:1.5px;height:0.6px;background:#666;"></div>
<div style="left:675px;top:355.2px;width:1.5px;height:0.6px;background:#666;"></div>
<div style="left:675px;top:361.0px;width:1.5px;height:0.6px;background:#666;"></div>
<div style="left:675px;top:366.8px;width:1.5px;height:0.6px;background:#666;"></div>
<div style="left:645.0px;top:379px;width:4px;height:1.8px;background:#222;"></div>
<div style="left:650.3px;top:379px;width:4px;height:1.8px;background:#222;"></div>
<div style="left:655.6px;top:379px;width:4px;height:1.8px;background:#222;"></div>
<div style="left:660.9px;top:379px;width:4px;height:1.8px;background:#222;"></div>
<div style="left:666.2px;top:379px;width:4px;height:1.8px;background:#222;"></div>
<div style="left:671.5px;top:379px;width:4px;height:1.8px;background:#222;"></div>
<svg style="left:0;top:0;overflow:visible" width="1" height="1"><path d="M688.35,290.89 A6.8,6.8 0 1 1 695.15,290.89" fill="none" stroke="#7a7a7a" stroke-width="1.3"/><path d="M691.75,285.00 L688.35,290.89" stroke="#7a7a7a" stroke-width="1.3"/></svg>
<div style="left:702.25px;top:279px;font-size:6px;color:#444;line-height:1;white-space:nowrap;">Sends</div>
<div style="left:683px;top:300px;width:18px;height:6px;background:#e6e6e6;border-radius:3px;border:0.5px solid #777;box-sizing:border-box;font-size:5px;line-height:5px;text-align:center;color:#444;">-inf</div>
<div style="left:683px;top:311px;width:19px;height:6px;background:#dcdcdc;border:0.5px solid #888;box-sizing:border-box;font-size:5px;line-height:5px;text-align:center;color:#555;">C</div>
<svg style="left:0;top:0;overflow:visible" width="1" height="1"><path d="M687.63,334.71 A6.8,6.8 0 1 1 696.37,334.71" fill="none" stroke="#333" stroke-width="1.2"/><path d="M692.00,329.50 L692.00,322.70" stroke="#333" stroke-width="1.2"/></svg>
<div style="left:691.6px;top:320px;width:0.8px;height:2.5px;background:#444;"></div>
<div style="left:686px;top:340.5px;width:12px;height:12px;background:#f5a300;font-size:7px;color:#3a2a00;text-align:center;line-height:12px;">A</div>
<div style="left:686px;top:355px;width:12.5px;height:7px;background:#cdcdcd;border:0.5px solid #888;box-sizing:border-box;"></div>
<div style="left:692px;top:355.5px;width:0.7px;height:6px;background:#999;"></div>
<div style="left:705px;top:300px;width:3px;height:72px;background:#262626;"></div>
<div style="left:708.5px;top:300px;width:3px;height:72px;background:#262626;"></div>
<div style="left:714px;top:304.5px;font-size:6px;color:#555;line-height:1;white-space:nowrap;width:10px;text-align:right;">0</div>
<div style="left:710px;top:306.7px;width:1.5px;height:0.7px;background:#666;"></div>
<div style="left:714px;top:312.0px;font-size:6px;color:#555;line-height:1;white-space:nowrap;width:10px;text-align:right;">6</div>
<div style="left:710px;top:314.2px;width:1.5px;height:0.7px;background:#666;"></div>
<div style="left:714px;top:319.0px;font-size:6px;color:#555;line-height:1;white-space:nowrap;width:10px;text-align:right;">12</div>
<div style="left:710px;top:321.2px;width:1.5px;height:0.7px;background:#666;"></div>
<div style="left:714px;top:326.0px;font-size:6px;color:#555;line-height:1;white-space:nowrap;width:10px;text-align:right;">18</div>
<div style="left:710px;top:328.2px;width:1.5px;height:0.7px;background:#666;"></div>
<div style="left:714px;top:333.0px;font-size:6px;color:#555;line-height:1;white-space:nowrap;width:10px;text-align:right;">24</div>
<div style="left:710px;top:335.2px;width:1.5px;height:0.7px;background:#666;"></div>
<div style="left:714px;top:340.0px;font-size:6px;color:#555;line-height:1;white-space:nowrap;width:10px;text-align:right;">30</div>
<div style="left:710px;top:342.2px;width:1.5px;height:0.7px;background:#666;"></div>
<div style="left:714px;top:346.5px;font-size:6px;color:#555;line-height:1;white-space:nowrap;width:10px;text-align:right;">36</div>
<div style="left:710px;top:348.7px;width:1.5px;height:0.7px;background:#666;"></div>
<div style="left:714px;top:357.0px;font-size:6px;color:#555;line-height:1;white-space:nowrap;width:10px;text-align:right;">48</div>
<div style="left:710px;top:359.2px;width:1.5px;height:0.7px;background:#666;"></div>
<div style="left:714px;top:365.0px;font-size:6px;color:#555;line-height:1;white-space:nowrap;width:10px;text-align:right;">60</div>
<div style="left:710px;top:367.2px;width:1.5px;height:0.7px;background:#666;"></div>
<div style="left:681.0px;top:379px;width:4px;height:1.8px;background:#e0a030;"></div>
<div style="left:686.3px;top:379px;width:4px;height:1.8px;background:#222;"></div>
<div style="left:691.6px;top:379px;width:4px;height:1.8px;background:#222;"></div>
<div style="left:696.9px;top:379px;width:4px;height:1.8px;background:#222;"></div>
<div style="left:702.2px;top:379px;width:4px;height:1.8px;background:#222;"></div>
<div style="left:707.5px;top:379px;width:4px;height:1.8px;background:#222;"></div>
<div style="left:228px;top:300px;width:2.5px;height:72px;background:#262626;"></div>
<div style="left:228px;top:339.6px;width:2.5px;height:32.39999999999998px;background:#5ee84a;"></div>
<div style="left:228px;top:332px;width:2.5px;height:5px;background:#3c8a3c;"></div>
<div style="left:228px;top:321.5px;width:2.5px;height:1px;background:#5ee84a;"></div>
<div style="left:234px;top:304.5px;font-size:6px;color:#4a4a4a;line-height:1;white-space:nowrap;width:10px;text-align:right;">0</div>
<div style="left:234px;top:312.0px;font-size:6px;color:#4a4a4a;line-height:1;white-space:nowrap;width:10px;text-align:right;">6</div>
<div style="left:234px;top:319.0px;font-size:6px;color:#4a4a4a;line-height:1;white-space:nowrap;width:10px;text-align:right;">12</div>
<div style="left:234px;top:326.0px;font-size:6px;color:#4a4a4a;line-height:1;white-space:nowrap;width:10px;text-align:right;">18</div>
<div style="left:234px;top:333.0px;font-size:6px;color:#4a4a4a;line-height:1;white-space:nowrap;width:10px;text-align:right;">24</div>
<div style="left:234px;top:340.0px;font-size:6px;color:#4a4a4a;line-height:1;white-space:nowrap;width:10px;text-align:right;">30</div>
<div style="left:234px;top:346.5px;font-size:6px;color:#4a4a4a;line-height:1;white-space:nowrap;width:10px;text-align:right;">36</div>
<div style="left:234px;top:357.0px;font-size:6px;color:#4a4a4a;line-height:1;white-space:nowrap;width:10px;text-align:right;">48</div>
<div style="left:234px;top:365.0px;font-size:6px;color:#4a4a4a;line-height:1;white-space:nowrap;width:10px;text-align:right;">60</div>
<div style="left:229px;top:279px;font-size:6px;color:#444;line-height:1;white-space:nowrap;">ends</div>
<div style="left:730px;top:285.8px;width:8px;height:0.7px;background:#ddd;"></div>
<div style="left:738.5px;top:283px;width:14px;height:6px;background:#f5a300;font-size:4px;line-height:6px;text-align:center;color:#333;">POST</div>
<div style="left:756px;top:279px;font-size:6px;color:#444;line-height:1;white-space:nowrap;">Sends</div>
<div style="left:736px;top:300px;width:18px;height:6px;background:#e6e6e6;border-radius:3px;border:0.5px solid #777;box-sizing:border-box;font-size:5px;line-height:5px;text-align:center;color:#444;">-7.51</div>
<div style="left:736px;top:311px;width:19px;height:6px;background:#dcdcdc;border:0.5px solid #888;box-sizing:border-box;font-size:5px;line-height:5px;text-align:center;color:#555;">0</div>
<svg style="left:0;top:0;overflow:visible" width="1" height="1"><path d="M740.63,334.71 A6.8,6.8 0 1 1 749.37,334.71" fill="none" stroke="#333" stroke-width="1.2"/><path d="M745.00,329.50 L745.00,322.70" stroke="#333" stroke-width="1.2"/></svg>
<div style="left:744.6px;top:320px;width:0.8px;height:2.5px;background:#444;"></div>
<div style="left:738.5px;top:345.5px;width:14px;height:7.5px;background:#d2d2d2;border:0.5px solid #888;box-sizing:border-box;font-size:4.5px;line-height:6.5px;text-align:center;color:#666;">Solo</div>
<svg style="left:0;top:0;overflow:visible" width="1" height="1"><path d="M741.39,367.66 A6.3,6.3 0 1 1 748.61,367.66" fill="none" stroke="#333" stroke-width="1.1"/><path d="M741.39,367.66 A6.3,6.3 0 0 1 746.58,356.40" fill="none" stroke="#3a6fd8" stroke-width="1.4000000000000001"/><path d="M745.00,362.50 L748.05,356.99" stroke="#333" stroke-width="1.1"/></svg>
<div style="left:759px;top:300px;width:3px;height:72px;background:#262626;"></div>
<div style="left:759px;top:327.36px;width:3px;height:44.639999999999986px;background:#5ee84a;"></div>
<div style="left:759px;top:322px;width:3px;height:5px;background:#3c8a3c;"></div>
<div style="left:759px;top:318px;width:3px;height:1px;background:#5ee84a;"></div>
<div style="left:762.5px;top:300px;width:3px;height:72px;background:#262626;"></div>
<div style="left:762.5px;top:327.36px;width:3px;height:44.639999999999986px;background:#5ee84a;"></div>
<div style="left:762.5px;top:322px;width:3px;height:5px;background:#3c8a3c;"></div>
<div style="left:762.5px;top:320px;width:3px;height:1px;background:#5ee84a;"></div>
<div style="left:760px;top:304.5px;font-size:6px;color:#555;line-height:1;white-space:nowrap;width:10px;text-align:right;">0</div>
<div style="left:756px;top:306.7px;width:1.5px;height:0.7px;background:#666;"></div>
<div style="left:760px;top:312.0px;font-size:6px;color:#555;line-height:1;white-space:nowrap;width:10px;text-align:right;">6</div>
<div style="left:756px;top:314.2px;width:1.5px;height:0.7px;background:#666;"></div>
<div style="left:760px;top:319.0px;font-size:6px;color:#555;line-height:1;white-space:nowrap;width:10px;text-align:right;">12</div>
<div style="left:756px;top:321.2px;width:1.5px;height:0.7px;background:#666;"></div>
<div style="left:760px;top:326.0px;font-size:6px;color:#555;line-height:1;white-space:nowrap;width:10px;text-align:right;">18</div>
<div style="left:756px;top:328.2px;width:1.5px;height:0.7px;background:#666;"></div>
<div style="left:760px;top:333.0px;font-size:6px;color:#555;line-height:1;white-space:nowrap;width:10px;text-align:right;">24</div>
<div style="left:756px;top:335.2px;width:1.5px;height:0.7px;background:#666;"></div>
<div style="left:760px;top:340.0px;font-size:6px;color:#555;line-height:1;white-space:nowrap;width:10px;text-align:right;">30</div>
<div style="left:756px;top:342.2px;width:1.5px;height:0.7px;background:#666;"></div>
<div style="left:760px;top:346.5px;font-size:6px;color:#555;line-height:1;white-space:nowrap;width:10px;text-align:right;">36</div>
<div style="left:756px;top:348.7px;width:1.5px;height:0.7px;background:#666;"></div>
<div style="left:760px;top:357.0px;font-size:6px;color:#555;line-height:1;white-space:nowrap;width:10px;text-align:right;">48</div>
<div style="left:756px;top:359.2px;width:1.5px;height:0.7px;background:#666;"></div>
<div style="left:760px;top:365.0px;font-size:6px;color:#555;line-height:1;white-space:nowrap;width:10px;text-align:right;">60</div>
<div style="left:756px;top:367.2px;width:1.5px;height:0.7px;background:#666;"></div>
<div style="left:733.0px;top:379px;width:4px;height:1.8px;background:#e0a030;"></div>
<div style="left:738.3px;top:379px;width:4px;height:1.8px;background:#222;"></div>
<div style="left:743.6px;top:379px;width:4px;height:1.8px;background:#222;"></div>
<div style="left:748.9px;top:379px;width:4px;height:1.8px;background:#222;"></div>
<div style="left:754.2px;top:379px;width:4px;height:1.8px;background:#222;"></div>
<div style="left:759.5px;top:379px;width:4px;height:1.8px;background:#222;"></div>
<div style="left:782px;top:171px;width:18px;height:219px;background:#6c6c6c;"></div>
<div style="left:782.5px;top:195px;width:12.5px;height:195px;background:#5e5e5e;"></div>
<svg style="left:782px;top:168px" width="16" height="225"><rect x="2.5" y="3" width="10" height="9.5" rx="3.5" fill="#8a8a8a" stroke="#4a4a4a" stroke-width="0.9"/><rect x="4.5" y="5" width="6" height="2.5" fill="#cfcfcf"/><rect x="4.5" y="8.5" width="6" height="2" fill="#aaa"/><rect x="2.5" y="15" width="10" height="11" rx="3" fill="#f5a300" stroke="#3a5a7a" stroke-width="0.7"/><rect x="6.2" y="17" width="2.6" height="7" fill="#c08a30"/><rect x="3.5" y="33" width="6.5" height="116" rx="3" fill="#525252"/><rect x="4.5" y="36" width="4.5" height="112" rx="2" fill="#7a7a7a"/><circle cx="7" cy="157.6" r="3.4" fill="#2a2a2a" stroke="#777" stroke-width="0.5"/><rect x="3.6" y="166" width="6.8" height="13" rx="3.4" fill="#f5a300" stroke="#8a6a20" stroke-width="0.5"/><circle cx="7" cy="186" r="3.4" fill="#f5a300"/><circle cx="7" cy="197.7" r="3.4" fill="#2a2a2a" stroke="#777" stroke-width="0.5"/><circle cx="7" cy="207" r="3.4" fill="#2a2a2a" stroke="#777" stroke-width="0.5"/><circle cx="7" cy="217.8" r="3.4" fill="#f5a300"/></svg>
<div style="left:227px;top:385.5px;width:555px;height:8px;background:#585858;"></div>
<div style="left:325px;top:386.5px;width:196px;height:5.5px;background:#767676;border-radius:2px;"></div>
<div style="left:227px;top:393.5px;width:570px;height:6.5px;background:#727272;"></div>
<svg style="left:237.5px;top:175px" width="8" height="8"><circle cx="4" cy="4" r="3.2" fill="none" stroke="#555" stroke-width="0.7"/><path d="M2.5 3 L4 5 L5.5 3" fill="none" stroke="#555" stroke-width="0.7"/></svg>
<svg style="left:291.5px;top:175px" width="8" height="8"><circle cx="4" cy="4" r="3.2" fill="none" stroke="#555" stroke-width="0.7"/><path d="M2.5 3 L4 5 L5.5 3" fill="none" stroke="#555" stroke-width="0.7"/></svg>
<svg style="left:524px;top:175px" width="8" height="8"><circle cx="4" cy="4" r="3.2" fill="none" stroke="#555" stroke-width="0.7"/><path d="M2.5 3 L4 5 L5.5 3" fill="none" stroke="#555" stroke-width="0.7"/></svg>
<div style="left:228px;top:400px;width:566px;height:112.5px;background:#1d1d1d;"></div>
<svg style="left:228px;top:400px" width="566" height="112.5" viewBox="228 400 566 112.5"><line x1="241" y1="412" x2="794" y2="412" stroke="#3f3f3f" stroke-width="1"/><line x1="241" y1="434.5" x2="794" y2="434.5" stroke="#3f3f3f" stroke-width="1"/><line x1="241" y1="457" x2="794" y2="457" stroke="#3f3f3f" stroke-width="1"/><line x1="241" y1="479.5" x2="794" y2="479.5" stroke="#3f3f3f" stroke-width="1"/><line x1="241" y1="502" x2="794" y2="502" stroke="#3f3f3f" stroke-width="1"/><line x1="229.5" y1="400" x2="229.5" y2="512.5" stroke="#555555" stroke-width="1"/><line x1="280.1" y1="400" x2="280.1" y2="512.5" stroke="#393939" stroke-width="1"/><line x1="309.7" y1="400" x2="309.7" y2="512.5" stroke="#393939" stroke-width="1"/><line x1="330.6" y1="400" x2="330.6" y2="512.5" stroke="#393939" stroke-width="1"/><line x1="346.9" y1="400" x2="346.9" y2="512.5" stroke="#393939" stroke-width="1"/><line x1="360.2" y1="400" x2="360.2" y2="512.5" stroke="#393939" stroke-width="1"/><line x1="371.5" y1="400" x2="371.5" y2="512.5" stroke="#393939" stroke-width="1"/><line x1="381.2" y1="400" x2="381.2" y2="512.5" stroke="#393939" stroke-width="1"/><line x1="389.8" y1="400" x2="389.8" y2="512.5" stroke="#393939" stroke-width="1"/><line x1="397.5" y1="400" x2="397.5" y2="512.5" stroke="#555555" stroke-width="1"/><line x1="448.1" y1="400" x2="448.1" y2="512.5" stroke="#393939" stroke-width="1"/><line x1="477.7" y1="400" x2="477.7" y2="512.5" stroke="#393939" stroke-width="1"/><line x1="498.6" y1="400" x2="498.6" y2="512.5" stroke="#393939" stroke-width="1"/><line x1="514.9" y1="400" x2="514.9" y2="512.5" stroke="#393939" stroke-width="1"/><line x1="528.2" y1="400" x2="528.2" y2="512.5" stroke="#393939" stroke-width="1"/><line x1="539.5" y1="400" x2="539.5" y2="512.5" stroke="#393939" stroke-width="1"/><line x1="549.2" y1="400" x2="549.2" y2="512.5" stroke="#393939" stroke-width="1"/><line x1="557.8" y1="400" x2="557.8" y2="512.5" stroke="#393939" stroke-width="1"/><line x1="565.5" y1="400" x2="565.5" y2="512.5" stroke="#555555" stroke-width="1"/><line x1="616.1" y1="400" x2="616.1" y2="512.5" stroke="#393939" stroke-width="1"/><line x1="645.7" y1="400" x2="645.7" y2="512.5" stroke="#393939" stroke-width="1"/><line x1="666.6" y1="400" x2="666.6" y2="512.5" stroke="#393939" stroke-width="1"/><line x1="682.9" y1="400" x2="682.9" y2="512.5" stroke="#393939" stroke-width="1"/><line x1="696.2" y1="400" x2="696.2" y2="512.5" stroke="#393939" stroke-width="1"/><line x1="707.5" y1="400" x2="707.5" y2="512.5" stroke="#393939" stroke-width="1"/><line x1="717.2" y1="400" x2="717.2" y2="512.5" stroke="#393939" stroke-width="1"/><line x1="725.8" y1="400" x2="725.8" y2="512.5" stroke="#393939" stroke-width="1"/><line x1="733.5" y1="400" x2="733.5" y2="512.5" stroke="#555555" stroke-width="1"/><line x1="784.1" y1="400" x2="784.1" y2="512.5" stroke="#393939" stroke-width="1"/><polygon points="330.0,512.5 331.2,512.5 332.5,512.2 333.8,511.6 335.0,511.0 336.2,510.4 337.5,509.8 338.8,509.1 340.0,508.5 341.2,507.1 342.5,505.7 343.8,507.3 345.0,504.1 346.2,505.5 347.5,504.1 348.8,502.1 350.0,503.4 351.2,500.6 352.5,501.7 353.8,499.4 355.0,498.9 356.2,499.7 357.5,500.8 358.8,497.0 360.0,496.8 361.2,498.2 362.5,499.3 363.8,497.3 365.0,496.2 366.2,498.4 367.5,494.0 368.8,497.2 370.0,494.4 371.2,493.4 372.5,493.0 373.8,493.5 375.0,495.4 376.2,492.3 377.5,493.7 378.8,493.6 380.0,492.1 381.2,492.5 382.5,490.1 383.8,489.7 385.0,490.0 386.2,491.8 387.5,490.3 388.8,489.5 390.0,490.4 391.2,489.4 392.5,488.4 393.8,490.2 395.0,489.4 396.2,487.0 397.5,488.1 398.8,487.5 400.0,488.7 401.2,487.8 402.5,485.6 403.8,488.4 405.0,484.3 406.4,486.8 407.8,489.5 409.2,488.1 410.6,490.8 412.0,490.0 413.3,493.4 414.7,494.5 416.0,494.3 417.3,496.3 418.7,494.5 420.0,496.9 421.4,497.2 422.8,498.0 424.2,498.2 425.6,500.7 427.0,502.0 428.2,496.9 429.5,494.7 430.8,489.1 432.0,488.9 433.3,488.1 434.7,489.2 436.0,487.9 437.3,485.1 438.7,485.0 440.0,485.7 441.4,481.9 442.8,482.8 444.2,480.5 445.6,479.3 447.0,478.1 448.3,480.7 449.7,477.4 451.0,477.4 452.3,477.5 453.7,479.1 455.0,475.2 456.4,476.2 457.8,476.0 459.2,476.9 460.6,476.0 462.0,475.6 463.3,472.7 464.7,473.0 466.0,472.4 467.3,474.4 468.7,474.3 470.0,470.5 471.3,469.7 472.7,469.2 474.0,468.3 475.3,468.6 476.7,468.2 478.0,466.0 479.4,464.0 480.8,465.0 482.2,464.0 483.6,464.1 485.0,465.0 486.2,463.1 487.5,461.6 488.8,461.3 490.0,460.8 491.2,456.8 492.5,459.3 493.8,457.5 495.0,456.6 497.0,441.3 498.5,444.5 500.0,449.6 501.5,454.3 503.0,462.6 504.3,464.4 505.7,468.8 507.0,473.7 508.5,457.5 510.0,442.3 511.5,454.5 513.0,467.8 514.3,471.8 515.7,474.9 517.0,479.4 518.5,471.9 520.0,469.6 521.2,466.5 522.5,462.5 523.8,460.9 525.0,459.3 527.0,439.4 528.0,405.3 530.0,441.5 532.0,462.2 533.5,462.4 535.0,464.9 536.2,456.2 537.5,449.2 538.8,443.3 540.0,436.0 541.2,446.7 542.5,452.0 543.8,459.7 545.0,472.0 546.0,490.1 548.0,473.4 549.3,476.9 550.7,476.3 552.0,480.1 553.2,480.9 554.5,479.1 555.8,477.1 557.0,473.9 558.5,471.9 560.0,468.5 562.0,486.2 563.5,490.1 565.0,496.2 566.5,484.3 568.0,473.8 569.3,481.4 570.7,487.1 572.0,491.6 573.2,481.8 574.5,472.4 575.8,462.6 577.0,450.8 578.5,466.1 580.0,479.4 581.2,481.7 582.5,485.4 583.8,490.3 585.0,493.9 586.2,489.6 587.5,484.5 588.8,476.0 590.0,471.9 591.5,484.6 593.0,497.0 594.3,496.1 595.7,497.1 597.0,498.8 598.2,499.9 599.5,501.2 600.8,503.8 602.0,505.0 603.2,490.2 604.5,475.5 605.8,460.8 607.0,446.0 608.3,460.7 609.7,475.3 611.0,490.0 612.2,493.2 613.5,496.5 614.8,499.8 616.0,503.0 617.3,497.3 618.7,491.7 620.0,486.0 621.5,495.5 623.0,505.0 624.2,493.5 625.5,482.0 626.8,470.5 628.0,459.0 629.3,472.7 630.7,486.3 632.0,500.0 633.3,504.2 634.7,508.3 636.0,512.5 637.3,510.0 638.7,507.5 640.0,505.0 641.5,498.0 643.0,491.0 644.5,501.8 646.0,512.5 647.2,512.5 648.4,512.5 649.6,512.5 650.8,512.5 652.0,512.5 653.2,512.5 654.4,512.5 655.6,512.5 656.8,512.5 658.0,512.5 659.2,512.5 660.4,512.5 661.6,512.5 662.8,512.5 664.0,512.5 665.2,512.5 666.4,512.5 667.6,512.5 668.8,512.5 670.0,512.5 672.0,500.0 674.0,512.5 675.2,512.5 676.4,512.5 677.6,512.5 678.8,512.5 680.1,512.5 681.3,512.5 682.5,512.5 683.7,512.5 684.9,512.5 686.1,512.5 687.3,512.5 688.5,512.5 689.7,512.5 690.9,512.5 692.2,512.5 693.4,512.5 694.6,512.5 695.8,512.5 697.0,512.5 698.2,512.5 699.4,512.5 700.6,512.5 701.8,512.5 703.1,512.5 704.3,512.5 705.5,512.5 706.7,512.5 707.9,512.5 709.1,512.5 710.3,512.5 711.5,512.5 712.7,512.5 713.9,512.5 715.2,512.5 716.4,512.5 717.6,512.5 718.8,512.5 720.0,512.5 721.2,512.5 722.4,512.5 723.6,512.5 724.8,512.5 726.1,512.5 727.3,512.5 728.5,512.5 729.7,512.5 730.9,512.5 732.1,512.5 733.3,512.5 734.5,512.5 735.7,512.5 736.9,512.5 738.2,512.5 739.4,512.5 740.6,512.5 741.8,512.5 743.0,512.5 744.2,512.5 745.4,512.5 746.6,512.5 747.8,512.5 749.1,512.5 750.3,512.5 751.5,512.5 752.7,512.5 753.9,512.5 755.1,512.5 756.3,512.5 757.5,512.5 758.7,512.5 759.9,512.5 761.2,512.5 762.4,512.5 763.6,512.5 764.8,512.5 766.0,512.5 767.2,512.5 768.4,512.5 769.6,512.5 770.8,512.5 772.1,512.5 773.3,512.5 774.5,512.5 775.7,512.5 776.9,512.5 778.1,512.5 779.3,512.5 780.5,512.5 781.7,512.5 782.9,512.5 784.2,512.5 785.4,512.5 786.6,512.5 787.8,512.5 789.0,512.5 790.5,501.2 792.0,490.0 794.0,512.5" fill="#7b7b7b"/><path d="M311,513.5 C314.17,509.92 323.50,499.33 330,492 C336.50,484.67 345.00,475.17 350,469.5 C355.00,463.83 357.00,461.17 360,458 C363.00,454.83 365.50,452.33 368,450.5 C370.50,448.67 372.50,448.00 375,447 C377.50,446.00 380.17,445.13 383,444.5 C385.83,443.87 389.17,443.37 392,443.2 C394.83,443.03 395.33,443.32 400,443.5 C404.67,443.68 412.50,444.17 420,444.3 C427.50,444.43 439.17,444.60 445,444.3 C450.83,444.00 450.00,443.22 455,442.5 C460.00,441.78 468.00,440.83 475,440 C482.00,439.17 489.50,438.25 497,437.5 C504.50,436.75 512.83,436.12 520,435.5 C527.17,434.88 532.33,434.22 540,433.8 C547.67,433.38 557.67,433.05 566,433 C574.33,432.95 581.00,433.18 590,433.5 C599.00,433.82 610.00,434.68 620,434.9 C630.00,435.12 641.33,435.32 650,434.8 C658.67,434.28 665.33,432.82 672,431.8 C678.67,430.78 685.00,429.58 690,428.7 C695.00,427.82 697.33,426.98 702,426.5 C706.67,426.02 712.50,425.83 718,425.8 C723.50,425.77 730.00,425.93 735,426.3 C740.00,426.67 743.50,427.38 748,428 C752.50,428.62 757.33,429.57 762,430 C766.67,430.43 770.67,430.50 776,430.6 C781.33,430.70 791.00,430.60 794,430.6" fill="none" stroke="#40a9c8" stroke-width="1.5" stroke-linejoin="round"/><circle cx="380.5" cy="457.5" r="3.4" fill="none" stroke="#e6a020" stroke-width="1.1"/><rect x="380" y="455.8" width="1" height="3.4" fill="#e6a020"/><circle cx="569.5" cy="434.5" r="3" fill="none" stroke="#e6a020" stroke-width="1.3"/><circle cx="569.5" cy="434.5" r="1.3" fill="#8a6a20"/><circle cx="672" cy="432" r="3.3" fill="#f0a818"/><text x="240" y="413.7" font-size="5" fill="#bbb" text-anchor="end" font-family="Liberation Sans">12</text><text x="240" y="436.2" font-size="5" fill="#bbb" text-anchor="end" font-family="Liberation Sans">6</text><text x="240" y="458.7" font-size="5" fill="#bbb" text-anchor="end" font-family="Liberation Sans">0</text><text x="240" y="481.2" font-size="5" fill="#bbb" text-anchor="end" font-family="Liberation Sans">-6</text><text x="240" y="503.7" font-size="5" fill="#bbb" text-anchor="end" font-family="Liberation Sans">-12</text><text x="397.5" y="511" font-size="5" fill="#aaa" text-anchor="middle" font-family="Liberation Sans">100</text><text x="566" y="511" font-size="5" fill="#aaa" text-anchor="middle" font-family="Liberation Sans">1k</text><text x="734" y="511" font-size="5" fill="#aaa" text-anchor="middle" font-family="Liberation Sans">10k</text></svg>
<div style="left:5px;top:520px;width:790px;height:107px;background:#5f5f5f;"></div>
<div style="left:5px;top:520px;width:7px;height:107px;background:#585858;"></div>
<div style="left:7px;top:566.5px;width:1.5px;height:2.5px;background:#f5a300;"></div>
<div style="left:7px;top:574.5px;width:1.5px;height:11px;background:#f5a300;"></div>
<div style="left:12.5px;top:522px;width:207px;height:104.5px;background:#a0a0a0;border-radius:2px;"></div>
<div style="left:12.5px;top:522px;width:207px;height:10.5px;background:#a8a8a8;"></div>
<svg style="left:13px;top:523px" width="9" height="9"><circle cx="4.5" cy="4.5" r="3.3" fill="#f5a800" stroke="#c88a00" stroke-width="0.5"/></svg>
<div style="left:23px;top:524.5px;font-size:6px;color:#444;line-height:1;white-space:nowrap;">Electric</div>
<div style="left:194px;top:524.5px;font-size:6px;color:#555;line-height:1;white-space:nowrap;">ǂ</div>
<div style="left:199.5px;top:524.5px;font-size:6px;color:#555;line-height:1;white-space:nowrap;">ǂ</div>
<div style="left:205px;top:524.5px;font-size:6px;color:#555;line-height:1;white-space:nowrap;">ǂ</div>
<svg style="left:209px;top:523px" width="10" height="9"><circle cx="3.5" cy="4.5" r="2.6" fill="none" stroke="#666" stroke-width="0.6"/><rect x="6.5" y="2.5" width="3" height="4" fill="#444"/></svg>
<div style="left:13px;top:532.5px;width:61px;height:38.5px;background:#acacac;"></div>
<div style="left:74px;top:532.5px;width:56px;height:38.5px;background:#9c9c9c;"></div>
<div style="left:130px;top:532.5px;width:56.5px;height:38.5px;background:#a0a0a0;"></div>
<div style="left:186.5px;top:532.5px;width:33px;height:38.5px;background:#a3a3a3;"></div>
<div style="left:74px;top:532.5px;width:0.8px;height:38.5px;background:#8e8e8e;"></div>
<div style="left:130px;top:532.5px;width:0.8px;height:38.5px;background:#8e8e8e;"></div>
<div style="left:186.5px;top:532.5px;width:0.8px;height:38.5px;background:#8e8e8e;"></div>
<div style="left:3px;top:535px;font-size:6px;color:#444;line-height:1;white-space:nowrap;width:80px;text-align:center;">Hammer</div>
<div style="left:-10px;top:541.5px;font-size:6px;color:#444;line-height:1;white-space:nowrap;width:80px;text-align:center;">Stiffness</div>
<div style="left:17px;top:541.5px;font-size:6px;color:#444;line-height:1;white-space:nowrap;width:80px;text-align:center;">Noise</div>
<svg style="left:0;top:0;overflow:visible" width="1" height="1"><path d="M26.05,560.68 A6.9,6.9 0 1 1 32.95,560.68" fill="none" stroke="#333" stroke-width="1.4"/><path d="M26.05,560.68 A6.9,6.9 0 0 1 22.60,554.70" fill="none" stroke="#3cc8ee" stroke-width="1.7"/><path d="M29.50,554.70 L22.60,554.70" stroke="#333" stroke-width="1.4"/></svg>
<svg style="left:0;top:0;overflow:visible" width="1" height="1"><path d="M53.75,560.68 A6.9,6.9 0 1 1 60.65,560.68" fill="none" stroke="#333" stroke-width="1.4"/><path d="M53.75,560.68 A6.9,6.9 0 0 1 50.30,554.70" fill="none" stroke="#3cc8ee" stroke-width="1.7"/><path d="M57.20,554.70 L51.22,551.25" stroke="#333" stroke-width="1.4"/></svg>
<div style="left:-10px;top:562px;font-size:6px;color:#555;line-height:1;white-space:nowrap;width:80px;text-align:center;">31 %</div>
<div style="left:17px;top:562px;font-size:6px;color:#555;line-height:1;white-space:nowrap;width:80px;text-align:center;">29 %</div>
<div style="left:61.5px;top:535px;font-size:6px;color:#444;line-height:1;white-space:nowrap;width:80px;text-align:center;">Fork</div>
<div style="left:49.5px;top:541.5px;font-size:6px;color:#444;line-height:1;white-space:nowrap;width:80px;text-align:center;">Time</div>
<div style="left:75px;top:541.5px;font-size:6px;color:#444;line-height:1;white-space:nowrap;width:80px;text-align:center;">Tone</div>
<svg style="left:0;top:0;overflow:visible" width="1" height="1"><path d="M86.05,560.48 A6.9,6.9 0 1 1 92.95,560.48" fill="none" stroke="#333" stroke-width="1.4"/><path d="M86.05,560.48 A6.9,6.9 0 1 1 96.39,554.14" fill="none" stroke="#3cc8ee" stroke-width="1.7"/><path d="M89.50,554.50 L96.39,554.14" stroke="#333" stroke-width="1.4"/></svg>
<svg style="left:0;top:0;overflow:visible" width="1" height="1"><path d="M111.55,560.48 A6.9,6.9 0 1 1 118.45,560.48" fill="none" stroke="#333" stroke-width="1.4"/><path d="M111.55,560.48 A6.9,6.9 0 1 1 121.30,557.31" fill="none" stroke="#3cc8ee" stroke-width="1.7"/><path d="M115.00,554.50 L121.30,557.31" stroke="#333" stroke-width="1.4"/></svg>
<div style="left:49.5px;top:562px;font-size:6px;color:#555;line-height:1;white-space:nowrap;width:80px;text-align:center;">79 %</div>
<div style="left:75px;top:562px;font-size:6px;color:#555;line-height:1;white-space:nowrap;width:80px;text-align:center;">88 %</div>
<div style="left:118px;top:535px;font-size:6px;color:#444;line-height:1;white-space:nowrap;width:80px;text-align:center;">Damper / Pickup</div>
<div style="left:108px;top:541.5px;font-size:6px;color:#444;line-height:1;white-space:nowrap;width:80px;text-align:center;">Symmetry</div>
<div style="left:132px;top:543px;font-size:6px;color:#444;line-height:1;white-space:nowrap;width:80px;text-align:center;">Type</div>
<svg style="left:0;top:0;overflow:visible" width="1" height="1"><path d="M144.55,560.48 A6.9,6.9 0 1 1 151.45,560.48" fill="none" stroke="#333" stroke-width="1.4"/><path d="M144.55,560.48 A6.9,6.9 0 1 1 154.90,554.50" fill="none" stroke="#3cc8ee" stroke-width="1.7"/><path d="M148.00,554.50 L154.90,554.50" stroke="#333" stroke-width="1.4"/></svg>
<div style="left:108px;top:562px;font-size:6px;color:#555;line-height:1;white-space:nowrap;width:80px;text-align:center;">80 %</div>
<div style="left:165px;top:550px;width:14px;height:6px;background:#f5a300;font-size:4px;line-height:5.5px;text-align:center;color:#333;">R</div>
<div style="left:165px;top:559.5px;width:14px;height:6px;background:#d7d7d7;font-size:4px;line-height:5.5px;text-align:center;color:#333;">W</div>
<div style="left:163px;top:535px;font-size:6px;color:#444;line-height:1;white-space:nowrap;width:80px;text-align:center;">Global</div>
<div style="left:163px;top:541.5px;font-size:6px;color:#444;line-height:1;white-space:nowrap;width:80px;text-align:center;">Volume</div>
<svg style="left:0;top:0;overflow:visible" width="1" height="1"><path d="M199.55,560.68 A6.9,6.9 0 1 1 206.45,560.68" fill="none" stroke="#333" stroke-width="1.4"/><path d="M199.55,560.68 A6.9,6.9 0 0 1 199.55,548.72" fill="none" stroke="#3cc8ee" stroke-width="1.7"/><path d="M203.00,554.70 L204.79,548.04" stroke="#333" stroke-width="1.4"/></svg>
<div style="left:163px;top:562px;font-size:6px;color:#555;line-height:1;white-space:nowrap;width:80px;text-align:center;">-8.2 dB</div>
<div style="left:14px;top:571.5px;width:205px;height:53px;background:#1b1b1b;"></div>
<div style="left:72.5px;top:571.5px;width:1px;height:53px;background:#444;"></div>
<div style="left:73.5px;top:588.5px;width:145.5px;height:2px;background:#333;"></div>
<div style="left:73.5px;top:606px;width:145.5px;height:2px;background:#333;"></div>
<svg style="left:14px;top:572px" width="58" height="52" viewBox="14 572 58 52"><g fill="none" stroke="#5c5c5c" stroke-width="1.3"><rect x="21" y="591" width="8.5" height="6.5"/><path d="M24 594.2 L27 594.2"/><rect x="32" y="586.5" width="27" height="5.5" rx="2.5"/><path d="M36 589.2 L55 589.2" stroke-width="0.8"/><path d="M33 595 L61 595"/><rect x="60" y="586" width="4.5" height="10" rx="2"/><path d="M46 595 L46 598 L53 598 L53 595"/><path d="M29.5 594.2 L33 594.2"/></g><path d="M32.5 599.5 L35.5 597.5 L49.5 605 L51 609.5 L56.5 609.5 L61 598 L56.5 599.5 L52.5 607 L48 606 L33.5 601 Z" fill="none" stroke="#3ab4d4" stroke-width="1.2" stroke-linejoin="round"/></svg>
<div style="left:76px;top:573px;font-size:6px;color:#aaa;line-height:1;white-space:nowrap;">Stiffness</div>
<div style="left:150px;top:573px;font-size:6px;color:#aaa;line-height:1;white-space:nowrap;">Vel</div>
<div style="left:188px;top:573px;font-size:6px;color:#aaa;line-height:1;white-space:nowrap;">Key</div>
<div style="left:150px;top:580px;font-size:6px;color:#f5a300;line-height:1;white-space:nowrap;font-weight:bold;">0.0</div>
<div style="left:188px;top:580px;font-size:6px;color:#f5a300;line-height:1;white-space:nowrap;font-weight:bold;">50</div>
<div style="left:76px;top:591.5px;font-size:6px;color:#aaa;line-height:1;white-space:nowrap;">Force</div>
<div style="left:112px;top:591.5px;font-size:6px;color:#aaa;line-height:1;white-space:nowrap;">Amount</div>
<div style="left:150px;top:591.5px;font-size:6px;color:#aaa;line-height:1;white-space:nowrap;">Vel</div>
<div style="left:188px;top:591.5px;font-size:6px;color:#aaa;line-height:1;white-space:nowrap;">Key</div>
<div style="left:112px;top:598.5px;font-size:6px;color:#3cc8ee;line-height:1;white-space:nowrap;font-weight:bold;">41 %</div>
<div style="left:150px;top:598.5px;font-size:6px;color:#f5a300;line-height:1;white-space:nowrap;font-weight:bold;">79</div>
<div style="left:188px;top:598.5px;font-size:6px;color:#f5a300;line-height:1;white-space:nowrap;font-weight:bold;">85</div>
<div style="left:76px;top:609.5px;font-size:6px;color:#aaa;line-height:1;white-space:nowrap;">Noise</div>
<div style="left:112px;top:609.5px;font-size:6px;color:#aaa;line-height:1;white-space:nowrap;">Pitch</div>
<div style="left:150px;top:609.5px;font-size:6px;color:#aaa;line-height:1;white-space:nowrap;">Decay</div>
<div style="left:188px;top:609.5px;font-size:6px;color:#aaa;line-height:1;white-space:nowrap;">Key</div>
<div style="left:112px;top:616.5px;font-size:6px;color:#3cc8ee;line-height:1;white-space:nowrap;font-weight:bold;">43%</div>
<div style="left:150px;top:616.5px;font-size:6px;color:#3cc8ee;line-height:1;white-space:nowrap;font-weight:bold;">38 %</div>
<div style="left:188px;top:616.5px;font-size:6px;color:#f5a300;line-height:1;white-space:nowrap;font-weight:bold;">56</div>
<div style="left:221px;top:570px;width:3.5px;height:16.5px;background:#47d44a;"></div>
<div style="left:221px;top:566px;width:3.5px;height:2px;background:#777;"></div>
<div style="left:225.5px;top:522px;width:136px;height:104.5px;background:#a2a2a2;border-radius:2px;"></div>
<div style="left:225.5px;top:522px;width:136px;height:10.5px;background:#a9a9a9;"></div>
<svg style="left:226px;top:523px" width="9" height="9"><circle cx="4.5" cy="4.5" r="3.3" fill="#f5a800" stroke="#c88a00" stroke-width="0.5"/></svg>
<div style="left:237px;top:524.5px;font-size:6px;color:#444;line-height:1;white-space:nowrap;">Chorus-Ensemble</div>
<svg style="left:345px;top:523px" width="16" height="9"><circle cx="4.5" cy="4.5" r="2.8" fill="none" stroke="#666" stroke-width="0.6"/><rect x="10.5" y="2.5" width="3" height="4" fill="#444"/></svg>
<div style="left:228.5px;top:534px;width:99.5px;height:59.5px;background:#1b1b1b;"></div>
<svg style="left:229px;top:534px" width="99" height="30"><polyline points="0.00,17.35 0.70,16.51 1.40,15.67 2.10,14.83 2.80,14.01 3.50,13.23 4.20,12.48 4.90,11.79 5.60,11.16 6.30,10.61 7.00,10.14 7.70,9.76 8.40,9.47 9.10,9.29 9.80,9.20 10.50,9.23 11.20,9.35 11.90,9.58 12.60,9.91 13.30,10.33 14.00,10.83 14.70,11.42 15.40,12.08 16.10,12.79 16.80,13.56 17.50,14.36 18.20,15.19 18.90,16.03 19.60,16.87 20.30,17.70 21.00,18.50 21.70,19.26 22.40,19.97 23.10,20.62 23.80,21.20 24.50,21.71 25.20,22.12 25.90,22.44 26.60,22.66 27.30,22.78 28.00,22.79 28.70,22.70 29.40,22.51 30.10,22.22 30.80,21.83 31.50,21.36 32.20,20.80 32.90,20.17 33.60,19.47 34.30,18.72 35.00,17.93 35.70,17.11 36.40,16.27 37.10,15.43 37.80,14.60 38.50,13.78 39.20,13.01 39.90,12.28 40.60,11.60 41.30,10.99 42.00,10.46 42.70,10.02 43.40,9.66 44.10,9.41 44.80,9.25 45.50,9.20 46.20,9.25 46.90,9.41 47.60,9.66 48.30,10.02 49.00,10.46 49.70,10.99 50.40,11.60 51.10,12.28 51.80,13.01 52.50,13.78 53.20,14.60 53.90,15.43 54.60,16.27 55.30,17.11 56.00,17.93 56.70,18.72 57.40,19.47 58.10,20.17 58.80,20.80 59.50,21.36 60.20,21.83 60.90,22.22 61.60,22.51 62.30,22.70 63.00,22.79 63.70,22.78 64.40,22.66 65.10,22.44 65.80,22.12 66.50,21.71 67.20,21.20 67.90,20.62 68.60,19.97 69.30,19.26 70.00,18.50 70.70,17.70 71.40,16.87 72.10,16.03 72.80,15.19 73.50,14.36 74.20,13.56 74.90,12.79 75.60,12.08 76.30,11.42 77.00,10.83 77.70,10.33 78.40,9.91 79.10,9.58 79.80,9.35 80.50,9.23 81.20,9.20 81.90,9.29 82.60,9.47 83.30,9.76 84.00,10.14 84.70,10.61 85.40,11.16 86.10,11.79 86.80,12.48 87.50,13.23 88.20,14.01 88.90,14.83 89.60,15.67 90.30,16.51 91.00,17.35 91.70,18.16 92.40,18.94 93.10,19.67 93.80,20.35 94.50,20.97 95.20,21.50 95.90,21.95 96.60,22.31 97.30,22.58 98.00,22.74" fill="none" stroke="#f5a300" stroke-width="1.3"/><polyline points="0.00,9.31 0.70,9.21 1.40,9.22 2.10,9.33 2.80,9.54 3.50,9.85 4.20,10.26 4.90,10.76 5.60,11.33 6.30,11.98 7.00,12.69 7.70,13.45 8.40,14.24 9.10,15.07 9.80,15.91 10.50,16.75 11.20,17.58 11.90,18.39 12.60,19.15 13.30,19.87 14.00,20.54 14.70,21.13 15.40,21.64 16.10,22.07 16.80,22.40 17.50,22.63 18.20,22.77 18.90,22.80 19.60,22.72 20.30,22.55 21.00,22.27 21.70,21.89 22.40,21.43 23.10,20.88 23.80,20.26 24.50,19.57 25.20,18.83 25.90,18.04 26.60,17.23 27.30,16.39 28.00,15.55 28.70,14.71 29.40,13.90 30.10,13.12 30.80,12.38 31.50,11.69 32.20,11.08 32.90,10.53 33.60,10.08 34.30,9.71 35.00,9.44 35.70,9.27 36.40,9.20 37.10,9.24 37.80,9.38 38.50,9.62 39.20,9.96 39.90,10.39 40.60,10.91 41.30,11.51 42.00,12.18 42.70,12.90 43.40,13.67 44.10,14.48 44.80,15.31 45.50,16.15 46.20,16.99 46.90,17.81 47.60,18.61 48.30,19.37 49.00,20.07 49.70,20.71 50.40,21.28 51.10,21.77 51.80,22.17 52.50,22.48 53.20,22.68 53.90,22.79 54.60,22.79 55.30,22.68 56.00,22.48 56.70,22.17 57.40,21.77 58.10,21.28 58.80,20.71 59.50,20.07 60.20,19.37 60.90,18.61 61.60,17.81 62.30,16.99 63.00,16.15 63.70,15.31 64.40,14.48 65.10,13.67 65.80,12.90 66.50,12.18 67.20,11.51 67.90,10.91 68.60,10.39 69.30,9.96 70.00,9.62 70.70,9.38 71.40,9.24 72.10,9.20 72.80,9.27 73.50,9.44 74.20,9.71 74.90,10.08 75.60,10.53 76.30,11.08 77.00,11.69 77.70,12.38 78.40,13.12 79.10,13.90 79.80,14.71 80.50,15.55 81.20,16.39 81.90,17.23 82.60,18.04 83.30,18.83 84.00,19.57 84.70,20.26 85.40,20.88 86.10,21.43 86.80,21.89 87.50,22.27 88.20,22.55 88.90,22.72 89.60,22.80 90.30,22.77 91.00,22.63 91.70,22.40 92.40,22.07 93.10,21.64 93.80,21.13 94.50,20.54 95.20,19.87 95.90,19.15 96.60,18.39 97.30,17.58 98.00,16.75" fill="none" stroke="#3cc8ee" stroke-width="1.3"/></svg>
<div style="left:229.5px;top:566.5px;width:31.5px;height:7.5px;background:#f5a300;font-size:5px;line-height:7.5px;text-align:center;color:#6b4a00;">Classic</div>
<div style="left:262px;top:566.5px;width:32px;height:7.5px;background:#2a2000;border:1.2px solid #f5a300;border-radius:1.5px;box-sizing:border-box;font-size:5px;line-height:5.5px;text-align:center;color:#c88a00;">Ensemble</div>
<div style="left:295px;top:566.5px;width:32px;height:7.5px;background:#2a2000;border:1.2px solid #f5a300;border-radius:1.5px;box-sizing:border-box;font-size:5px;line-height:5.5px;text-align:center;color:#c88a00;">Vibrato</div>
<div style="left:230px;top:579.5px;width:4.5px;height:4.5px;background:#f5a300;"></div>
<div style="left:236px;top:580px;width:6px;height:0.8px;background:#aaa;"></div>
<div style="left:236px;top:580px;width:0.8px;height:3px;background:#aaa;"></div>
<div style="left:264px;top:577.8px;font-size:6px;color:#999;line-height:1;white-space:nowrap;">Width</div>
<div style="left:230px;top:585px;width:24px;height:6.5px;background:#262626;font-size:5px;line-height:6.5px;text-align:center;color:#aaa;">35.0Hz</div>
<div style="left:264px;top:585.5px;font-size:6px;color:#f5a300;line-height:1;white-space:nowrap;font-weight:bold;">100 %</div>
<div style="left:328.5px;top:596px;width:0.8px;height:29px;background:#8a8a8a;"></div>
<div style="left:305.5px;top:535px;font-size:6px;color:#444;line-height:1;white-space:nowrap;width:80px;text-align:center;">Output</div>
<svg style="left:0;top:0;overflow:visible" width="1" height="1"><path d="M342.25,554.38 A6.9,6.9 0 1 1 349.15,554.38" fill="none" stroke="#333" stroke-width="1.4"/><path d="M342.25,554.38 A6.9,6.9 0 1 1 349.76,542.82" fill="none" stroke="#3cc8ee" stroke-width="1.7"/><path d="M345.70,548.40 L351.68,544.95" stroke="#333" stroke-width="1.4"/></svg>
<div style="left:305.5px;top:555px;font-size:6px;color:#555;line-height:1;white-space:nowrap;width:80px;text-align:center;">0.0 dB</div>
<div style="left:305.5px;top:565.5px;font-size:6px;color:#444;line-height:1;white-space:nowrap;width:80px;text-align:center;">Warmth</div>
<svg style="left:0;top:0;overflow:visible" width="1" height="1"><path d="M342.25,585.88 A6.9,6.9 0 1 1 349.15,585.88" fill="none" stroke="#333" stroke-width="1.4"/><path d="M342.25,585.88 A6.9,6.9 0 0 1 340.12,583.96" fill="none" stroke="#3cc8ee" stroke-width="1.7"/><path d="M345.70,579.90 L339.04,581.69" stroke="#333" stroke-width="1.4"/></svg>
<div style="left:305.5px;top:585.5px;font-size:6px;color:#555;line-height:1;white-space:nowrap;width:80px;text-align:center;">0.2 %</div>
<div style="left:305.5px;top:597.8px;font-size:6px;color:#444;line-height:1;white-space:nowrap;width:80px;text-align:center;">Dry/Wet</div>
<svg style="left:0;top:0;overflow:visible" width="1" height="1"><path d="M342.05,616.98 A6.9,6.9 0 1 1 348.95,616.98" fill="none" stroke="#333" stroke-width="1.4"/><path d="M342.05,616.98 A6.9,6.9 0 0 1 347.29,604.34" fill="none" stroke="#3cc8ee" stroke-width="1.7"/><path d="M345.50,611.00 L349.56,605.42" stroke="#333" stroke-width="1.4"/></svg>
<div style="left:305.5px;top:617.5px;font-size:6px;color:#555;line-height:1;white-space:nowrap;width:80px;text-align:center;">83 %</div>
<div style="left:203.5px;top:597.8px;font-size:6px;color:#444;line-height:1;white-space:nowrap;width:80px;text-align:center;">Rate</div>
<svg style="left:0;top:0;overflow:visible" width="1" height="1"><path d="M240.05,616.98 A6.9,6.9 0 1 1 246.95,616.98" fill="none" stroke="#333" stroke-width="1.4"/><path d="M240.05,616.98 A6.9,6.9 0 0 1 240.05,605.02" fill="none" stroke="#3cc8ee" stroke-width="1.7"/><path d="M243.50,611.00 L240.05,605.02" stroke="#333" stroke-width="1.4"/></svg>
<div style="left:203.5px;top:617.5px;font-size:6px;color:#555;line-height:1;white-space:nowrap;width:80px;text-align:center;">0.90 Hz</div>
<div style="left:232px;top:597.8px;font-size:6px;color:#444;line-height:1;white-space:nowrap;width:80px;text-align:center;">Amount</div>
<svg style="left:0;top:0;overflow:visible" width="1" height="1"><path d="M268.55,616.98 A6.9,6.9 0 1 1 275.45,616.98" fill="none" stroke="#333" stroke-width="1.4"/><path d="M268.55,616.98 A6.9,6.9 0 0 1 275.45,605.02" fill="none" stroke="#3cc8ee" stroke-width="1.7"/><path d="M272.00,611.00 L276.06,605.42" stroke="#333" stroke-width="1.4"/></svg>
<div style="left:232px;top:617.5px;font-size:6px;color:#555;line-height:1;white-space:nowrap;width:80px;text-align:center;">83 %</div>
<div style="left:261px;top:597.8px;font-size:6px;color:#444;line-height:1;white-space:nowrap;width:80px;text-align:center;">Feedback</div>
<svg style="left:0;top:0;overflow:visible" width="1" height="1"><path d="M297.55,616.98 A6.9,6.9 0 1 1 304.45,616.98" fill="none" stroke="#333" stroke-width="1.4"/><path d="M301.00,611.00 L295.87,615.62" stroke="#333" stroke-width="1.4"/></svg>
<div style="left:261px;top:617.5px;font-size:6px;color:#555;line-height:1;white-space:nowrap;width:80px;text-align:center;">0.0 %</div>
<div style="left:311px;top:610.5px;width:2.5px;height:0.8px;background:#666;"></div>
<div style="left:316px;top:607.5px;width:9px;height:6.5px;background:#cfcfcf;border:0.5px solid #888;box-sizing:border-box;"></div>
<div style="left:364.5px;top:570px;width:3.5px;height:16.5px;background:#47d44a;"></div>
<div style="left:364.5px;top:566px;width:3.5px;height:2px;background:#777;"></div>
<div style="left:369px;top:522px;width:347.5px;height:104.5px;background:#a2a2a2;border-radius:2px;"></div>
<div style="left:369px;top:522px;width:347.5px;height:10.5px;background:#a9a9a9;"></div>
<svg style="left:369.5px;top:523px" width="9" height="9"><circle cx="4.5" cy="4.5" r="3.3" fill="#f5a800" stroke="#c88a00" stroke-width="0.5"/></svg>
<div style="left:380px;top:524.5px;font-size:6px;color:#444;line-height:1;white-space:nowrap;">Hybrid Reverb</div>
<div style="left:495px;top:522.5px;width:49.5px;height:11px;background:#1b1b1b;border-radius:3px 3px 0 0;"></div>
<div style="left:545.5px;top:523px;width:49px;height:8.5px;background:#1e1e1e;border:0.7px solid #8a8a8a;border-radius:3px;box-sizing:border-box;"></div>
<div style="left:480px;top:524.5px;font-size:6px;color:#ddd;line-height:1;white-space:nowrap;width:80px;text-align:center;">Reverb</div>
<div style="left:563px;top:525px;width:4px;height:5px;background:#f5a300;"></div>
<div style="left:568.5px;top:525px;font-size:6px;color:#999;line-height:1;white-space:nowrap;">EQ</div>
<svg style="left:699px;top:523px" width="16" height="9"><circle cx="4.5" cy="4.5" r="2.8" fill="none" stroke="#666" stroke-width="0.6"/><rect x="10.5" y="2.5" width="3" height="4" fill="#444"/></svg>
<div style="left:345.5px;top:535px;font-size:6px;color:#444;line-height:1;white-space:nowrap;width:80px;text-align:center;">Send</div>
<svg style="left:0;top:0;overflow:visible" width="1" height="1"><path d="M381.05,554.48 A6.9,6.9 0 1 1 387.95,554.48" fill="none" stroke="#333" stroke-width="1.4"/><path d="M381.05,554.48 A6.9,6.9 0 1 1 391.16,550.29" fill="none" stroke="#3cc8ee" stroke-width="1.7"/><path d="M384.50,548.50 L390.48,551.95" stroke="#333" stroke-width="1.4"/></svg>
<div style="left:345.5px;top:555px;font-size:6px;color:#555;line-height:1;white-space:nowrap;width:80px;text-align:center;">-0.0 dB</div>
<div style="left:345.5px;top:567px;font-size:6px;color:#444;line-height:1;white-space:nowrap;width:80px;text-align:center;">Predelay</div>
<svg style="left:0;top:0;overflow:visible" width="1" height="1"><path d="M381.05,585.48 A6.9,6.9 0 1 1 387.95,585.48" fill="none" stroke="#333" stroke-width="1.4"/><path d="M381.05,585.48 A6.9,6.9 0 0 1 379.62,584.38" fill="none" stroke="#3cc8ee" stroke-width="1.7"/><path d="M384.50,579.50 L378.92,583.56" stroke="#333" stroke-width="1.4"/></svg>
<div style="left:345.5px;top:587.5px;font-size:6px;color:#555;line-height:1;white-space:nowrap;width:80px;text-align:center;">0.28 ms</div>
<div style="left:372px;top:594.5px;width:12px;height:6.5px;background:#f5a300;font-size:4px;line-height:6.5px;text-align:center;color:#6b4a00;">ms</div>
<div style="left:386.5px;top:594.5px;width:11.5px;height:6.5px;background:#d4d4d4;font-size:4px;line-height:6.5px;text-align:center;color:#333;">♪</div>
<div style="left:345.5px;top:609.5px;font-size:6px;color:#444;line-height:1;white-space:nowrap;width:80px;text-align:center;">Feedback</div>
<div style="left:372px;top:616px;width:26px;height:6.5px;background:#d9d9d9;"></div>
<div style="left:372px;top:616px;width:4px;height:6.5px;background:#3cc8ee;"></div>
<div style="left:378px;top:617px;font-size:6px;color:#555;line-height:1;white-space:nowrap;">17 %</div>
<div style="left:401.5px;top:533px;width:281px;height:60.5px;background:#1b1b1b;"></div>
<svg style="left:401.5px;top:533px" width="281" height="45"><polygon points="1.5,3.00 2.5,8.33 3.5,12.72 4.5,12.75 5.5,14.49 6.5,14.30 7.5,14.76 8.5,16.84 9.5,17.22 10.5,15.27 11.5,17.00 12.5,17.25 13.5,15.76 14.5,17.10 15.5,16.56 16.5,17.43 17.5,17.30 18.5,18.28 19.5,17.61 20.5,17.39 21.5,18.03 22.5,17.84 23.5,18.05 24.5,18.93 25.5,18.14 26.5,18.43 27.5,18.84 28.5,19.20 29.5,18.37 30.5,18.85 31.5,18.66 32.5,18.58 33.5,18.79 34.5,18.66 35.5,19.17 36.5,18.87 37.5,19.20 38.5,18.85 39.5,18.94 40.5,19.56 41.5,19.56 42.5,19.52 43.5,19.03 44.5,19.42 45.5,19.31 46.5,19.55 47.5,19.44 48.5,19.53 49.5,19.57 50.5,19.45 51.5,19.46 52.5,19.29 53.5,19.44 54.5,19.32 55.5,19.37 56.5,19.32 57.5,19.50 58.5,19.79 59.5,19.43 60.5,19.39 61.5,19.64 62.5,19.65 63.5,19.66 64.5,19.67 65.5,19.67 66.5,19.68 67.5,19.69 68.5,19.70 69.5,19.70 70.5,19.71 71.5,19.72 72.5,19.72 73.5,19.73 74.5,19.73 75.5,19.74 76.5,19.74 77.5,19.75 78.5,19.75 79.5,19.76 80.5,19.76 81.5,19.77 82.5,19.77 83.5,19.77 84.5,19.78 85.5,19.78 86.5,19.78 87.5,19.79 88.5,19.79 89.5,19.79 90.5,19.80 91.5,19.80 92.5,19.80 93.5,19.80 94.5,19.81 95.5,19.81 96.5,19.81 97.5,19.81 98.5,19.82 99.5,19.82 100.5,19.82 101.5,19.82 102.5,19.83 103.5,19.83 104.5,19.83 105.5,19.83 106.5,19.83 107.5,19.83 108.5,19.84 109.5,19.84 110.5,19.84 111.5,19.84 112.5,19.84 113.5,19.84 114.5,19.85 115.5,19.85 116.5,19.85 117.5,19.85 118.5,19.85 119.5,19.85 120.5,19.85 121.5,19.85 122.5,19.86 123.5,19.86 124.5,19.86 125.5,19.86 126.5,19.86 127.5,19.86 128.5,19.86 129.5,19.86 130.5,19.86 131.5,19.86 132.5,19.87 133.5,19.87 134.5,19.87 135.5,19.87 136.5,19.87 137.5,19.87 138.5,19.87 139.5,19.87 140.5,19.87 141.5,19.87 142.5,19.87 143.5,19.87 144.5,19.87 145.5,19.88 146.5,19.88 147.5,19.88 148.5,19.88 149.5,19.88 150.5,19.88 151.5,19.88 152.5,19.88 153.5,19.88 154.5,19.88 155.5,19.88 156.5,19.88 157.5,19.88 158.5,19.88 159.5,19.88 160.5,19.88 161.5,19.88 162.5,19.88 163.5,19.88 164.5,19.88 165.5,19.89 166.5,19.89 167.5,19.89 168.5,19.89 169.5,19.89 170.5,19.89 171.5,19.89 172.5,19.89 173.5,19.89 174.5,19.89 175.5,19.89 176.5,19.89 177.5,19.89 178.5,19.89 179.5,19.89 180.5,19.89 181.5,19.89 182.5,19.89 183.5,19.89 184.5,19.89 185.5,19.89 186.5,19.89 187.5,19.89 188.5,19.89 189.5,19.89 190.5,19.89 191.5,19.89 192.5,19.89 193.5,19.89 194.5,19.89 195.5,19.89 196.5,19.89 197.5,19.89 198.5,19.89 199.5,19.89 200.5,19.89 201.5,19.89 202.5,19.89 203.5,19.89 204.5,19.89 205.5,19.89 206.5,19.89 207.5,19.89 208.5,19.89 209.5,19.90 210.5,19.90 211.5,19.90 212.5,19.90 213.5,19.90 214.5,19.90 215.5,19.90 216.5,19.90 217.5,19.90 218.5,19.90 219.5,19.90 220.5,19.90 221.5,19.90 222.5,19.90 223.5,19.90 224.5,19.90 225.5,19.90 226.5,19.90 227.5,19.90 228.5,19.90 229.5,19.90 230.5,19.90 231.5,19.90 232.5,19.90 233.5,19.90 234.5,19.90 235.5,19.90 236.5,19.90 237.5,19.90 238.5,19.90 239.5,19.90 240.5,19.90 241.5,19.90 242.5,19.90 243.5,19.90 244.5,19.90 245.5,19.90 246.5,19.90 247.5,19.90 248.5,19.90 249.5,19.90 250.5,19.90 251.5,19.90 252.5,19.90 253.5,19.90 254.5,19.90 255.5,19.90 256.5,19.90 257.5,19.90 258.5,19.90 259.5,19.90 260.5,19.90 261.5,19.90 262.5,19.90 263.5,19.90 264.5,19.90 265.5,19.90 266.5,19.90 267.5,19.90 268.5,19.90 269.5,19.90 270.5,19.90 271.5,19.90 272.5,19.90 273.5,19.90 274.5,19.90 275.5,19.90 276.5,19.90 277.5,19.90 278.5,19.90 279.5,19.90 280.5,19.90 280.5,21.10 279.5,21.10 278.5,21.10 277.5,21.10 276.5,21.10 275.5,21.10 274.5,21.10 273.5,21.10 272.5,21.10 271.5,21.10 270.5,21.10 269.5,21.10 268.5,21.10 267.5,21.10 266.5,21.10 265.5,21.10 264.5,21.10 263.5,21.10 262.5,21.10 261.5,21.10 260.5,21.10 259.5,21.10 258.5,21.10 257.5,21.10 256.5,21.10 255.5,21.10 254.5,21.10 253.5,21.10 252.5,21.10 251.5,21.10 250.5,21.10 249.5,21.10 248.5,21.10 247.5,21.10 246.5,21.10 245.5,21.10 244.5,21.10 243.5,21.10 242.5,21.10 241.5,21.10 240.5,21.10 239.5,21.10 238.5,21.10 237.5,21.10 236.5,21.10 235.5,21.10 234.5,21.10 233.5,21.10 232.5,21.10 231.5,21.10 230.5,21.10 229.5,21.10 228.5,21.10 227.5,21.10 226.5,21.10 225.5,21.10 224.5,21.10 223.5,21.10 222.5,21.10 221.5,21.10 220.5,21.10 219.5,21.10 218.5,21.10 217.5,21.10 216.5,21.10 215.5,21.10 214.5,21.10 213.5,21.10 212.5,21.10 211.5,21.10 210.5,21.10 209.5,21.10 208.5,21.11 207.5,21.11 206.5,21.11 205.5,21.11 204.5,21.11 203.5,21.11 202.5,21.11 201.5,21.11 200.5,21.11 199.5,21.11 198.5,21.11 197.5,21.11 196.5,21.11 195.5,21.11 194.5,21.11 193.5,21.11 192.5,21.11 191.5,21.11 190.5,21.11 189.5,21.11 188.5,21.11 187.5,21.11 186.5,21.11 185.5,21.11 184.5,21.11 183.5,21.11 182.5,21.11 181.5,21.11 180.5,21.11 179.5,21.11 178.5,21.11 177.5,21.11 176.5,21.11 175.5,21.11 174.5,21.11 173.5,21.11 172.5,21.11 171.5,21.11 170.5,21.11 169.5,21.11 168.5,21.11 167.5,21.11 166.5,21.11 165.5,21.11 164.5,21.12 163.5,21.12 162.5,21.12 161.5,21.12 160.5,21.12 159.5,21.12 158.5,21.12 157.5,21.12 156.5,21.12 155.5,21.12 154.5,21.12 153.5,21.12 152.5,21.12 151.5,21.12 150.5,21.12 149.5,21.12 148.5,21.12 147.5,21.12 146.5,21.12 145.5,21.12 144.5,21.13 143.5,21.13 142.5,21.13 141.5,21.13 140.5,21.13 139.5,21.13 138.5,21.13 137.5,21.13 136.5,21.13 135.5,21.13 134.5,21.13 133.5,21.13 132.5,21.13 131.5,21.14 130.5,21.14 129.5,21.14 128.5,21.14 127.5,21.14 126.5,21.14 125.5,21.14 124.5,21.14 123.5,21.14 122.5,21.14 121.5,21.15 120.5,21.15 119.5,21.15 118.5,21.15 117.5,21.15 116.5,21.15 115.5,21.15 114.5,21.15 113.5,21.16 112.5,21.16 111.5,21.16 110.5,21.16 109.5,21.16 108.5,21.16 107.5,21.17 106.5,21.17 105.5,21.17 104.5,21.17 103.5,21.17 102.5,21.17 101.5,21.18 100.5,21.18 99.5,21.18 98.5,21.18 97.5,21.19 96.5,21.19 95.5,21.19 94.5,21.19 93.5,21.20 92.5,21.20 91.5,21.20 90.5,21.20 89.5,21.21 88.5,21.21 87.5,21.21 86.5,21.22 85.5,21.22 84.5,21.22 83.5,21.23 82.5,21.23 81.5,21.23 80.5,21.24 79.5,21.24 78.5,21.25 77.5,21.25 76.5,21.26 75.5,21.26 74.5,21.27 73.5,21.27 72.5,21.28 71.5,21.28 70.5,21.29 69.5,21.30 68.5,21.30 67.5,21.31 66.5,21.32 65.5,21.33 64.5,21.33 63.5,21.34 62.5,21.35 61.5,21.36 60.5,21.61 59.5,21.57 58.5,21.21 57.5,21.50 56.5,21.68 55.5,21.63 54.5,21.68 53.5,21.56 52.5,21.71 51.5,21.54 50.5,21.55 49.5,21.43 48.5,21.47 47.5,21.56 46.5,21.45 45.5,21.69 44.5,21.58 43.5,21.97 42.5,21.48 41.5,21.44 40.5,21.44 39.5,22.06 38.5,22.15 37.5,21.80 36.5,22.13 35.5,21.83 34.5,22.34 33.5,22.21 32.5,22.42 31.5,22.34 30.5,22.15 29.5,22.63 28.5,21.80 27.5,22.16 26.5,22.57 25.5,22.86 24.5,22.07 23.5,22.95 22.5,23.16 21.5,22.97 20.5,23.61 19.5,23.39 18.5,22.72 17.5,23.70 16.5,23.57 15.5,24.44 14.5,23.90 13.5,25.24 12.5,23.75 11.5,24.00 10.5,25.73 9.5,23.78 8.5,24.16 7.5,26.24 6.5,26.70 5.5,26.51 4.5,28.25 3.5,28.28 2.5,32.67 1.5,38.00" fill="#e8a010"/></svg>
<div style="left:600px;top:536px;font-size:6px;color:#ccc;line-height:1;white-space:nowrap;width:78px;text-align:right;">100 % / 0.00 s</div>
<div style="left:405.5px;top:577.5px;width:4.5px;height:6px;background:#f5a300;"></div>
<div style="left:413px;top:577px;font-size:6px;color:#aaa;line-height:1;white-space:nowrap;">Attack</div>
<div style="left:443px;top:577px;font-size:6px;color:#aaa;line-height:1;white-space:nowrap;">Decay</div>
<div style="left:472px;top:577px;font-size:6px;color:#aaa;line-height:1;white-space:nowrap;">Size</div>
<div style="left:412px;top:584.5px;font-size:6px;color:#f5a300;line-height:1;white-space:nowrap;font-weight:bold;">0.08 ms</div>
<div style="left:444px;top:584.5px;font-size:6px;color:#f5a300;line-height:1;white-space:nowrap;font-weight:bold;">17.8 s</div>
<div style="left:471px;top:584.5px;font-size:6px;color:#f5a300;line-height:1;white-space:nowrap;font-weight:bold;">100%</div>
<div style="left:494px;top:577px;width:0.8px;height:14px;background:#444;"></div>
<div style="left:527.5px;top:577px;width:0.8px;height:14px;background:#444;"></div>
<div style="left:503px;top:577px;font-size:6px;color:#3cc8ee;line-height:1;white-space:nowrap;">-Fb-</div>
<div style="left:500px;top:584.5px;font-size:6px;color:#f5a300;line-height:1;white-space:nowrap;font-weight:bold;">Serial</div>
<div style="left:521px;top:584.5px;font-size:6px;color:#f5a300;line-height:1;white-space:nowrap;">▾</div>
<div style="left:531px;top:577px;font-size:6px;color:#aaa;line-height:1;white-space:nowrap;">Algorithm</div>
<div style="left:531px;top:584.5px;font-size:6px;color:#3cc8ee;line-height:1;white-space:nowrap;font-weight:bold;">Dark Hall</div>
<div style="left:562px;top:584.5px;font-size:6px;color:#aaa;line-height:1;white-space:nowrap;">▾</div>
<div style="left:539px;top:577px;font-size:6px;color:#aaa;line-height:1;white-space:nowrap;width:80px;text-align:center;">Freeze</div>
<div style="left:571.5px;top:584.5px;width:8px;height:7px;border:0.7px solid #666;box-sizing:border-box;"></div>
<div style="left:580px;top:584.5px;width:8px;height:7px;background:#24424e;border:0.7px solid #3cc8ee;box-sizing:border-box;"></div>
<div style="left:566px;top:577px;font-size:6px;color:#aaa;line-height:1;white-space:nowrap;width:80px;text-align:center;">Delay</div>
<div style="left:566px;top:584.5px;font-size:6px;color:#3cc8ee;line-height:1;white-space:nowrap;width:80px;text-align:center;"><b>0.00 ms</b></div>
<div style="left:596px;top:577px;font-size:6px;color:#aaa;line-height:1;white-space:nowrap;width:80px;text-align:center;">Mod</div>
<div style="left:596px;top:584.5px;font-size:6px;color:#3cc8ee;line-height:1;white-space:nowrap;width:80px;text-align:center;"><b>50 %</b></div>
<div style="left:624px;top:577px;font-size:6px;color:#aaa;line-height:1;white-space:nowrap;width:80px;text-align:center;">Bass X</div>
<div style="left:624px;top:584.5px;font-size:6px;color:#3cc8ee;line-height:1;white-space:nowrap;width:80px;text-align:center;"><b>440 Hz</b></div>
<div style="left:401.5px;top:593.5px;width:281px;height:32.5px;background:#9d9d9d;"></div>
<div style="left:492.5px;top:596px;width:0.8px;height:28px;background:#888;"></div>
<div style="left:527.5px;top:596px;width:0.8px;height:28px;background:#888;"></div>
<div style="left:404px;top:598px;font-size:6px;color:#555;line-height:1;white-space:nowrap;">Convolution IR</div>
<div style="left:475px;top:597px;width:15px;height:6px;background:#d8d8d8;border-radius:3px;font-size:4px;line-height:6px;text-align:center;color:#444;">‹ ›</div>
<div style="left:403.5px;top:606px;width:87px;height:7px;background:#d5d5d5;border:0.5px solid #888;box-sizing:border-box;font-size:5px;line-height:6px;color:#555;padding-left:2px;">Chambers and Large Rooms</div>
<div style="left:486px;top:607px;font-size:6px;color:#333;line-height:1;white-space:nowrap;">▾</div>
<div style="left:403.5px;top:615px;width:87px;height:7px;background:#d5d5d5;border:0.5px solid #888;box-sizing:border-box;font-size:5px;line-height:6px;color:#555;padding-left:2px;">Concrete Bar 1B</div>
<div style="left:486px;top:616px;font-size:6px;color:#333;line-height:1;white-space:nowrap;">▾</div>
<div style="left:470.5px;top:598.5px;font-size:6px;color:#444;line-height:1;white-space:nowrap;width:80px;text-align:center;">Blend</div>
<svg style="left:0;top:0;overflow:visible" width="1" height="1"><path d="M507.05,616.98 A6.9,6.9 0 1 1 513.95,616.98" fill="none" stroke="#333" stroke-width="1.4"/><path d="M507.05,616.98 A6.9,6.9 0 0 1 503.84,609.21" fill="none" stroke="#3cc8ee" stroke-width="1.7"/><path d="M510.50,611.00 L505.14,606.66" stroke="#333" stroke-width="1.4"/></svg>
<div style="left:470.5px;top:618.5px;font-size:6px;color:#555;line-height:1;white-space:nowrap;width:80px;text-align:center;">83/17</div>
<div style="left:506.5px;top:598.5px;font-size:6px;color:#444;line-height:1;white-space:nowrap;width:80px;text-align:center;">Decay</div>
<svg style="left:0;top:0;overflow:visible" width="1" height="1"><path d="M543.05,616.98 A6.9,6.9 0 1 1 549.95,616.98" fill="none" stroke="#333" stroke-width="1.4"/><path d="M543.05,616.98 A6.9,6.9 0 0 1 544.71,604.34" fill="none" stroke="#3cc8ee" stroke-width="1.7"/><path d="M546.50,611.00 L546.50,604.10" stroke="#333" stroke-width="1.4"/></svg>
<div style="left:506.5px;top:618.5px;font-size:6px;color:#555;line-height:1;white-space:nowrap;width:80px;text-align:center;">5.05 s</div>
<div style="left:536px;top:598.5px;font-size:6px;color:#444;line-height:1;white-space:nowrap;width:80px;text-align:center;">Size</div>
<svg style="left:0;top:0;overflow:visible" width="1" height="1"><path d="M572.55,616.98 A6.9,6.9 0 1 1 579.45,616.98" fill="none" stroke="#333" stroke-width="1.4"/><path d="M572.55,616.98 A6.9,6.9 0 1 1 580.88,606.12" fill="none" stroke="#3cc8ee" stroke-width="1.7"/><path d="M576.00,611.00 L582.30,608.19" stroke="#333" stroke-width="1.4"/></svg>
<div style="left:536px;top:618.5px;font-size:6px;color:#555;line-height:1;white-space:nowrap;width:80px;text-align:center;">97 %</div>
<div style="left:567px;top:598.5px;font-size:6px;color:#444;line-height:1;white-space:nowrap;width:80px;text-align:center;">Damping</div>
<svg style="left:0;top:0;overflow:visible" width="1" height="1"><path d="M603.55,616.98 A6.9,6.9 0 1 1 610.45,616.98" fill="none" stroke="#333" stroke-width="1.4"/><path d="M603.55,616.98 A6.9,6.9 0 1 1 611.88,606.12" fill="none" stroke="#3cc8ee" stroke-width="1.7"/><path d="M607.00,611.00 L613.30,608.19" stroke="#333" stroke-width="1.4"/></svg>
<div style="left:567px;top:618.5px;font-size:6px;color:#555;line-height:1;white-space:nowrap;width:80px;text-align:center;">82 %</div>
<div style="left:596px;top:598.5px;font-size:6px;color:#444;line-height:1;white-space:nowrap;width:80px;text-align:center;">Shape</div>
<svg style="left:0;top:0;overflow:visible" width="1" height="1"><path d="M632.55,616.98 A6.9,6.9 0 1 1 639.45,616.98" fill="none" stroke="#333" stroke-width="1.4"/><path d="M632.55,616.98 A6.9,6.9 0 0 1 629.14,610.28" fill="none" stroke="#3cc8ee" stroke-width="1.7"/><path d="M636.00,611.00 L630.02,607.55" stroke="#333" stroke-width="1.4"/></svg>
<div style="left:596px;top:618.5px;font-size:6px;color:#555;line-height:1;white-space:nowrap;width:80px;text-align:center;">25.4</div>
<div style="left:626px;top:598.5px;font-size:6px;color:#444;line-height:1;white-space:nowrap;width:80px;text-align:center;">Bass Mult</div>
<svg style="left:0;top:0;overflow:visible" width="1" height="1"><path d="M662.55,616.98 A6.9,6.9 0 1 1 669.45,616.98" fill="none" stroke="#333" stroke-width="1.4"/><path d="M662.55,616.98 A6.9,6.9 0 0 1 666.00,604.10" fill="none" stroke="#3cc8ee" stroke-width="1.7"/><path d="M666.00,611.00 L666.00,604.10" stroke="#333" stroke-width="1.4"/></svg>
<div style="left:626px;top:618.5px;font-size:6px;color:#555;line-height:1;white-space:nowrap;width:80px;text-align:center;">300 %</div>
<div style="left:682.5px;top:533px;width:0.8px;height:93px;background:#8a8a8a;"></div>
<div style="left:660px;top:535px;font-size:6px;color:#444;line-height:1;white-space:nowrap;width:80px;text-align:center;">Stereo</div>
<svg style="left:0;top:0;overflow:visible" width="1" height="1"><path d="M696.55,553.48 A6.9,6.9 0 1 1 703.45,553.48" fill="none" stroke="#333" stroke-width="1.4"/><path d="M696.55,553.48 A6.9,6.9 0 0 1 703.45,541.52" fill="none" stroke="#3cc8ee" stroke-width="1.7"/><path d="M700.00,547.50 L703.45,541.52" stroke="#333" stroke-width="1.4"/></svg>
<div style="left:660px;top:555px;font-size:6px;color:#555;line-height:1;white-space:nowrap;width:80px;text-align:center;">100 %</div>
<div style="left:660px;top:563px;font-size:6px;color:#444;line-height:1;white-space:nowrap;width:80px;text-align:center;">Vintage</div>
<div style="left:687px;top:569.5px;width:26px;height:6.5px;background:#dddddd;border:0.5px solid #888;box-sizing:border-box;"></div>
<div style="left:687px;top:569.5px;width:13px;height:6.5px;background:#3cc8ee;"></div>
<div style="left:700px;top:570.5px;font-size:5.17px;color:#333;line-height:1;white-space:nowrap;">Off</div>
<div style="left:660px;top:580.5px;font-size:6px;color:#444;line-height:1;white-space:nowrap;width:80px;text-align:center;">Bass</div>
<div style="left:687px;top:586.5px;width:26px;height:6.5px;background:#d0d0d0;border:0.5px solid #888;box-sizing:border-box;font-size:4.5px;line-height:5.5px;text-align:center;color:#666;">Mono</div>
<div style="left:660px;top:598.5px;font-size:6px;color:#444;line-height:1;white-space:nowrap;width:80px;text-align:center;">Dry/Wet</div>
<svg style="left:0;top:0;overflow:visible" width="1" height="1"><path d="M696.55,616.98 A6.9,6.9 0 1 1 703.45,616.98" fill="none" stroke="#333" stroke-width="1.4"/><path d="M696.55,616.98 A6.9,6.9 0 0 1 696.55,605.02" fill="none" stroke="#3cc8ee" stroke-width="1.7"/><path d="M700.00,611.00 L704.06,605.42" stroke="#333" stroke-width="1.4"/></svg>
<div style="left:660px;top:618.5px;font-size:6px;color:#555;line-height:1;white-space:nowrap;width:80px;text-align:center;">40 %</div>
<div style="left:717.5px;top:566px;width:3.5px;height:20px;background:#47d44a;"></div>
<div style="left:717.5px;top:562px;width:3.5px;height:2px;background:#777;"></div>
<div style="left:722.5px;top:522px;width:71.5px;height:104.5px;background:#a2a2a2;border-radius:2px;"></div>
<div style="left:722.5px;top:522px;width:71.5px;height:10.5px;background:#a9a9a9;"></div>
<svg style="left:723px;top:523px" width="18" height="9"><circle cx="4.5" cy="4.5" r="3.3" fill="#f5a800" stroke="#c88a00" stroke-width="0.5"/><circle cx="12.5" cy="4.5" r="2.6" fill="#ddd" stroke="#666" stroke-width="0.6"/><circle cx="12.5" cy="4.5" r="1" fill="#333"/></svg>
<div style="left:742px;top:524.5px;font-size:6px;color:#444;line-height:1;white-space:nowrap;">EQ Eight</div>
<div style="left:750px;top:532.5px;width:0.8px;height:93px;background:#8a8a8a;"></div>
<div style="left:777.5px;top:532.5px;width:0.8px;height:93px;background:#8a8a8a;"></div>
<div style="left:725px;top:550px;font-size:6px;color:#555;line-height:1;white-space:nowrap;">Analyze</div>
<div style="left:725px;top:559.5px;font-size:6px;color:#555;line-height:1;white-space:nowrap;">Block</div>
<div style="left:725px;top:565.5px;width:23px;height:6.5px;background:#d6d6d6;border:0.5px solid #888;box-sizing:border-box;font-size:4.5px;line-height:5.5px;color:#555;padding-left:2px;">4 · 8 ▾</div>
<div style="left:725px;top:576.5px;font-size:6px;color:#555;line-height:1;white-space:nowrap;">Refresh</div>
<div style="left:725px;top:583px;width:23px;height:6.5px;background:#d6d6d6;border:0.5px solid #888;box-sizing:border-box;"></div>
<div style="left:725.5px;top:583.5px;width:2.5px;height:5.5px;background:#3cc8ee;"></div>
<div style="left:731px;top:584px;font-size:5.17px;color:#666;line-height:1;white-space:nowrap;">60.000</div>
<div style="left:725px;top:594px;font-size:6px;color:#555;line-height:1;white-space:nowrap;">Avg</div>
<div style="left:725px;top:600.5px;width:23px;height:6.5px;background:#d6d6d6;border:0.5px solid #888;box-sizing:border-box;font-size:4.5px;line-height:5.5px;color:#666;padding-left:5px;">1.00</div>
<div style="left:724px;top:534px;font-size:6px;color:#444;line-height:1;white-space:nowrap;width:80px;text-align:center;">Freq</div>
<svg style="left:0;top:0;overflow:visible" width="1" height="1"><path d="M760.55,552.48 A6.9,6.9 0 1 1 767.45,552.48" fill="none" stroke="#333" stroke-width="1.4"/><path d="M760.55,552.48 A6.9,6.9 0 0 1 757.34,548.29" fill="none" stroke="#3cc8ee" stroke-width="1.7"/><path d="M764.00,546.50 L759.12,541.62" stroke="#333" stroke-width="1.4"/></svg>
<div style="left:724px;top:554px;font-size:6px;color:#555;line-height:1;white-space:nowrap;width:80px;text-align:center;">78.3 Hz</div>
<div style="left:724px;top:562px;font-size:6px;color:#444;line-height:1;white-space:nowrap;width:80px;text-align:center;">Gain</div>
<svg style="left:0;top:0;overflow:visible" width="1" height="1"><path d="M760.55,582.48 A6.9,6.9 0 1 1 767.45,582.48" fill="none" stroke="#666" stroke-width="1.1"/><path d="M764.00,576.50 L764.00,569.60" stroke="#666" stroke-width="1.1"/></svg>
<div style="left:724px;top:585px;font-size:6px;color:#555;line-height:1;white-space:nowrap;width:80px;text-align:center;">0.00 dB</div>
<div style="left:724px;top:593.5px;font-size:6px;color:#444;line-height:1;white-space:nowrap;width:80px;text-align:center;">Q</div>
<div style="left:754px;top:599.5px;width:20px;height:6.5px;background:#d6d6d6;border:0.5px solid #888;box-sizing:border-box;"></div>
<div style="left:754px;top:599.5px;width:10px;height:6.5px;background:#3cc8ee;"></div>
<div style="left:754px;top:608.5px;width:20px;height:6.5px;background:#d6d6d6;border:0.5px solid #888;box-sizing:border-box;"></div>
<div style="left:758px;top:618.5px;width:5px;height:5px;background:#3cc8ee;"></div>
<div style="left:766px;top:618.5px;font-size:6px;color:#555;line-height:1;white-space:nowrap;">1</div>
<div style="left:750px;top:534px;font-size:6px;color:#444;line-height:1;white-space:nowrap;width:80px;text-align:center;">Freq</div>
<svg style="left:0;top:0;overflow:visible" width="1" height="1"><path d="M785.55,552.48 A6.9,6.9 0 1 1 792.45,552.48" fill="none" stroke="#ddd" stroke-width="1.4"/><path d="M789.00,546.50 L783.02,543.05" stroke="#ddd" stroke-width="1.4"/></svg>
<div style="left:750px;top:554px;font-size:6px;color:#555;line-height:1;white-space:nowrap;width:80px;text-align:center;">250 Hz</div>
<div style="left:750px;top:562px;font-size:6px;color:#444;line-height:1;white-space:nowrap;width:80px;text-align:center;">Gain</div>
<svg style="left:0;top:0;overflow:visible" width="1" height="1"><path d="M785.55,582.48 A6.9,6.9 0 1 1 792.45,582.48" fill="none" stroke="#666" stroke-width="1.1"/><path d="M789.00,576.50 L783.02,573.05" stroke="#666" stroke-width="1.1"/></svg>
<div style="left:780px;top:599.5px;width:14px;height:6.5px;background:#a5a5a5;border:0.5px solid #777;box-sizing:border-box;"></div>
<div style="left:780px;top:608.5px;width:14px;height:6.5px;background:#a5a5a5;border:0.5px solid #777;box-sizing:border-box;"></div>
<div style="left:782px;top:618.5px;width:5px;height:5px;background:#d6d6d6;"></div>
<svg style="left:3.5px;top:633.5px" width="12" height="12"><circle cx="5.5" cy="5.5" r="4.5" fill="#8a8a8a" stroke="#4a4a4a" stroke-width="1.2"/><polygon points="4,3 8,5.5 4,8" fill="#ddd"/></svg>
<div style="left:19.5px;top:633.8px;width:515px;height:10.8px;background:#939393;border:0.8px solid #575757;border-radius:1.5px;box-sizing:border-box;"></div>
<div style="left:540px;top:633.8px;width:113px;height:10.8px;background:#939393;border:0.8px solid #575757;border-radius:1.5px;box-sizing:border-box;"></div>
<div style="left:642px;top:636px;width:8px;height:7px;background:#bbb;"></div>
<div style="left:657.5px;top:629.5px;width:123.5px;height:16px;background:#5c5c5c;"></div>
<div style="left:660.5px;top:637px;font-size:6px;color:#bbb;line-height:1;white-space:nowrap;">22-Electric</div>
<svg style="left:693px;top:634.5px" width="86" height="10"><rect x="0" y="0" width="30" height="10" fill="#cfcfcf"/><rect x="0" y="5" width="18" height="5" fill="#222"/><rect x="20" y="3" width="8" height="3" fill="#e8a010"/><rect x="31" y="0" width="30" height="10" fill="#d8d8d8"/><rect x="32" y="3" width="27" height="4" fill="#222"/><rect x="34" y="4" width="20" height="1.5" fill="#e8a010"/><rect x="62" y="0" width="24" height="10" fill="#c8c8c8"/><rect x="64" y="2" width="6" height="6" fill="#e0e0e0"/><rect x="72" y="2" width="6" height="6" fill="#e0e0e0"/></svg>
<svg style="left:783px;top:633px" width="14" height="14"><circle cx="7" cy="7" r="5" fill="#8a8a8a" stroke="#4a4a4a" stroke-width="1.1"/><rect x="5" y="4" width="4" height="4" fill="#ddd"/><rect x="3.5" y="8" width="7" height="1.5" fill="#ddd"/></svg>
</body></html>
